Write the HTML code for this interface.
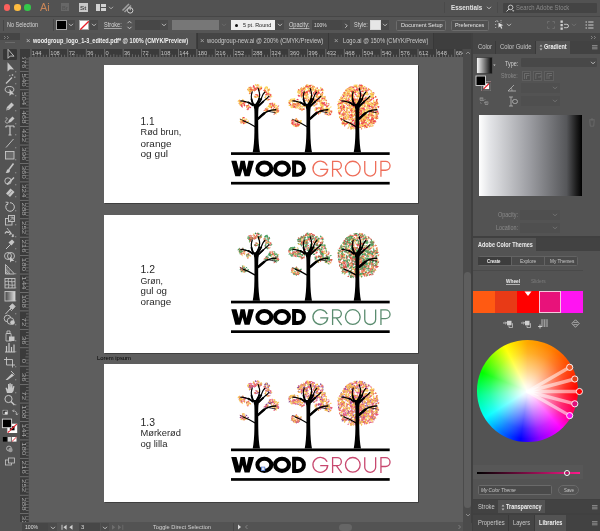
<!DOCTYPE html><html><head><meta charset="utf-8"><style>
*{box-sizing:border-box;margin:0;padding:0}
html,body{width:600px;height:531px;overflow:hidden;background:#535353;font-family:"Liberation Sans",sans-serif;}
body{will-change:transform}
svg text{font-family:"Liberation Sans",sans-serif}
.abs{position:absolute}
.ab{position:absolute;left:104px;width:314px;background:#fff;box-shadow:0.8px 0.8px 0 rgba(0,0,0,.4)}
.ab svg{position:absolute;left:0;top:0}
</style></head><body>
<svg width="0" height="0" style="position:absolute"><defs><symbol id="trunk" overflow="visible"><path d="M-3.6,0 C-2.6,-5 -2.0,-12 -1.9,-20 C-1.8,-30 -1.7,-38 -2.0,-43 C-2.4,-45.5 -3.2,-47 -2.6,-48.5 L2.6,-48.5 C3.2,-47 2.6,-45.5 2.1,-43 C1.8,-38 1.9,-30 2.0,-20 C2.1,-12 2.7,-5 3.7,0 Z" fill="#000"/><g stroke="#000" fill="none" stroke-linecap="round"><path d="M-1.6,-25.8 C-5,-27.8 -8.5,-29.8 -13,-31.5" stroke-width="1.3"/><path d="M-13,-31.5 C-14,-32.5 -15,-33 -16,-33" stroke-width="0.6"/><path d="M1.6,-33.5 C5,-36.5 8,-39.5 11.5,-41 C14,-42 16.5,-42.5 19.5,-42.5" stroke-width="1.5"/><path d="M1.6,-33.5 C4,-35.5 6,-37.5 8,-39" stroke-width="2.4"/><path d="M12,-41 C14.5,-40.5 16.5,-40 19,-39.5" stroke-width="0.8"/><path d="M-3.5,-47 C-6,-49 -8,-50 -10,-50.3 C-12,-50.8 -14,-51.2 -15.5,-51.3" stroke-width="1.2"/><path d="M-3.5,-47 C-5,-48.2 -6.5,-49.2 -8,-49.8" stroke-width="1.8"/><path d="M-2.9,-47.5 C-4.2,-50 -5,-53 -5,-55.5 C-5,-57.5 -4.6,-59 -4.1,-60.5" stroke-width="1.2"/><path d="M-2.9,-47.5 C-3.8,-49.5 -4.5,-51.5 -4.8,-53" stroke-width="1.8"/><path d="M0,-47.7 C2,-50.5 3.4,-54 3.4,-57.3 C3.4,-59.5 2.6,-61.8 1.9,-63.9" stroke-width="1.2"/><path d="M0,-47.7 C1.2,-49.5 2.3,-51.5 2.9,-53.5" stroke-width="1.8"/><path d="M1.3,-47.5 C3.5,-50.5 5.5,-54.5 6.7,-57.9 C7.3,-58.8 7.8,-59.5 8.5,-60.2" stroke-width="1.2"/><path d="M1.3,-47.5 C2.8,-49.5 4,-51.5 5,-53.5" stroke-width="1.8"/><path d="M2.5,-46.5 C5,-49 8,-52 11,-54.3 C11.6,-54.8 12.2,-55.5 12.7,-56.1" stroke-width="1.2"/><path d="M2.5,-46.5 C4,-48 5.5,-49.5 7,-50.8" stroke-width="1.8"/></g></symbol><symbol id="cr1" overflow="visible"><path fill="var(--c0)" fill-opacity="0.92" d="M-3.7,-62.9L-4.7,-61.8L-4.3,-60.4L-3.2,-61.5zM-6.4,-62.4L-7.8,-62.2L-8.5,-61.1L-7.1,-61.2zM-6.5,-64.0L-7.6,-62.9L-7.1,-61.4L-6.0,-62.5zM-4.2,-63.4L-3.7,-61.9L-2.2,-61.2L-2.7,-62.7zM-6.5,-60.7L-7.3,-59.2L-6.9,-57.6L-6.2,-59.1zM-4.3,-64.5L-5.5,-63.2L-5.1,-61.5L-3.9,-62.8zM-5.8,-63.0L-6.3,-61.3L-5.3,-59.8L-4.7,-61.5zM-0.3,-64.7L-1.3,-63.2L-0.7,-61.4L0.2,-63.0zM6.0,-65.0L4.3,-64.9L3.5,-63.4L5.2,-63.5zM1.7,-65.5L1.2,-64.4L1.8,-63.4L2.4,-64.5zM2.0,-63.4L1.4,-62.0L2.2,-60.7L2.8,-62.1zM-0.2,-64.4L-1.5,-63.3L-1.2,-61.7L0.1,-62.7zM-0.5,-68.4L-1.6,-67.5L-1.3,-66.2L-0.2,-67.0zM5.7,-64.1L4.3,-64.2L4.0,-62.9L5.4,-62.8zM4.5,-65.5L3.3,-64.3L3.3,-62.7L4.5,-63.8zM8.9,-65.1L7.9,-64.2L8.2,-62.8L9.2,-63.7zM12.5,-62.4L11.4,-61.0L11.4,-59.2L12.5,-60.6zM9.7,-62.3L8.4,-62.5L7.9,-61.3L9.2,-61.1zM8.4,-61.7L9.2,-60.6L10.5,-61.0L9.7,-62.1zM13.7,-63.9L12.0,-63.1L11.7,-61.3L13.4,-62.0zM11.2,-62.4L11.0,-60.9L12.2,-59.9L12.5,-61.5zM9.8,-65.9L10.5,-64.2L12.1,-63.6L11.5,-65.2zM7.4,-60.5L8.4,-59.3L10.0,-59.5L8.9,-60.6zM10.8,-66.1L9.9,-64.5L10.8,-62.8L11.7,-64.5zM9.0,-65.9L8.3,-64.2L9.1,-62.6L9.9,-64.3zM13.0,-59.9L11.8,-58.7L11.7,-57.1L12.9,-58.2zM15.1,-56.3L14.0,-55.7L14.1,-54.5L15.1,-55.1zM11.4,-53.1L10.1,-53.7L8.8,-52.9L10.2,-52.3zM10.4,-57.7L11.5,-56.4L13.2,-56.3L12.1,-57.7zM9.7,-58.1L10.6,-57.1L12.0,-57.0L11.1,-58.1zM8.8,-58.0L10.0,-57.3L11.3,-57.7L10.1,-58.4zM-16.3,-51.5L-17.5,-50.3L-17.2,-48.6L-16.0,-49.8zM-16.6,-49.1L-15.9,-47.8L-14.5,-47.5L-15.2,-48.8zM-11.5,-51.3L-11.3,-49.9L-9.9,-49.6L-10.1,-51.0zM-11.7,-50.9L-12.9,-50.1L-12.5,-48.7L-11.2,-49.5zM-9.9,-51.5L-11.4,-50.8L-11.7,-49.1L-10.2,-49.9zM-8.1,-46.7L-9.7,-46.7L-10.5,-45.4L-9.0,-45.4zM0.0,-56.7L-1.4,-56.3L-1.6,-54.7L-0.1,-55.2zM-0.7,-57.8L0.2,-57.0L1.4,-57.3L0.5,-58.1zM2.7,-56.8L0.9,-56.3L0.1,-54.8L1.8,-55.2zM3.8,-56.2L2.0,-56.5L0.5,-55.5L2.3,-55.1zM-2.0,-55.9L-1.4,-54.7L0.0,-54.7L-0.6,-56.0zM12.1,-46.1L12.9,-44.6L14.5,-44.3L13.8,-45.8zM13.9,-46.7L13.5,-45.5L14.3,-44.4L14.8,-45.7zM17.6,-48.1L17.6,-46.6L19.0,-46.3L19.0,-47.7zM20.1,-43.7L18.8,-43.7L18.5,-42.5L19.8,-42.5zM14.9,-46.4L16.2,-45.5L17.6,-46.0L16.3,-46.9zM12.8,-48.7L12.4,-47.0L13.6,-45.6L13.9,-47.4zM13.9,-46.0L13.9,-44.4L15.0,-43.4L15.0,-44.9zM21.9,-45.0L20.6,-45.0L20.0,-43.9L21.2,-44.0zM13.5,-46.2L12.0,-46.4L11.0,-45.3L12.4,-45.1zM14.3,-46.4L14.8,-45.2L16.0,-45.1L15.6,-46.3zM22.8,-41.1L21.4,-40.7L21.2,-39.4L22.6,-39.7zM21.6,-41.9L19.9,-42.4L18.4,-41.5L20.1,-41.1zM18.3,-41.2L17.9,-39.8L19.0,-38.7L19.4,-40.2zM19.8,-43.6L20.1,-42.2L21.6,-42.0L21.2,-43.4zM10.9,-45.3L9.5,-44.2L9.7,-42.4L11.1,-43.5zM12.0,-43.1L10.2,-42.6L9.6,-41.0L11.3,-41.5zM8.4,-42.5L9.5,-41.5L10.8,-41.8L9.8,-42.7zM7.6,-41.4L9.2,-40.4L11.0,-41.0L9.4,-42.0zM-9.2,-31.3L-8.5,-30.3L-7.3,-30.5L-8.0,-31.5zM-16.9,-31.1L-15.9,-30.2L-14.8,-30.9L-15.7,-31.8zM-14.1,-31.6L-14.3,-29.8L-12.9,-28.7L-12.7,-30.5zM-7.4,-31.0L-8.9,-31.0L-10.1,-29.9L-8.5,-29.9zM-14.4,-33.0L-15.1,-31.8L-14.3,-30.7L-13.6,-31.8zM-10.8,-33.9L-10.1,-32.6L-8.7,-32.2L-9.4,-33.5zM-10.4,-32.7L-11.7,-32.5L-11.9,-31.2L-10.6,-31.3zM-13.6,-31.6L-12.7,-30.2L-11.0,-30.1L-11.9,-31.5zM-7.2,-31.7L-8.6,-31.3L-9.2,-29.9L-7.7,-30.3z"/><path fill="var(--c1)" fill-opacity="0.92" d="M-4.1,-64.8L-5.2,-65.4L-6.3,-64.7L-5.2,-64.2zM-2.6,-63.2L-3.9,-63.5L-4.9,-62.5L-3.5,-62.2zM-4.0,-62.9L-5.2,-62.2L-5.2,-60.9L-4.0,-61.5zM-4.7,-64.0L-6.3,-63.7L-6.7,-62.1L-5.1,-62.5zM-5.4,-61.9L-6.3,-60.8L-5.9,-59.5L-5.0,-60.5zM-8.1,-65.2L-7.3,-64.1L-6.0,-64.3L-6.8,-65.4zM-7.7,-62.1L-7.4,-60.6L-5.8,-60.0L-6.2,-61.6zM4.2,-65.7L3.7,-64.3L4.8,-63.2L5.3,-64.6zM0.6,-67.0L1.8,-65.7L3.6,-65.8L2.4,-67.1zM1.2,-66.2L-0.1,-65.6L-0.3,-64.2L1.1,-64.8zM1.9,-68.3L0.3,-67.8L-0.4,-66.2L1.3,-66.8zM-1.0,-64.0L-2.0,-63.0L-1.9,-61.6L-0.9,-62.6zM4.0,-63.7L2.9,-64.4L2.0,-63.4L3.1,-62.7zM-2.6,-66.3L-2.1,-64.6L-0.7,-63.6L-1.1,-65.3zM8.6,-61.2L7.6,-60.1L8.0,-58.6L8.9,-59.8zM7.5,-60.6L8.5,-59.5L10.0,-59.6L9.0,-60.7zM10.0,-55.4L8.6,-55.5L7.9,-54.4L9.2,-54.2zM12.7,-59.2L11.4,-59.6L10.8,-58.4L12.1,-58.0zM-16.4,-50.6L-15.3,-49.4L-13.7,-49.4L-14.8,-50.6zM-17.9,-48.9L-16.9,-48.2L-15.9,-48.8L-16.9,-49.6zM-16.9,-52.9L-17.4,-51.4L-16.8,-49.9L-16.3,-51.4zM-13.8,-50.5L-15.5,-50.9L-17.1,-49.9L-15.3,-49.6zM-14.2,-52.9L-14.1,-51.3L-12.6,-50.6L-12.7,-52.2zM-10.9,-48.0L-12.5,-48.3L-13.4,-47.0L-11.8,-46.7zM-13.0,-48.4L-12.8,-46.8L-11.4,-46.0L-11.6,-47.6zM-7.7,-47.9L-8.4,-46.2L-7.8,-44.5L-7.1,-46.2zM-9.2,-47.2L-8.3,-45.7L-6.6,-45.5L-7.5,-47.0zM-2.1,-55.4L-0.7,-54.3L1.1,-55.0L-0.4,-56.1zM19.9,-44.0L18.6,-43.5L18.4,-42.2L19.7,-42.6zM15.5,-47.0L16.4,-45.8L17.8,-45.9L16.9,-47.1zM22.5,-42.8L21.2,-41.7L21.3,-40.1L22.5,-41.1zM20.2,-43.3L20.2,-42.1L21.4,-41.6L21.3,-42.8zM-14.6,-32.7L-14.9,-30.9L-13.5,-29.7L-13.2,-31.5zM-13.5,-34.5L-14.3,-33.5L-13.7,-32.3L-12.9,-33.4zM-16.5,-34.1L-16.3,-32.4L-15.1,-31.2L-15.3,-32.9z"/><path fill="var(--c2)" fill-opacity="0.92" d="M-5.0,-63.7L-5.9,-62.7L-5.4,-61.5L-4.5,-62.5zM-7.7,-59.3L-6.6,-58.5L-5.4,-59.0L-6.4,-59.8zM-9.5,-62.8L-8.5,-61.9L-7.3,-62.4L-8.3,-63.3zM0.7,-65.4L0.9,-64.1L2.2,-63.7L2.0,-65.1zM3.5,-62.7L2.0,-62.5L1.8,-61.0L3.3,-61.2zM5.8,-65.0L4.3,-64.3L4.4,-62.7L5.8,-63.4zM-3.2,-67.2L-3.0,-66.0L-1.8,-65.5L-2.1,-66.7zM-1.5,-63.7L-0.1,-62.6L1.5,-63.0L0.2,-64.1zM-3.4,-67.4L-3.3,-65.6L-1.8,-64.7L-1.9,-66.5zM-2.8,-64.7L-2.5,-63.5L-1.3,-63.2L-1.5,-64.4zM8.9,-60.7L9.4,-59.4L10.8,-59.4L10.3,-60.7zM8.0,-63.4L8.1,-61.7L9.3,-60.6L9.2,-62.2zM10.2,-58.9L9.6,-57.6L10.7,-56.6L11.3,-57.9zM11.0,-58.7L9.7,-58.8L9.3,-57.5L10.6,-57.4zM9.4,-58.4L10.9,-57.8L12.5,-58.3L11.0,-59.0zM13.7,-58.2L12.5,-58.9L11.4,-58.2L12.5,-57.5zM11.4,-52.9L12.5,-52.1L13.7,-52.6L12.6,-53.5zM-14.2,-49.2L-13.3,-48.2L-12.1,-48.6L-12.9,-49.7zM-13.1,-48.8L-14.3,-49.4L-15.4,-48.6L-14.2,-47.9zM-14.6,-46.9L-14.9,-45.4L-13.9,-44.3L-13.5,-45.8zM-12.0,-48.4L-12.6,-46.9L-11.5,-45.5L-10.9,-47.1zM-18.5,-51.7L-17.2,-50.5L-15.5,-50.5L-16.7,-51.7zM-15.2,-51.7L-16.5,-50.6L-16.0,-49.1L-14.8,-50.1zM-11.0,-50.5L-12.3,-50.2L-12.4,-48.9L-11.1,-49.2zM-17.9,-48.8L-16.7,-47.7L-15.0,-47.7L-16.2,-48.9zM-15.2,-47.8L-15.7,-46.6L-15.0,-45.6L-14.5,-46.8zM-7.3,-45.5L-6.6,-44.1L-5.0,-44.2L-5.7,-45.6zM-7.5,-45.2L-8.8,-44.4L-8.7,-42.9L-7.4,-43.6zM-7.3,-46.0L-7.2,-44.7L-6.0,-44.2L-6.1,-45.5zM-8.1,-46.7L-9.3,-47.3L-10.3,-46.4L-9.1,-45.7zM-7.1,-44.0L-8.8,-43.9L-10.0,-42.6L-8.2,-42.7zM1.7,-58.4L0.7,-57.1L1.3,-55.5L2.3,-56.9zM17.8,-48.4L17.5,-46.7L18.8,-45.7L19.1,-47.3zM17.1,-42.7L15.5,-42.6L14.3,-41.6L15.9,-41.6zM16.1,-49.6L15.1,-48.2L15.6,-46.5L16.6,-47.9zM18.6,-47.3L17.1,-47.1L16.4,-45.8L17.9,-46.0zM23.1,-46.4L21.8,-46.8L20.8,-45.8L22.1,-45.5zM15.4,-46.1L14.6,-44.9L15.1,-43.4L16.0,-44.7zM19.4,-42.5L17.7,-42.2L17.2,-40.5L18.9,-40.9zM19.5,-41.1L20.1,-39.6L21.7,-39.5L21.1,-41.0zM16.7,-43.3L16.9,-41.5L18.5,-40.6L18.3,-42.4zM9.0,-42.7L10.3,-41.7L11.8,-42.0L10.5,-43.0zM10.8,-42.5L10.1,-41.4L11.1,-40.4L11.8,-41.6zM-14.2,-34.6L-13.5,-33.7L-12.3,-33.9L-13.1,-34.8zM-10.6,-29.9L-9.7,-28.9L-8.6,-29.4L-9.4,-30.4zM-13.1,-30.0L-13.5,-28.7L-12.6,-27.7L-12.2,-29.0zM-10.9,-31.1L-12.2,-31.3L-12.9,-30.1L-11.5,-30.0zM-14.3,-30.1L-15.5,-30.2L-16.2,-29.1L-14.9,-29.0zM-13.8,-35.2L-12.7,-33.9L-11.0,-33.9L-12.1,-35.2zM-9.5,-31.5L-11.3,-31.7L-12.8,-30.7L-10.9,-30.4zM-11.2,-31.5L-13.0,-31.9L-14.3,-30.7L-12.6,-30.3z"/><path fill="var(--c3)" fill-opacity="0.92" d="M-5.7,-66.1L-6.8,-65.1L-6.7,-63.7L-5.6,-64.6zM-4.9,-63.6L-6.2,-64.0L-6.9,-62.8L-5.6,-62.4zM-2.2,-63.1L-3.7,-62.4L-4.2,-60.8L-2.7,-61.5zM-3.8,-59.4L-5.3,-59.8L-6.6,-59.0L-5.1,-58.6zM0.6,-62.7L-0.5,-63.3L-1.5,-62.5L-0.4,-61.8zM-3.7,-65.8L-3.7,-64.6L-2.6,-64.1L-2.6,-65.3zM3.8,-64.3L3.0,-62.9L3.8,-61.5L4.6,-62.9zM-1.0,-63.6L-2.3,-62.4L-2.1,-60.6L-0.7,-61.8zM0.1,-65.1L0.8,-63.4L2.6,-62.8L1.8,-64.5zM0.5,-64.2L-1.3,-64.4L-2.6,-63.2L-0.8,-63.0zM13.6,-62.5L12.3,-63.1L11.2,-62.1L12.5,-61.5zM9.0,-62.1L7.7,-62.6L6.7,-61.5L8.0,-61.0zM11.2,-60.3L9.8,-60.6L8.8,-59.6L10.2,-59.3zM12.2,-54.0L11.4,-52.8L11.8,-51.4L12.6,-52.6zM11.2,-53.9L10.0,-53.9L9.5,-52.7L10.8,-52.7zM15.4,-57.9L13.9,-58.6L12.6,-57.5L14.1,-56.9zM14.0,-53.8L13.1,-53.1L13.2,-51.9L14.1,-52.6zM15.5,-57.4L13.8,-57.1L12.9,-55.7L14.6,-55.9zM11.0,-58.8L9.4,-58.2L8.7,-56.7L10.2,-57.3zM14.3,-56.3L12.9,-55.8L12.4,-54.4L13.9,-54.9zM-16.1,-49.2L-15.8,-47.4L-14.3,-46.5L-14.6,-48.3zM-13.3,-49.6L-12.1,-48.8L-10.6,-49.2L-11.9,-49.9zM-13.5,-47.4L-15.2,-47.6L-16.4,-46.3L-14.7,-46.2zM-17.4,-52.1L-16.9,-50.4L-15.3,-49.7L-15.8,-51.4zM-14.5,-48.5L-14.9,-47.1L-13.8,-46.0L-13.5,-47.5zM-12.7,-51.0L-12.2,-49.3L-10.8,-48.4L-11.2,-50.1zM-7.5,-48.5L-8.2,-47.3L-7.6,-46.0L-6.9,-47.2zM-7.3,-42.9L-8.5,-43.2L-9.4,-42.3L-8.2,-42.0zM-8.8,-46.7L-10.0,-45.6L-10.0,-43.9L-8.8,-45.0zM-1.6,-58.0L-0.2,-56.8L1.6,-57.1L0.2,-58.3zM-2.6,-56.2L-1.7,-55.1L-0.4,-55.4L-1.2,-56.4zM19.6,-44.4L21.1,-43.4L22.8,-43.8L21.3,-44.8zM15.0,-43.3L15.5,-41.8L17.0,-41.0L16.5,-42.6zM12.4,-48.7L14.0,-48.0L15.7,-48.7L14.0,-49.4zM17.2,-48.2L15.8,-47.4L15.9,-45.9L17.3,-46.6zM16.9,-46.3L17.5,-44.6L19.2,-44.1L18.6,-45.8zM13.6,-48.6L13.4,-46.9L14.7,-45.9L14.9,-47.6zM18.4,-43.7L19.0,-42.5L20.3,-42.4L19.7,-43.5zM17.5,-44.8L16.7,-43.2L17.1,-41.6L17.9,-43.1zM15.5,-47.3L16.8,-46.6L18.1,-47.3L16.8,-47.9zM15.6,-50.2L15.5,-48.6L16.6,-47.3L16.6,-48.9zM21.2,-44.9L19.9,-44.3L19.9,-43.0L21.1,-43.5zM22.2,-43.2L20.4,-42.8L19.8,-41.1L21.6,-41.5zM19.7,-39.2L17.9,-38.9L16.9,-37.4L18.7,-37.7zM20.1,-40.7L19.0,-40.0L19.2,-38.7L20.4,-39.4zM23.4,-41.4L21.8,-41.9L20.4,-40.9L22.0,-40.3zM9.2,-42.0L10.5,-41.1L11.9,-41.7L10.6,-42.5zM9.3,-42.6L7.8,-42.4L6.9,-41.1L8.4,-41.4zM8.6,-44.3L8.7,-43.0L9.9,-42.6L9.7,-43.8zM11.6,-44.5L10.5,-43.2L10.6,-41.4L11.7,-42.8zM9.8,-41.6L10.9,-40.3L12.4,-40.8L11.4,-42.0zM-11.1,-30.4L-12.4,-29.5L-12.4,-27.9L-11.1,-28.9zM-11.6,-32.3L-12.5,-31.2L-12.1,-29.8L-11.1,-30.9zM-11.7,-31.0L-11.5,-29.7L-10.3,-29.3L-10.5,-30.6zM-10.5,-32.4L-12.0,-32.2L-12.9,-30.9L-11.3,-31.1zM-12.5,-30.9L-12.7,-29.2L-11.7,-27.9L-11.5,-29.5zM-15.5,-31.1L-14.8,-29.7L-13.2,-29.2L-14.0,-30.6z"/><path fill="var(--c4)" fill-opacity="0.92" d="M-9.0,-64.1L-8.0,-63.2L-6.7,-63.5L-7.7,-64.4zM-8.3,-64.1L-9.0,-62.5L-8.1,-61.1L-7.4,-62.7zM-7.4,-60.9L-7.3,-59.5L-6.1,-58.7L-6.2,-60.1zM5.8,-66.5L4.4,-66.2L3.7,-65.0L5.1,-65.3zM3.6,-67.2L2.0,-68.0L0.5,-67.1L2.1,-66.3zM3.7,-64.4L2.1,-64.8L0.9,-63.5L2.6,-63.2zM5.5,-64.8L4.0,-65.4L2.6,-64.5L4.1,-64.0zM11.3,-64.3L10.2,-63.1L10.7,-61.5L11.7,-62.8zM10.9,-65.9L9.5,-65.4L9.2,-63.9L10.6,-64.4zM11.0,-60.3L11.7,-59.1L13.1,-59.2L12.4,-60.4zM13.9,-62.8L12.6,-62.5L12.5,-61.2L13.7,-61.5zM10.3,-53.3L10.4,-51.8L11.8,-51.3L11.8,-52.8zM15.4,-57.1L14.7,-56.1L15.4,-55.1L16.1,-56.1zM9.2,-57.3L8.6,-55.7L9.8,-54.5L10.3,-56.1zM8.3,-55.1L9.0,-53.8L10.4,-54.1L9.7,-55.4zM-17.6,-49.7L-16.8,-48.3L-15.2,-48.4L-16.0,-49.9zM-14.8,-50.0L-15.8,-49.0L-15.3,-47.7L-14.3,-48.7zM-17.0,-52.3L-18.4,-51.8L-18.8,-50.3L-17.4,-50.8zM-13.4,-53.4L-13.8,-52.3L-13.1,-51.3L-12.7,-52.4zM-15.7,-50.3L-14.8,-48.8L-13.1,-48.7L-14.0,-50.2zM-16.9,-53.1L-17.6,-52.3L-17.3,-51.2L-16.5,-52.0zM-16.4,-49.2L-16.9,-47.5L-16.3,-45.9L-15.8,-47.6zM-17.5,-50.8L-16.3,-49.8L-14.9,-50.3L-16.0,-51.3zM-9.7,-45.5L-9.9,-44.2L-8.8,-43.6L-8.6,-44.8zM-9.6,-46.3L-8.2,-45.2L-6.5,-45.4L-7.8,-46.5zM-1.6,-56.5L-2.1,-55.4L-1.3,-54.4L-0.7,-55.6zM18.2,-47.8L18.0,-46.2L19.0,-45.0L19.2,-46.6zM18.1,-43.4L16.9,-42.3L17.0,-40.6L18.2,-41.7zM16.6,-49.3L17.8,-48.1L19.5,-48.2L18.3,-49.4zM21.1,-46.6L20.3,-45.0L21.3,-43.5L22.1,-45.1zM15.0,-43.2L15.1,-41.6L16.5,-40.6L16.4,-42.3zM20.2,-44.9L18.9,-44.5L18.6,-43.2L19.8,-43.6zM17.4,-47.3L18.0,-46.2L19.3,-45.9L18.7,-47.1zM21.0,-47.5L19.3,-47.2L18.7,-45.6L20.4,-45.8zM11.7,-46.8L13.2,-45.8L14.8,-46.5L13.4,-47.5zM16.5,-44.1L15.9,-42.6L16.8,-41.2L17.4,-42.7zM15.7,-43.0L16.5,-41.6L18.1,-41.3L17.3,-42.7zM18.9,-40.9L20.1,-39.5L21.9,-39.4L20.7,-40.7zM18.2,-43.2L17.3,-41.9L18.3,-40.7L19.1,-42.0zM19.0,-40.5L19.1,-38.7L20.3,-37.5L20.3,-39.2zM17.9,-43.5L17.4,-41.7L18.4,-40.2L18.9,-42.0zM21.2,-43.4L19.8,-43.0L19.1,-41.7L20.5,-42.1zM11.0,-44.5L11.1,-43.0L12.5,-42.4L12.4,-43.9zM11.5,-41.7L10.0,-41.6L9.2,-40.3L10.7,-40.4zM-15.4,-30.1L-15.3,-28.7L-13.9,-28.1L-14.0,-29.5zM-13.3,-33.6L-12.6,-32.3L-11.1,-32.4L-11.8,-33.7zM-14.4,-35.5L-14.3,-34.3L-13.2,-33.6L-13.3,-34.9zM-11.8,-32.0L-13.1,-31.7L-13.6,-30.4L-12.3,-30.7zM-12.7,-31.5L-12.4,-30.4L-11.2,-30.1L-11.6,-31.2zM-9.8,-30.5L-11.4,-29.9L-11.8,-28.2L-10.1,-28.8z"/></symbol><symbol id="cr2" overflow="visible"><path fill="var(--c0)" fill-opacity="0.92" d="M-2.9,-59.6L-4.4,-59.4L-4.7,-58.0L-3.3,-58.2zM-7.2,-64.5L-6.4,-63.3L-5.1,-63.2L-5.8,-64.4zM-4.0,-64.8L-4.0,-63.1L-2.6,-62.2L-2.6,-63.9zM-2.9,-61.1L-4.6,-61.4L-6.0,-60.5L-4.4,-60.2zM-10.5,-62.1L-10.1,-60.8L-8.7,-60.7L-9.2,-62.0zM-9.8,-63.3L-9.8,-62.0L-8.7,-61.5L-8.6,-62.7zM-2.4,-61.0L-3.3,-59.6L-2.6,-58.1L-1.7,-59.5zM-6.2,-59.3L-7.1,-58.0L-6.3,-56.8L-5.4,-58.0zM-10.9,-57.3L-9.9,-56.5L-8.8,-57.1L-9.8,-57.9zM-7.1,-56.9L-7.5,-55.3L-6.7,-53.8L-6.3,-55.4zM-7.2,-59.7L-8.7,-59.7L-9.5,-58.4L-8.0,-58.5zM-11.6,-61.5L-10.5,-60.3L-9.0,-60.6L-10.0,-61.7zM-3.2,-61.6L-2.5,-60.6L-1.3,-60.6L-2.0,-61.6zM-3.0,-60.5L-3.4,-58.8L-2.2,-57.5L-1.8,-59.3zM-6.8,-63.3L-8.1,-62.9L-8.2,-61.6L-6.9,-62.0zM-2.3,-66.7L-3.2,-65.7L-2.8,-64.4L-1.9,-65.4zM6.1,-63.8L5.2,-62.3L5.6,-60.6L6.4,-62.1zM-0.0,-66.6L1.2,-65.4L2.8,-65.9L1.6,-67.0zM1.4,-64.6L2.2,-63.1L4.0,-63.0L3.1,-64.6zM3.4,-65.6L1.8,-65.2L1.6,-63.7L3.1,-64.1zM-5.0,-63.4L-3.8,-62.4L-2.4,-63.1L-3.6,-64.1zM-3.7,-64.5L-4.4,-63.4L-4.0,-62.2L-3.3,-63.3zM-0.9,-64.8L-0.8,-63.4L0.4,-62.9L0.3,-64.2zM0.3,-62.8L-1.0,-62.1L-1.2,-60.6L0.1,-61.3zM2.3,-64.2L0.6,-64.0L-0.4,-62.7L1.3,-62.9zM-4.0,-63.8L-4.4,-62.2L-3.7,-60.6L-3.3,-62.2zM-2.3,-60.8L-1.8,-59.5L-0.5,-59.1L-1.0,-60.4zM14.9,-60.2L13.9,-58.8L14.3,-57.3L15.2,-58.6zM10.5,-60.8L9.3,-60.2L9.0,-59.0L10.2,-59.5zM7.5,-57.1L8.7,-56.2L10.1,-56.5L9.0,-57.4zM6.5,-62.0L5.9,-60.4L6.8,-58.9L7.4,-60.5zM11.7,-62.5L10.4,-63.2L9.1,-62.3L10.5,-61.7zM9.1,-55.1L10.3,-54.3L11.7,-54.9L10.4,-55.8zM12.2,-56.2L10.8,-56.2L10.1,-54.9L11.6,-54.9zM9.7,-62.1L8.9,-61.0L9.8,-60.0L10.7,-61.1zM6.7,-61.0L7.6,-59.8L9.1,-59.5L8.2,-60.8zM8.7,-61.9L10.4,-60.9L12.1,-61.7L10.4,-62.7zM16.1,-61.6L14.4,-62.3L12.8,-61.4L14.4,-60.7zM7.0,-56.8L7.2,-55.2L8.7,-54.6L8.5,-56.2zM12.3,-65.4L11.7,-64.0L12.7,-62.9L13.4,-64.2zM13.3,-50.3L11.6,-49.6L11.2,-47.8L12.9,-48.5zM10.1,-50.8L8.7,-51.2L7.6,-50.1L9.0,-49.7zM10.0,-52.7L8.6,-53.1L7.6,-52.0L9.0,-51.6zM12.6,-52.7L12.5,-50.9L14.1,-50.0L14.1,-51.8zM11.9,-55.5L10.1,-55.8L8.6,-55.0L10.3,-54.6zM10.2,-51.7L8.7,-52.1L7.6,-51.0L9.1,-50.5zM15.5,-55.0L16.4,-54.1L17.7,-54.4L16.7,-55.3zM14.8,-56.2L15.7,-54.9L17.2,-54.8L16.3,-56.1zM-12.7,-48.4L-14.5,-48.3L-15.5,-46.9L-13.8,-47.0zM-14.0,-54.0L-14.8,-52.7L-14.1,-51.4L-13.2,-52.7zM-15.0,-53.5L-15.1,-51.7L-13.8,-50.4L-13.6,-52.2zM-17.3,-52.0L-18.9,-52.3L-20.0,-51.2L-18.4,-50.9zM-19.2,-50.6L-18.4,-49.5L-17.0,-49.7L-17.8,-50.8zM-15.0,-53.4L-14.1,-52.5L-12.9,-52.9L-13.8,-53.7zM-17.3,-47.5L-18.9,-47.5L-20.0,-46.3L-18.3,-46.2zM-16.9,-46.1L-16.5,-45.0L-15.3,-44.7L-15.7,-45.9zM-11.5,-51.1L-10.7,-49.6L-9.2,-49.0L-9.9,-50.5zM-8.5,-49.2L-10.3,-49.1L-11.5,-47.8L-9.7,-47.8zM-1.8,-46.4L-3.5,-46.5L-4.6,-45.3L-3.0,-45.1zM-7.1,-47.4L-8.7,-47.7L-9.9,-46.6L-8.3,-46.4zM-11.7,-45.2L-10.8,-43.8L-9.1,-43.5L-10.0,-44.9zM1.3,-52.2L-0.2,-52.8L-1.7,-52.0L-0.1,-51.4zM1.0,-54.0L1.3,-52.8L2.6,-52.5L2.2,-53.8zM3.1,-53.4L1.6,-53.5L0.9,-52.2L2.4,-52.2zM-0.9,-50.3L0.5,-49.5L2.0,-50.1L0.6,-50.9zM-4.9,-55.1L-4.2,-53.5L-2.5,-53.3L-3.2,-54.8zM-3.0,-55.8L-3.5,-54.1L-2.7,-52.6L-2.3,-54.2zM1.6,-56.6L3.0,-55.4L4.7,-55.8L3.4,-57.0zM-2.7,-59.1L-1.4,-58.0L0.3,-58.0L-1.0,-59.1zM-1.4,-54.2L-2.8,-54.8L-4.1,-54.1L-2.7,-53.4zM4.2,-56.5L2.7,-57.1L1.3,-56.3L2.8,-55.7zM-3.1,-57.4L-2.3,-55.9L-0.5,-55.8L-1.4,-57.3zM-2.3,-59.0L-1.9,-57.6L-0.6,-57.0L-1.0,-58.4zM14.3,-47.0L13.6,-45.9L14.5,-44.8L15.2,-46.0zM19.8,-44.0L18.3,-44.2L17.1,-43.3L18.6,-43.1zM17.7,-42.0L16.5,-42.5L15.5,-41.5L16.8,-41.1zM19.9,-45.2L18.5,-44.2L18.4,-42.5L19.9,-43.5zM16.1,-42.1L14.8,-42.8L13.5,-42.0L14.9,-41.3zM14.0,-48.0L13.3,-46.6L14.4,-45.6L15.1,-46.9zM15.7,-48.2L14.4,-47.6L14.3,-46.2L15.6,-46.8zM16.3,-41.7L16.9,-40.3L18.4,-40.4L17.7,-41.7zM12.3,-49.0L13.1,-47.8L14.6,-47.7L13.7,-48.9zM14.2,-43.7L15.1,-42.6L16.4,-43.1L15.5,-44.2zM11.6,-42.5L12.3,-41.3L13.6,-41.5L13.0,-42.6zM18.2,-41.8L19.1,-40.2L20.8,-39.7L19.9,-41.2zM20.6,-44.4L20.0,-42.9L20.6,-41.4L21.2,-42.9zM24.1,-41.2L22.6,-41.6L21.6,-40.5L23.1,-40.1zM19.4,-37.8L19.8,-36.4L21.3,-36.2L20.8,-37.5zM20.7,-43.2L20.1,-41.8L21.0,-40.5L21.7,-42.0zM14.1,-44.4L12.5,-45.0L11.1,-44.0L12.7,-43.4zM11.8,-41.8L11.9,-40.4L13.2,-39.8L13.1,-41.2zM9.4,-40.2L9.3,-38.6L10.6,-37.5L10.7,-39.2zM8.3,-42.1L8.3,-40.8L9.3,-40.0L9.4,-41.3zM13.4,-42.5L11.8,-42.8L10.6,-41.9L12.1,-41.6zM10.8,-45.7L9.7,-44.3L10.0,-42.6L11.1,-44.0zM11.3,-45.0L10.3,-43.9L10.4,-42.4L11.4,-43.5zM9.6,-40.6L10.8,-39.6L12.3,-39.9L11.1,-40.9zM11.8,-43.1L11.6,-41.8L12.7,-41.0L12.9,-42.3zM-11.3,-27.7L-12.5,-26.5L-12.1,-24.8L-10.9,-26.0zM-6.7,-31.8L-8.5,-31.5L-9.3,-29.8L-7.5,-30.1zM-15.1,-27.7L-15.0,-26.5L-13.9,-26.0L-14.0,-27.2zM-14.9,-29.1L-16.5,-29.2L-17.8,-28.2L-16.2,-28.1zM-14.1,-33.3L-14.8,-32.3L-14.3,-31.2L-13.5,-32.2zM-9.9,-27.7L-11.2,-27.0L-11.5,-25.6L-10.2,-26.3zM-10.1,-32.3L-11.5,-32.2L-11.9,-31.0L-10.6,-31.0zM-7.8,-27.7L-9.4,-28.2L-10.7,-27.1L-9.0,-26.5zM-10.6,-31.8L-11.1,-30.2L-10.0,-29.0L-9.5,-30.6zM3.5,-52.7L4.1,-51.1L5.8,-50.8L5.2,-52.4zM4.1,-46.6L5.3,-45.7L6.8,-46.2L5.6,-47.2zM3.8,-48.7L2.6,-47.9L2.4,-46.4L3.6,-47.2zM6.4,-54.9L5.1,-53.7L5.0,-52.0L6.3,-53.2zM7.3,-51.3L5.9,-51.0L5.7,-49.6L7.1,-49.9z"/><path fill="var(--c1)" fill-opacity="0.92" d="M-7.4,-59.4L-7.2,-57.6L-5.7,-56.9L-5.9,-58.6zM-7.9,-58.4L-7.1,-57.2L-5.6,-57.1L-6.5,-58.3zM-4.8,-63.7L-6.6,-63.7L-7.5,-62.2L-5.7,-62.2zM-11.0,-60.0L-9.8,-58.8L-8.1,-58.9L-9.3,-60.1zM-7.3,-61.8L-8.7,-61.3L-8.8,-59.8L-7.4,-60.4zM-3.5,-57.5L-2.3,-56.5L-0.8,-56.7L-2.0,-57.7zM-3.7,-59.6L-4.1,-58.4L-3.1,-57.5L-2.7,-58.8zM-2.2,-59.7L-3.6,-60.6L-5.0,-59.7L-3.6,-58.8zM-6.3,-64.7L-7.5,-63.6L-7.0,-62.1L-5.8,-63.2zM-2.3,-67.3L-3.1,-65.7L-2.7,-63.9L-1.9,-65.5zM-5.1,-64.8L-4.5,-63.6L-3.2,-63.9L-3.8,-65.2zM4.3,-67.4L2.6,-67.6L1.2,-66.5L3.0,-66.2zM6.2,-62.7L4.5,-63.2L3.0,-62.3L4.7,-61.7zM5.0,-66.8L5.5,-65.1L6.9,-64.2L6.5,-65.9zM-0.6,-67.3L-2.0,-66.7L-2.1,-65.3L-0.8,-65.8zM3.5,-66.5L3.9,-65.3L5.2,-65.5L4.8,-66.8zM5.3,-65.4L4.6,-64.1L4.9,-62.7L5.7,-63.9zM1.3,-62.5L-0.2,-61.8L-0.4,-60.2L1.1,-60.9zM-0.5,-62.6L0.5,-61.4L1.9,-61.4L1.0,-62.5zM-3.4,-65.3L-4.8,-65.0L-5.4,-63.7L-4.0,-64.0zM15.4,-62.8L13.9,-63.4L12.6,-62.3L14.2,-61.8zM13.6,-59.2L12.3,-58.8L12.1,-57.5L13.3,-57.9zM7.1,-64.0L6.6,-62.4L7.6,-61.0L8.2,-62.6zM12.3,-58.9L11.5,-57.8L12.3,-56.7L13.1,-57.8zM9.8,-57.9L8.1,-57.3L7.4,-55.6L9.1,-56.2zM13.7,-59.1L13.4,-57.4L14.4,-56.1L14.7,-57.8zM6.4,-61.8L7.3,-60.5L8.8,-60.8L7.9,-62.1zM4.4,-59.2L5.0,-57.7L6.7,-57.6L6.1,-59.1zM10.1,-62.5L9.0,-61.5L9.5,-60.1L10.6,-61.1zM16.6,-53.6L15.2,-52.7L15.1,-51.0L16.5,-51.9zM13.2,-49.0L14.4,-48.2L15.6,-48.9L14.5,-49.7zM11.8,-52.2L10.5,-52.1L9.7,-51.0L11.0,-51.1zM14.9,-53.8L13.7,-54.1L13.0,-53.1L14.2,-52.8zM11.6,-56.7L10.3,-55.6L10.6,-53.9L11.9,-55.0zM6.6,-52.3L8.2,-51.4L9.8,-52.1L8.2,-53.0zM12.7,-56.5L11.1,-56.4L10.4,-54.8L12.1,-54.9zM12.4,-48.5L13.8,-47.6L15.5,-47.8L14.1,-48.7zM-11.4,-49.4L-10.2,-48.7L-8.8,-49.1L-10.1,-49.9zM-18.1,-48.3L-17.9,-46.9L-16.6,-46.4L-16.8,-47.8zM-13.8,-48.9L-13.0,-47.3L-11.2,-46.7L-12.0,-48.3zM-15.9,-48.9L-16.1,-47.6L-15.1,-46.8L-14.9,-48.1zM-12.6,-51.9L-14.2,-52.0L-15.1,-50.8L-13.5,-50.6zM-15.7,-48.9L-14.1,-48.1L-12.4,-48.7L-14.0,-49.4zM-13.9,-46.1L-13.9,-44.5L-12.8,-43.4L-12.8,-45.0zM-16.0,-47.6L-15.2,-46.2L-13.7,-45.9L-14.5,-47.2zM-18.2,-49.5L-19.4,-49.2L-19.8,-47.9L-18.5,-48.3zM-12.5,-46.3L-13.0,-44.7L-12.0,-43.3L-11.6,-44.9zM-18.2,-51.0L-19.8,-50.6L-20.2,-49.0L-18.6,-49.4zM-10.3,-48.1L-10.0,-46.6L-8.5,-45.9L-8.8,-47.5zM-10.2,-49.6L-11.8,-50.1L-13.0,-48.9L-11.4,-48.4zM-5.0,-43.8L-6.5,-43.5L-7.2,-42.1L-5.7,-42.5zM-8.8,-45.5L-9.1,-44.3L-8.1,-43.6L-7.7,-44.8zM-6.0,-49.1L-4.7,-48.1L-3.1,-48.3L-4.4,-49.4zM-6.8,-49.1L-8.2,-48.8L-8.7,-47.5L-7.3,-47.8zM-3.8,-44.7L-4.9,-44.0L-4.9,-42.7L-3.8,-43.4zM-6.9,-44.9L-8.0,-43.9L-7.8,-42.3L-6.6,-43.4zM-4.9,-43.2L-6.5,-42.6L-7.2,-41.1L-5.6,-41.7zM-4.4,-47.2L-5.9,-46.8L-6.3,-45.2L-4.7,-45.7zM0.8,-52.6L1.2,-51.1L2.6,-50.3L2.1,-51.8zM-1.1,-54.4L-0.5,-52.7L1.1,-51.9L0.4,-53.5zM3.9,-53.7L2.4,-54.2L1.2,-53.0L2.8,-52.6zM-1.2,-52.3L-2.9,-52.2L-3.9,-50.8L-2.2,-50.9zM0.8,-55.2L-0.3,-56.0L-1.3,-55.2L-0.2,-54.3zM20.5,-44.2L18.9,-44.1L17.9,-42.9L19.5,-43.0zM21.3,-47.5L19.6,-47.5L18.9,-46.0L20.6,-46.0zM11.7,-43.5L11.7,-42.1L13.0,-41.9L13.0,-43.2zM15.1,-42.8L13.9,-42.9L13.3,-41.9L14.5,-41.9zM12.6,-48.1L12.0,-46.4L13.1,-45.0L13.7,-46.7zM16.0,-43.6L16.6,-41.9L18.3,-41.4L17.7,-43.1zM18.5,-46.7L17.3,-45.5L17.6,-43.8L18.8,-45.0zM20.7,-40.2L19.9,-39.2L20.5,-38.1L21.3,-39.1zM21.6,-39.0L21.7,-37.8L22.9,-37.4L22.8,-38.7zM18.0,-40.5L17.2,-39.0L17.5,-37.4L18.4,-38.9zM24.3,-41.5L22.6,-41.5L21.8,-40.0L23.5,-40.0zM9.4,-45.0L10.6,-43.8L12.3,-44.0L11.1,-45.2zM8.4,-43.9L6.9,-43.1L6.6,-41.5L8.1,-42.3zM9.1,-40.5L9.1,-38.8L10.3,-37.7L10.4,-39.4zM12.7,-40.8L11.6,-39.9L11.9,-38.6L13.0,-39.4zM-11.6,-32.3L-11.0,-30.9L-9.4,-30.8L-10.1,-32.3zM-12.0,-34.5L-12.8,-33.3L-11.9,-32.2L-11.1,-33.4zM-15.3,-31.0L-16.8,-30.8L-17.4,-29.4L-15.8,-29.5zM-10.8,-31.6L-12.1,-32.4L-13.1,-31.4L-11.9,-30.7zM-15.3,-29.3L-15.8,-27.7L-15.1,-26.1L-14.6,-27.8zM-9.7,-28.0L-10.4,-26.6L-9.7,-25.2L-9.1,-26.6zM-8.6,-31.4L-8.1,-29.7L-6.6,-28.8L-7.1,-30.5zM-16.9,-32.6L-15.5,-31.5L-13.8,-31.8L-15.1,-32.9zM5.0,-51.1L3.6,-50.5L3.6,-49.1L4.9,-49.7zM3.5,-53.7L2.1,-53.7L1.5,-52.5L2.9,-52.5zM1.7,-52.5L2.8,-51.3L4.4,-51.5L3.3,-52.7zM1.2,-50.4L1.4,-48.8L2.7,-47.9L2.5,-49.4zM2.6,-49.5L4.1,-48.6L5.6,-49.3L4.1,-50.2zM8.7,-49.8L7.6,-48.4L8.3,-46.8L9.4,-48.2zM7.4,-54.0L5.9,-53.4L5.2,-51.9L6.8,-52.5z"/><path fill="var(--c2)" fill-opacity="0.92" d="M-4.2,-60.7L-4.1,-59.1L-2.8,-58.1L-2.9,-59.7zM-10.8,-57.1L-9.7,-55.6L-7.8,-55.7L-8.9,-57.2zM-8.8,-57.6L-7.5,-56.5L-5.9,-56.8L-7.2,-57.8zM-1.0,-60.1L-2.4,-60.5L-3.4,-59.5L-2.0,-59.0zM-7.0,-60.1L-6.3,-58.8L-4.9,-59.2L-5.6,-60.4zM-7.0,-63.2L-6.9,-61.8L-5.5,-61.3L-5.7,-62.7zM-5.8,-62.4L-7.2,-61.7L-7.2,-60.2L-5.8,-60.9zM-5.1,-58.5L-4.1,-57.0L-2.4,-56.6L-3.4,-58.0zM1.1,-66.4L-0.8,-66.5L-2.0,-65.0L-0.1,-65.0zM0.0,-67.0L-0.4,-65.3L0.3,-63.7L0.8,-65.4zM-2.6,-64.7L-4.3,-64.5L-5.5,-63.3L-3.8,-63.5zM0.8,-66.9L1.7,-65.8L2.9,-66.5L2.0,-67.5zM-0.7,-67.4L-2.0,-66.5L-1.8,-64.8L-0.5,-65.8zM-1.7,-61.4L-1.8,-59.8L-0.4,-59.2L-0.3,-60.7zM3.8,-65.3L3.6,-63.9L4.9,-63.4L5.0,-64.8zM10.8,-55.0L9.7,-55.8L8.6,-55.0L9.7,-54.3zM8.4,-64.9L8.6,-63.6L9.8,-63.5L9.6,-64.7zM10.7,-61.9L9.3,-60.7L9.6,-58.9L11.0,-60.0zM7.7,-62.4L6.7,-61.0L7.1,-59.4L8.1,-60.8zM8.1,-60.7L6.6,-60.1L6.5,-58.4L8.0,-59.1zM7.4,-59.5L8.4,-58.4L9.8,-59.0L8.7,-60.1zM7.1,-61.7L6.1,-60.5L6.9,-59.1L7.9,-60.3zM11.6,-60.1L10.0,-60.0L9.4,-58.5L11.0,-58.6zM14.6,-60.6L13.4,-60.1L13.6,-58.8L14.8,-59.4zM10.1,-58.2L8.6,-58.7L7.4,-57.6L8.9,-57.2zM14.0,-64.6L13.1,-63.2L13.4,-61.6L14.3,-63.0zM5.6,-59.0L5.2,-57.7L6.3,-56.9L6.7,-58.2zM14.2,-54.4L13.2,-53.6L13.4,-52.3L14.4,-53.1zM15.2,-55.3L13.6,-54.5L13.1,-52.8L14.7,-53.6zM16.6,-52.4L17.4,-51.2L18.9,-51.4L18.1,-52.6zM16.0,-49.9L14.8,-49.3L14.5,-47.9L15.8,-48.5zM11.4,-53.4L10.0,-52.9L10.0,-51.4L11.4,-51.9zM13.1,-51.0L11.7,-51.3L10.5,-50.6L11.9,-50.2zM17.3,-56.4L16.0,-55.6L15.7,-54.2L17.0,-55.0zM15.0,-50.6L14.0,-49.7L14.1,-48.4L15.1,-49.3zM-17.8,-53.2L-18.1,-51.7L-17.2,-50.6L-16.9,-52.1zM-18.7,-48.4L-18.3,-47.1L-17.0,-46.6L-17.4,-47.9zM-19.2,-50.2L-18.9,-48.7L-17.7,-47.8L-18.0,-49.3zM-11.6,-48.9L-10.2,-47.8L-8.4,-47.9L-9.8,-49.0zM-12.1,-52.8L-10.8,-51.9L-9.4,-52.5L-10.7,-53.4zM-9.3,-46.6L-11.0,-46.7L-12.3,-45.6L-10.6,-45.5zM-14.2,-47.6L-12.7,-46.5L-10.9,-46.9L-12.4,-48.0zM-15.3,-52.2L-14.0,-51.3L-12.5,-51.7L-13.8,-52.6zM-15.4,-46.2L-14.0,-45.1L-12.3,-45.7L-13.7,-46.8zM-9.7,-43.3L-8.3,-42.6L-6.8,-43.1L-8.2,-43.8zM-4.4,-48.7L-5.1,-47.1L-4.6,-45.5L-3.9,-47.0zM0.1,-53.3L-0.6,-52.1L-0.1,-50.9L0.6,-52.1zM-4.6,-54.8L-4.1,-53.6L-2.8,-53.3L-3.4,-54.5zM4.6,-57.6L3.3,-57.1L2.9,-55.8L4.2,-56.3zM15.5,-47.8L16.6,-46.4L18.4,-46.6L17.3,-48.0zM15.8,-50.6L15.6,-49.0L16.8,-47.9L17.0,-49.5zM13.9,-43.8L13.8,-42.4L15.1,-41.9L15.1,-43.3zM16.6,-43.6L16.8,-42.2L18.0,-41.5L17.8,-42.9zM17.7,-42.8L18.6,-41.8L20.0,-41.9L19.1,-42.9zM17.7,-42.9L18.2,-41.1L19.9,-40.5L19.4,-42.3zM15.1,-46.2L13.9,-46.5L13.2,-45.5L14.4,-45.2zM17.8,-46.4L18.4,-45.1L19.9,-45.4L19.3,-46.7zM17.1,-47.9L15.5,-48.0L14.6,-46.7L16.1,-46.7zM19.6,-41.5L18.0,-41.5L16.8,-40.4L18.4,-40.4zM18.5,-39.8L16.8,-39.6L16.0,-38.1L17.8,-38.2zM18.3,-39.9L17.0,-39.4L16.5,-38.0L17.8,-38.6zM17.5,-38.4L18.6,-37.1L20.3,-37.3L19.2,-38.6zM23.1,-38.4L21.6,-38.6L20.6,-37.3L22.2,-37.1zM9.6,-41.3L7.8,-41.0L6.9,-39.4L8.7,-39.7zM10.5,-39.8L9.7,-38.7L10.5,-37.6L11.3,-38.7zM13.6,-43.8L12.2,-43.1L12.1,-41.4L13.6,-42.2zM9.7,-44.9L8.5,-44.2L8.3,-42.8L9.5,-43.5zM-10.7,-30.1L-11.1,-28.5L-10.2,-27.2L-9.8,-28.8zM-8.3,-28.0L-9.9,-28.4L-10.9,-27.1L-9.3,-26.7zM-12.0,-28.1L-13.4,-26.9L-13.4,-25.0L-11.9,-26.2zM-17.1,-28.9L-16.0,-27.6L-14.2,-28.0L-15.4,-29.3zM-13.0,-29.4L-13.4,-27.6L-12.1,-26.3L-11.8,-28.1zM-12.3,-33.9L-13.2,-32.8L-12.7,-31.4L-11.7,-32.5zM-15.7,-28.4L-14.2,-27.4L-12.4,-27.7L-13.9,-28.7zM-12.4,-32.3L-11.0,-31.3L-9.4,-31.7L-10.8,-32.7zM-10.0,-28.0L-11.2,-28.0L-11.8,-27.0L-10.7,-27.0zM-14.2,-30.6L-15.9,-30.4L-16.9,-29.1L-15.2,-29.3zM-17.1,-32.1L-15.9,-31.0L-14.4,-31.7L-15.6,-32.8zM-14.9,-31.2L-14.9,-30.0L-13.7,-29.5L-13.6,-30.8zM1.6,-52.3L2.6,-51.0L4.2,-51.4L3.2,-52.7zM7.0,-52.6L7.8,-51.4L9.2,-51.7L8.4,-52.9zM6.0,-53.3L5.6,-52.0L6.6,-51.1L7.0,-52.4zM7.0,-51.5L6.3,-49.9L7.2,-48.5L7.9,-50.0zM4.6,-53.9L3.2,-54.2L2.7,-53.0L4.0,-52.7zM3.3,-53.1L2.4,-52.0L3.2,-50.8L4.1,-51.9z"/><path fill="var(--c3)" fill-opacity="0.92" d="M-10.5,-63.6L-10.1,-61.9L-8.6,-61.0L-8.9,-62.7zM-3.2,-57.4L-5.0,-57.6L-6.2,-56.3L-4.4,-56.1zM-7.9,-61.4L-8.1,-60.2L-7.1,-59.5L-6.9,-60.7zM-5.3,-63.6L-5.1,-62.0L-3.7,-61.1L-3.9,-62.7zM-6.5,-58.2L-7.5,-56.7L-6.7,-55.1L-5.8,-56.6zM-5.0,-59.8L-6.6,-59.8L-7.4,-58.5L-5.9,-58.5zM-6.9,-65.3L-7.9,-63.9L-7.8,-62.1L-6.7,-63.6zM-1.6,-68.1L-2.6,-67.0L-2.0,-65.7L-1.0,-66.7zM1.5,-61.8L0.8,-60.6L1.7,-59.6L2.4,-60.8zM-2.1,-61.2L-1.8,-59.9L-0.5,-59.8L-0.8,-61.0zM1.1,-67.0L0.4,-65.8L1.1,-64.6L1.9,-65.8zM0.5,-67.5L1.0,-65.9L2.6,-65.3L2.0,-66.9zM0.9,-66.3L1.7,-64.8L3.4,-64.3L2.5,-65.8zM5.3,-66.5L3.7,-65.6L3.3,-63.8L4.9,-64.7zM4.0,-63.4L2.2,-63.0L1.4,-61.5L3.1,-61.8zM1.3,-62.9L0.2,-61.5L0.7,-59.8L1.8,-61.2zM-3.3,-66.4L-2.2,-64.9L-0.4,-64.6L-1.5,-66.1zM8.9,-56.2L7.6,-56.1L7.5,-54.7L8.8,-54.9zM9.0,-62.3L7.5,-61.8L7.2,-60.2L8.7,-60.7zM8.5,-59.0L10.0,-58.1L11.7,-58.5L10.2,-59.4zM13.4,-63.4L12.1,-62.4L12.3,-60.7L13.6,-61.7zM6.3,-59.9L5.0,-60.2L4.3,-59.1L5.6,-58.8zM13.4,-51.7L11.7,-51.9L10.3,-50.9L12.0,-50.7zM12.1,-49.5L13.5,-48.7L15.0,-49.4L13.6,-50.2zM11.7,-52.8L10.5,-51.4L10.7,-49.5L11.9,-50.9zM11.7,-57.8L12.7,-56.4L14.4,-56.1L13.4,-57.5zM14.2,-54.1L15.7,-53.1L17.4,-53.8L15.9,-54.7zM8.5,-54.0L8.1,-52.5L9.2,-51.4L9.7,-52.9zM7.9,-52.2L8.9,-50.8L10.6,-50.6L9.6,-51.9zM12.6,-55.7L11.1,-55.6L10.0,-54.5L11.6,-54.6zM11.7,-56.0L12.1,-54.5L13.4,-53.6L13.0,-55.1zM-16.6,-47.7L-15.7,-46.0L-13.9,-45.7L-14.7,-47.3zM-11.9,-47.0L-11.0,-45.9L-9.6,-46.1L-10.5,-47.3zM-18.1,-53.3L-18.5,-51.9L-17.3,-51.1L-16.9,-52.4zM-14.8,-51.6L-16.5,-51.9L-18.1,-51.0L-16.3,-50.7zM-16.1,-44.9L-14.5,-44.3L-12.8,-44.9L-14.5,-45.5zM-16.0,-48.8L-15.1,-47.6L-13.6,-47.9L-14.5,-49.1zM-17.0,-46.7L-16.0,-45.7L-14.6,-46.0L-15.6,-47.0zM-8.9,-46.6L-8.4,-45.5L-7.2,-45.3L-7.7,-46.4zM-10.9,-48.2L-11.2,-46.4L-10.1,-45.0L-9.8,-46.8zM-10.2,-49.1L-10.7,-47.3L-9.5,-45.8L-9.0,-47.7zM-9.2,-47.6L-10.5,-48.2L-11.5,-47.2L-10.2,-46.6zM-11.5,-48.8L-10.0,-47.8L-8.3,-47.9L-9.7,-48.9zM-7.5,-50.2L-8.6,-48.8L-7.9,-47.1L-6.8,-48.6zM-4.3,-43.1L-6.0,-43.4L-7.4,-42.4L-5.7,-42.1zM-7.6,-49.0L-8.5,-48.0L-8.1,-46.8L-7.2,-47.8zM-6.1,-43.2L-4.7,-42.2L-3.1,-42.8L-4.5,-43.8zM3.0,-59.6L1.8,-60.0L1.0,-58.9L2.3,-58.5zM4.5,-57.1L3.3,-57.3L2.7,-56.2L4.0,-56.0zM-1.3,-51.1L-0.4,-50.0L0.9,-50.2L0.1,-51.3zM-0.6,-59.2L-1.5,-58.3L-0.8,-57.2L0.2,-58.0zM-2.4,-54.9L-2.8,-53.4L-1.8,-52.1L-1.4,-53.6zM4.1,-56.2L3.0,-55.3L3.0,-53.8L4.1,-54.8zM13.0,-42.0L13.9,-40.4L15.7,-40.3L14.8,-41.9zM19.4,-42.8L18.4,-41.7L18.9,-40.4L19.9,-41.4zM15.1,-49.0L13.9,-49.5L12.8,-48.6L14.1,-48.1zM18.1,-50.4L17.6,-48.7L18.6,-47.1L19.1,-48.9zM19.4,-49.0L20.2,-48.0L21.6,-48.0L20.8,-49.1zM12.8,-44.6L11.6,-43.7L11.8,-42.2L12.9,-43.1zM13.1,-45.9L12.7,-44.2L14.0,-42.9L14.4,-44.7zM11.7,-44.8L13.3,-43.9L14.9,-44.8L13.3,-45.7zM23.6,-41.7L22.7,-40.3L23.2,-38.7L24.0,-40.1zM23.9,-41.3L22.1,-41.7L20.5,-40.9L22.3,-40.5zM21.6,-40.7L20.5,-39.6L20.8,-38.1L21.9,-39.2zM8.9,-44.7L7.6,-45.1L6.6,-44.1L7.9,-43.7zM8.2,-45.1L7.6,-43.3L8.6,-41.7L9.2,-43.5zM-13.6,-28.9L-13.8,-27.2L-12.8,-25.8L-12.6,-27.5zM-8.9,-28.0L-10.3,-28.6L-11.6,-28.0L-10.2,-27.5zM-12.4,-30.7L-11.3,-29.5L-9.7,-29.7L-10.8,-30.9zM-12.2,-29.3L-11.5,-28.3L-10.3,-28.4L-11.0,-29.4zM-9.1,-30.9L-9.9,-29.8L-9.1,-28.6L-8.3,-29.7zM-13.8,-27.9L-13.2,-26.9L-12.0,-26.9L-12.6,-27.9zM-14.6,-32.0L-16.4,-32.3L-17.7,-31.1L-15.9,-30.9zM-9.7,-26.8L-11.5,-27.1L-12.9,-25.9L-11.1,-25.6zM4.0,-49.9L2.9,-50.8L1.8,-49.9L3.0,-49.0zM7.5,-48.2L6.1,-47.7L5.9,-46.2L7.3,-46.8zM3.4,-53.9L3.2,-52.5L4.2,-51.6L4.4,-53.0z"/><path fill="var(--c4)" fill-opacity="0.92" d="M-7.4,-60.9L-8.2,-59.6L-7.9,-58.2L-7.1,-59.4zM-11.4,-60.3L-10.9,-59.1L-9.8,-59.0L-10.2,-60.1zM-7.9,-57.4L-8.3,-56.2L-7.4,-55.3L-7.0,-56.5zM-4.8,-57.3L-5.6,-56.1L-4.9,-54.9L-4.2,-56.1zM-7.7,-62.9L-9.0,-61.6L-8.9,-59.8L-7.5,-61.1zM-6.9,-64.7L-7.1,-63.1L-5.9,-62.3L-5.7,-63.8zM-1.7,-63.0L-3.3,-63.7L-4.8,-62.8L-3.2,-62.1zM-7.4,-63.3L-8.3,-62.4L-7.7,-61.3L-6.8,-62.2zM-8.6,-60.5L-9.9,-60.0L-10.3,-58.6L-9.0,-59.2zM-4.3,-57.6L-4.1,-56.3L-2.9,-55.8L-3.1,-57.1zM-1.3,-68.1L-1.0,-66.2L0.6,-65.4L0.4,-67.3zM4.2,-65.6L4.0,-64.1L5.3,-63.4L5.4,-64.9zM-4.8,-66.2L-5.1,-64.9L-4.1,-64.1L-3.8,-65.3zM0.1,-68.3L-1.4,-67.7L-1.8,-66.2L-0.3,-66.7zM5.6,-64.5L4.1,-64.7L3.0,-63.7L4.5,-63.4zM-1.8,-64.0L-0.5,-62.8L1.3,-63.0L-0.0,-64.2zM3.8,-61.3L2.5,-60.2L2.4,-58.5L3.7,-59.6zM5.1,-62.9L3.6,-61.9L3.4,-60.2L4.8,-61.2zM2.5,-65.2L1.1,-65.5L0.4,-64.3L1.7,-64.1zM12.8,-57.3L12.1,-55.9L13.0,-54.7L13.7,-56.1zM6.8,-64.5L7.6,-62.9L9.4,-62.8L8.6,-64.4zM8.2,-61.3L8.1,-59.7L9.2,-58.4L9.2,-60.0zM10.1,-62.0L8.8,-61.4L8.7,-59.9L10.1,-60.5zM9.2,-56.2L8.1,-55.6L7.9,-54.3L9.0,-54.9zM16.7,-56.4L15.6,-55.4L16.2,-54.1L17.3,-55.0zM9.8,-56.6L8.8,-55.7L9.1,-54.3L10.1,-55.3zM12.5,-52.5L10.8,-52.6L9.5,-51.6L11.2,-51.5zM14.7,-57.2L13.2,-57.0L12.7,-55.7L14.1,-55.9zM13.1,-51.4L11.6,-50.9L11.2,-49.3L12.7,-49.9zM8.7,-56.7L8.6,-55.1L9.8,-54.0L9.9,-55.6zM13.9,-55.8L12.2,-55.9L11.1,-54.5L12.8,-54.4zM12.3,-52.4L11.1,-52.6L10.3,-51.6L11.5,-51.5zM16.9,-53.9L16.4,-52.3L17.4,-51.0L17.9,-52.6zM12.8,-54.1L13.3,-52.5L14.6,-51.7L14.2,-53.2zM12.7,-55.5L14.2,-54.7L16.0,-55.1L14.4,-56.0zM-18.2,-45.2L-16.9,-43.9L-15.0,-44.2L-16.4,-45.4zM-15.8,-53.3L-16.9,-52.0L-16.4,-50.5L-15.3,-51.7zM-16.5,-50.6L-18.2,-51.1L-19.8,-50.4L-18.1,-49.9zM-17.2,-51.9L-18.4,-52.7L-19.6,-51.9L-18.4,-51.0zM-18.5,-47.1L-17.8,-45.4L-16.2,-44.6L-16.8,-46.3zM-16.3,-50.9L-16.2,-49.5L-15.2,-48.7L-15.2,-50.1zM-9.1,-51.2L-10.7,-50.5L-11.3,-48.8L-9.7,-49.5zM-18.5,-51.8L-18.1,-50.4L-16.6,-50.2L-17.0,-51.6zM-10.7,-46.8L-11.4,-45.7L-10.5,-44.6L-9.7,-45.8zM-12.5,-53.5L-14.1,-54.1L-15.6,-53.3L-14.0,-52.6zM-15.5,-54.1L-16.8,-52.9L-17.0,-51.1L-15.7,-52.3zM-19.7,-51.5L-18.2,-50.7L-16.5,-51.2L-18.1,-52.1zM-9.6,-52.3L-10.9,-51.4L-11.1,-49.9L-9.9,-50.8zM-12.7,-47.4L-13.2,-46.2L-12.1,-45.3L-11.7,-46.6zM-17.1,-53.7L-16.2,-52.1L-14.4,-51.8L-15.3,-53.4zM-14.5,-47.0L-15.8,-46.9L-16.5,-45.7L-15.2,-45.8zM-16.1,-53.4L-17.7,-53.6L-18.8,-52.4L-17.2,-52.2zM-3.7,-49.7L-4.7,-48.2L-4.1,-46.5L-3.1,-48.0zM-7.9,-49.0L-8.7,-47.9L-7.9,-46.8L-7.0,-47.9zM-8.4,-50.4L-7.8,-49.3L-6.5,-49.2L-7.1,-50.3zM-9.5,-47.6L-9.0,-46.4L-7.6,-46.4L-8.2,-47.7zM-9.7,-47.4L-8.6,-46.0L-6.9,-46.3L-8.0,-47.6zM-7.9,-47.2L-7.5,-45.4L-5.8,-44.7L-6.2,-46.5zM-10.0,-48.2L-10.9,-47.3L-10.1,-46.2L-9.2,-47.1zM-5.2,-46.6L-6.5,-45.5L-6.5,-43.9L-5.2,-44.9zM-8.3,-44.8L-9.4,-44.7L-9.9,-43.6L-8.7,-43.8zM-7.6,-44.1L-6.8,-42.7L-5.3,-42.1L-6.1,-43.5zM1.6,-56.5L1.8,-55.0L3.2,-54.2L3.0,-55.7zM0.6,-57.9L-0.9,-57.5L-1.8,-56.1L-0.2,-56.6zM-2.2,-55.2L-2.0,-53.8L-0.8,-53.1L-1.0,-54.5zM-0.7,-56.1L-2.6,-56.2L-3.6,-54.6L-1.7,-54.6zM1.0,-51.0L-0.4,-51.4L-1.3,-50.2L0.2,-49.8zM-2.0,-50.6L-0.5,-49.7L1.2,-50.2L-0.3,-51.1zM2.3,-56.1L1.3,-54.6L1.8,-52.9L2.8,-54.4zM23.8,-45.5L22.2,-45.7L20.9,-44.7L22.5,-44.5zM19.2,-45.4L18.0,-45.0L17.7,-43.8L18.8,-44.3zM21.7,-42.2L20.1,-42.5L19.2,-41.1L20.8,-40.9zM11.6,-48.2L12.1,-46.6L13.8,-45.9L13.2,-47.6zM15.4,-42.9L14.2,-43.3L13.2,-42.3L14.5,-42.0zM13.3,-47.2L14.6,-46.1L16.2,-46.2L14.9,-47.2zM20.7,-44.7L20.5,-43.2L21.5,-42.1L21.7,-43.6zM11.7,-47.1L12.9,-45.8L14.7,-45.6L13.5,-47.0zM14.8,-46.4L13.8,-45.1L14.3,-43.5L15.4,-44.8zM16.5,-44.2L16.6,-42.6L17.8,-41.6L17.7,-43.2zM21.4,-42.1L19.7,-42.5L18.5,-41.2L20.2,-40.8zM18.0,-51.5L17.2,-49.9L17.8,-48.3L18.6,-49.8zM13.8,-48.2L12.4,-48.5L11.6,-47.2L13.1,-46.9zM20.5,-41.7L19.1,-41.7L18.2,-40.5L19.6,-40.5zM17.6,-44.1L18.6,-42.7L20.3,-42.6L19.3,-44.0zM21.5,-41.6L20.5,-40.7L21.0,-39.4L22.0,-40.4zM19.0,-40.2L17.4,-39.4L16.7,-37.7L18.4,-38.5zM20.5,-44.2L19.9,-42.9L20.7,-41.6L21.2,-43.0zM18.8,-39.5L17.5,-39.0L17.4,-37.6L18.8,-38.1zM6.2,-44.1L6.2,-42.5L7.6,-41.8L7.6,-43.4zM8.0,-42.8L6.5,-42.4L6.2,-40.9L7.8,-41.3zM10.0,-41.0L8.7,-39.8L8.9,-38.0L10.2,-39.3zM-12.2,-29.5L-13.5,-29.7L-14.6,-28.9L-13.2,-28.6zM-14.1,-27.4L-14.0,-26.1L-12.9,-25.4L-13.0,-26.7zM-10.6,-33.3L-12.4,-33.0L-13.3,-31.4L-11.5,-31.6zM-7.7,-29.9L-8.1,-28.6L-6.9,-28.1L-6.5,-29.4zM-13.1,-32.6L-12.8,-30.8L-11.2,-29.8L-11.5,-31.7zM-10.2,-31.1L-11.1,-30.1L-10.2,-29.0L-9.3,-30.0zM-6.1,-31.9L-7.8,-32.0L-9.1,-30.7L-7.3,-30.6zM-8.1,-30.8L-9.8,-30.6L-10.9,-29.3L-9.2,-29.5zM-13.4,-27.6L-14.7,-27.0L-14.9,-25.5L-13.6,-26.2zM5.2,-54.8L4.9,-53.1L6.2,-51.9L6.5,-53.6zM5.0,-46.4L6.0,-45.7L7.1,-46.1L6.2,-46.8zM7.9,-50.7L6.2,-50.3L5.4,-48.8L7.1,-49.2zM1.8,-53.0L2.8,-52.1L4.1,-52.3L3.1,-53.2zM1.1,-51.8L1.8,-50.6L3.3,-50.5L2.6,-51.8zM0.7,-48.1L1.7,-47.0L3.2,-46.9L2.2,-48.1z"/></symbol><symbol id="cr3" overflow="visible"><path fill="var(--c0)" fill-opacity="0.92" d="M8.1,-63.6L8.4,-61.7L9.9,-60.7L9.7,-62.6zM5.0,-26.7L3.2,-27.1L1.8,-26.1L3.5,-25.7zM-12.2,-30.3L-12.9,-28.8L-12.0,-27.5L-11.4,-28.9zM18.6,-50.2L17.4,-50.3L16.7,-49.3L17.9,-49.2zM8.3,-26.9L7.1,-27.5L5.9,-26.9L7.1,-26.3zM-11.2,-60.5L-12.8,-60.1L-13.6,-58.6L-12.0,-59.1zM-6.0,-31.2L-6.6,-29.7L-5.8,-28.3L-5.1,-29.8zM4.9,-28.7L3.8,-27.7L4.2,-26.3L5.3,-27.3zM15.9,-48.1L14.6,-48.2L14.2,-47.0L15.5,-46.8zM-16.0,-35.1L-17.2,-33.6L-16.7,-31.8L-15.6,-33.3zM-0.1,-41.7L0.7,-40.3L2.3,-40.2L1.5,-41.6zM-8.7,-46.8L-7.6,-45.2L-5.7,-45.2L-6.8,-46.7zM6.7,-37.4L5.8,-35.8L6.6,-34.1L7.5,-35.7zM-15.3,-46.7L-15.2,-45.3L-14.1,-44.3L-14.2,-45.8zM-0.4,-40.6L-1.7,-40.1L-2.3,-38.8L-1.0,-39.3zM4.8,-55.5L3.0,-55.8L1.7,-54.6L3.5,-54.4zM6.5,-33.5L6.7,-32.2L8.1,-32.0L7.9,-33.4zM-3.2,-58.6L-4.3,-57.9L-4.0,-56.6L-2.9,-57.3zM10.3,-59.4L8.6,-59.9L7.1,-58.9L8.8,-58.4zM16.8,-34.5L15.3,-34.3L14.3,-33.1L15.9,-33.3zM5.7,-45.1L4.4,-44.6L4.3,-43.2L5.6,-43.7zM-3.2,-34.4L-4.6,-33.2L-4.3,-31.3L-3.0,-32.6zM-2.5,-62.7L-2.8,-60.9L-1.6,-59.6L-1.3,-61.4zM-4.7,-61.0L-3.2,-60.0L-1.5,-60.8L-3.1,-61.8zM-6.6,-64.2L-5.5,-63.1L-4.2,-63.8L-5.3,-64.8zM22.2,-38.9L20.7,-39.5L19.3,-38.7L20.8,-38.2zM5.7,-49.9L4.2,-49.2L4.0,-47.6L5.5,-48.3zM-19.0,-42.4L-19.3,-40.7L-18.0,-39.5L-17.7,-41.2zM-5.6,-60.3L-6.5,-59.3L-5.6,-58.2L-4.8,-59.3zM-7.7,-62.1L-8.5,-60.6L-7.8,-59.0L-7.0,-60.6zM8.5,-50.5L9.7,-49.7L10.9,-50.5L9.7,-51.3zM-0.5,-51.7L-1.3,-50.3L-0.3,-49.1L0.5,-50.5zM-5.6,-38.0L-6.8,-37.9L-7.3,-36.7L-6.0,-36.8zM5.8,-52.0L4.2,-52.2L3.2,-50.8L4.8,-50.6zM-14.6,-35.8L-14.0,-34.2L-12.6,-33.4L-13.2,-35.0zM4.6,-47.8L4.6,-46.4L5.8,-45.8L5.9,-47.1zM0.7,-56.9L2.2,-55.9L3.9,-56.1L2.5,-57.1zM-2.7,-53.6L-2.3,-52.4L-1.0,-52.4L-1.5,-53.6zM-4.4,-45.0L-4.1,-43.7L-2.7,-43.7L-3.1,-45.0zM16.2,-32.9L14.9,-32.0L15.0,-30.4L16.3,-31.3zM1.2,-44.2L0.3,-42.8L0.6,-41.2L1.5,-42.5zM8.4,-41.0L6.9,-41.3L5.6,-40.5L7.1,-40.2zM-11.3,-50.0L-12.7,-49.8L-13.4,-48.5L-11.9,-48.6zM-9.6,-28.2L-8.1,-27.3L-6.4,-27.7L-7.9,-28.6zM15.0,-56.9L13.9,-56.3L13.9,-55.1L14.9,-55.7zM3.0,-42.8L2.1,-41.3L2.6,-39.6L3.4,-41.1zM13.9,-44.1L14.8,-43.2L16.0,-43.3L15.1,-44.2zM-1.2,-48.0L0.3,-46.9L2.0,-47.5L0.6,-48.6zM18.1,-30.1L16.6,-30.6L15.4,-29.5L16.9,-29.0zM10.7,-43.6L9.6,-42.7L10.2,-41.4L11.3,-42.3zM6.0,-33.1L4.1,-33.0L3.0,-31.5L4.9,-31.6zM-5.9,-39.5L-6.2,-38.1L-5.2,-37.1L-4.9,-38.5zM5.0,-36.6L5.0,-35.3L6.0,-34.5L6.0,-35.8zM-10.0,-34.7L-9.0,-33.8L-7.9,-34.7L-9.0,-35.5zM-6.4,-31.7L-5.3,-30.6L-3.7,-30.7L-4.9,-31.8zM4.0,-61.7L4.7,-60.6L6.1,-60.6L5.3,-61.7zM-13.9,-49.9L-15.4,-49.3L-15.6,-47.6L-14.1,-48.3zM-6.7,-30.8L-7.6,-29.7L-7.3,-28.2L-6.4,-29.4zM-10.0,-40.5L-11.1,-40.0L-11.2,-38.8L-10.1,-39.3zM-2.7,-47.4L-3.8,-45.9L-3.5,-44.1L-2.4,-45.6zM14.6,-40.5L14.9,-39.4L16.0,-39.0L15.7,-40.2zM12.2,-63.9L10.8,-63.2L10.3,-61.7L11.7,-62.4zM-0.0,-45.2L-1.8,-45.1L-2.9,-43.7L-1.1,-43.7zM6.2,-34.0L5.0,-33.2L5.2,-31.8L6.4,-32.6zM-9.1,-52.3L-10.7,-52.9L-12.1,-51.8L-10.5,-51.2zM3.5,-56.2L2.1,-55.6L1.7,-54.2L3.1,-54.8zM-13.0,-28.1L-14.6,-28.4L-15.9,-27.4L-14.3,-27.1zM7.3,-43.0L8.4,-41.8L9.9,-42.2L8.9,-43.4zM19.3,-35.9L18.4,-34.7L19.0,-33.4L19.9,-34.5zM11.9,-42.5L10.2,-42.4L9.1,-41.1L10.8,-41.2zM-15.5,-49.8L-17.3,-50.2L-18.7,-49.0L-16.9,-48.7zM4.8,-49.2L4.0,-48.3L4.3,-47.1L5.1,-48.0zM-10.0,-49.5L-11.4,-49.3L-11.8,-48.0L-10.4,-48.1zM-2.3,-51.1L-3.7,-50.7L-3.8,-49.3L-2.5,-49.7zM-2.3,-32.9L-2.4,-31.2L-1.0,-30.3L-0.8,-32.0zM1.8,-47.6L0.7,-46.1L1.1,-44.3L2.3,-45.8zM19.5,-38.2L18.8,-37.2L19.4,-36.1L20.2,-37.1zM-14.0,-52.3L-15.2,-53.0L-16.3,-52.1L-15.1,-51.4zM-6.2,-62.6L-7.8,-63.1L-9.1,-61.9L-7.5,-61.5zM-7.4,-47.4L-6.6,-45.9L-4.9,-45.4L-5.8,-46.9zM-14.8,-52.8L-14.3,-51.5L-12.9,-51.6L-13.5,-52.9zM-1.9,-32.2L-0.8,-31.0L0.7,-31.4L-0.3,-32.6zM3.4,-32.3L2.0,-31.7L2.0,-30.2L3.4,-30.8zM5.4,-35.0L4.6,-33.4L5.6,-31.9L6.4,-33.5zM14.2,-46.4L14.5,-45.1L15.8,-45.0L15.5,-46.2zM18.1,-44.8L17.9,-43.2L18.9,-42.0L19.0,-43.5zM9.8,-59.8L8.7,-59.6L8.3,-58.5L9.4,-58.7zM-8.9,-39.8L-10.1,-40.2L-10.9,-39.3L-9.7,-38.9zM7.0,-34.1L6.7,-32.5L8.0,-31.5L8.3,-33.1zM-1.4,-37.3L-0.2,-35.9L1.7,-36.2L0.5,-37.6zM-11.2,-29.9L-10.6,-28.7L-9.3,-28.7L-9.9,-29.9zM8.5,-27.0L7.1,-27.8L5.8,-26.9L7.1,-26.0zM-5.6,-28.2L-6.5,-27.1L-6.4,-25.6L-5.5,-26.7zM9.0,-39.1L9.0,-37.7L10.1,-36.7L10.1,-38.2zM0.3,-67.8L-1.3,-67.6L-1.8,-66.1L-0.2,-66.3zM5.1,-32.1L5.1,-30.7L6.5,-30.3L6.4,-31.7zM8.1,-47.2L7.9,-45.3L9.3,-44.0L9.4,-45.9zM-6.4,-48.9L-6.2,-47.3L-4.8,-46.7L-5.0,-48.2zM8.3,-40.3L9.1,-39.2L10.3,-39.7L9.5,-40.8zM4.4,-58.0L5.3,-56.7L6.9,-56.7L6.0,-58.0zM-4.0,-64.7L-5.5,-64.8L-6.3,-63.6L-4.8,-63.5zM14.6,-40.7L14.9,-39.0L16.4,-38.2L16.2,-40.0zM12.5,-48.5L12.7,-47.3L13.8,-47.0L13.7,-48.2zM7.4,-32.7L6.4,-31.5L7.1,-30.1L8.0,-31.3zM-12.6,-34.8L-14.3,-34.3L-15.1,-32.8L-13.4,-33.2zM10.2,-35.1L8.8,-35.6L7.9,-34.4L9.3,-34.0zM-15.8,-56.7L-16.7,-55.5L-16.4,-54.0L-15.5,-55.2zM-11.1,-62.7L-12.3,-62.1L-12.0,-60.7L-10.8,-61.3zM-7.4,-62.2L-7.2,-60.8L-6.0,-60.1L-6.1,-61.5zM-6.3,-65.1L-6.4,-63.4L-5.1,-62.2L-5.0,-63.9zM13.3,-32.8L13.8,-31.4L15.2,-31.0L14.7,-32.3zM-16.2,-29.2L-14.8,-28.3L-13.2,-28.6L-14.6,-29.5zM6.5,-66.3L7.0,-65.1L8.3,-65.0L7.8,-66.2zM-12.1,-31.3L-13.5,-32.0L-14.7,-31.0L-13.3,-30.3zM-8.2,-62.5L-8.9,-61.3L-8.6,-59.9L-7.8,-61.1zM1.5,-39.3L2.0,-38.1L3.4,-37.7L2.8,-39.0zM-2.1,-42.9L-0.6,-42.1L1.1,-42.5L-0.5,-43.3zM-4.1,-61.4L-3.7,-59.8L-2.4,-59.0L-2.8,-60.5zM7.1,-40.3L5.5,-40.4L4.6,-39.1L6.2,-39.0zM15.8,-30.4L14.2,-30.7L13.0,-29.5L14.7,-29.1zM11.0,-60.0L9.7,-60.7L8.7,-59.6L10.0,-58.9zM15.0,-41.1L15.4,-39.8L16.6,-39.3L16.3,-40.6zM0.4,-61.6L-1.2,-60.9L-1.4,-59.3L0.1,-60.0zM-0.0,-51.7L-0.5,-50.2L0.3,-48.9L0.8,-50.4zM-10.2,-41.3L-10.9,-40.3L-10.4,-39.1L-9.6,-40.2zM0.4,-29.4L-0.5,-28.1L0.0,-26.5L1.0,-27.9zM-4.2,-38.1L-4.7,-36.3L-3.6,-34.8L-3.1,-36.6zM19.9,-45.9L18.4,-44.9L18.1,-43.1L19.5,-44.2zM0.1,-29.0L0.0,-27.3L1.5,-26.4L1.6,-28.1zM-17.4,-44.6L-18.0,-43.6L-17.6,-42.4L-16.9,-43.5zM14.9,-39.7L14.1,-38.1L14.8,-36.5L15.7,-38.1zM-3.6,-45.8L-4.2,-44.4L-3.1,-43.3L-2.5,-44.7zM0.1,-61.0L0.7,-60.0L1.8,-60.0L1.2,-61.0zM-5.3,-47.5L-5.7,-46.2L-4.8,-45.3L-4.3,-46.6zM-14.1,-47.1L-14.4,-45.3L-13.3,-44.0L-13.0,-45.7zM17.2,-45.9L15.9,-45.8L15.5,-44.6L16.7,-44.7zM-7.6,-33.7L-6.8,-32.5L-5.4,-32.5L-6.2,-33.7zM-5.2,-52.1L-5.7,-50.5L-4.4,-49.5L-4.0,-51.1zM13.2,-55.1L11.6,-54.4L10.9,-52.8L12.5,-53.4zM7.6,-64.8L7.5,-63.3L8.8,-62.6L8.9,-64.1zM14.4,-39.3L14.0,-37.9L15.2,-37.1L15.6,-38.5zM10.6,-32.7L9.3,-32.9L8.5,-31.9L9.8,-31.7zM11.4,-48.3L11.5,-46.8L12.9,-46.4L12.8,-47.9zM-8.5,-38.0L-9.8,-36.7L-9.5,-34.9L-8.3,-36.2zM4.0,-65.7L5.3,-64.7L6.9,-64.9L5.6,-65.9zM11.3,-37.4L9.7,-38.1L8.1,-37.3L9.7,-36.6zM11.9,-43.0L11.2,-41.4L11.8,-39.9L12.4,-41.4zM7.0,-27.4L5.4,-27.8L3.9,-27.0L5.5,-26.6zM20.4,-36.3L19.1,-36.5L18.2,-35.6L19.5,-35.4zM20.8,-47.5L19.6,-48.0L18.7,-47.1L19.9,-46.6zM-13.0,-60.2L-12.1,-58.7L-10.4,-58.6L-11.2,-60.1zM1.5,-33.9L2.1,-32.5L3.5,-32.1L3.0,-33.5zM-8.1,-35.7L-9.9,-36.0L-11.3,-34.9L-9.5,-34.6zM-0.4,-63.7L0.5,-62.3L2.1,-62.4L1.3,-63.8zM-9.7,-43.2L-11.0,-43.2L-11.7,-42.1L-10.4,-42.0zM5.1,-66.2L3.8,-66.1L3.2,-65.0L4.5,-65.1zM-7.6,-58.7L-8.9,-58.8L-9.4,-57.7L-8.2,-57.6zM-1.1,-39.6L-0.0,-38.5L1.4,-39.1L0.3,-40.3zM4.0,-48.0L4.1,-46.2L5.7,-45.2L5.6,-47.1zM-17.2,-54.0L-16.1,-52.9L-14.5,-52.9L-15.6,-54.0zM-9.9,-59.9L-10.2,-58.4L-9.1,-57.3L-8.7,-58.8zM0.1,-53.2L-1.4,-53.8L-2.9,-53.0L-1.4,-52.5zM-13.6,-30.3L-14.6,-29.3L-14.5,-27.9L-13.5,-28.9zM1.6,-27.1L0.6,-27.9L-0.4,-27.0L0.7,-26.2zM-7.9,-45.0L-6.6,-44.2L-5.3,-45.0L-6.6,-45.8zM-7.8,-52.0L-6.8,-51.1L-5.5,-51.6L-6.5,-52.5zM-13.9,-49.4L-15.5,-49.7L-16.9,-48.9L-15.3,-48.6zM-1.2,-31.6L-0.2,-30.4L1.2,-31.1L0.2,-32.2zM13.5,-59.1L12.5,-58.5L12.5,-57.3L13.5,-57.9zM7.3,-31.2L5.9,-31.2L5.4,-29.9L6.8,-30.0zM14.1,-35.8L14.6,-34.6L15.9,-34.3L15.4,-35.5z"/><path fill="var(--c1)" fill-opacity="0.92" d="M9.7,-28.8L8.1,-28.6L7.6,-27.1L9.2,-27.3zM-11.6,-58.6L-12.3,-57.4L-11.6,-56.3L-10.9,-57.4zM-6.2,-36.0L-5.9,-34.4L-4.5,-33.5L-4.8,-35.1zM-10.0,-51.5L-9.2,-50.2L-7.6,-50.4L-8.5,-51.7zM-7.8,-57.8L-7.9,-56.5L-6.8,-55.9L-6.6,-57.2zM-4.0,-25.8L-4.2,-24.6L-3.4,-23.6L-3.2,-24.8zM-12.6,-32.9L-11.0,-32.1L-9.3,-32.5L-10.9,-33.3zM17.3,-40.5L18.2,-39.3L19.5,-39.8L18.7,-41.0zM4.2,-49.5L3.7,-48.4L4.4,-47.5L5.0,-48.5zM-13.1,-60.0L-13.5,-58.4L-12.8,-56.8L-12.4,-58.5zM-4.1,-28.0L-2.9,-26.8L-1.3,-27.1L-2.5,-28.3zM6.7,-48.3L6.2,-46.9L7.2,-45.8L7.7,-47.2zM-1.0,-47.4L0.5,-46.4L2.2,-47.1L0.7,-48.1zM-8.0,-56.3L-8.2,-54.9L-6.9,-54.2L-6.8,-55.6zM19.9,-42.1L19.1,-40.6L19.5,-39.0L20.3,-40.5zM-6.3,-65.6L-7.8,-65.0L-8.5,-63.4L-7.0,-64.1zM2.2,-56.3L0.6,-56.1L-0.4,-54.7L1.3,-54.9zM-4.4,-57.1L-4.8,-55.7L-3.8,-54.6L-3.4,-56.0zM-1.9,-56.2L-0.4,-55.2L1.4,-55.4L-0.1,-56.4zM19.6,-52.0L18.5,-51.2L18.4,-49.8L19.6,-50.6zM16.1,-35.7L17.3,-34.6L18.9,-34.6L17.8,-35.7zM-13.9,-45.8L-15.4,-46.2L-16.6,-45.3L-15.1,-44.9zM6.5,-28.9L8.0,-28.1L9.7,-28.6L8.2,-29.5zM9.3,-46.6L10.0,-45.4L11.4,-45.8L10.6,-47.0zM-16.2,-37.3L-16.9,-36.1L-16.0,-35.2L-15.3,-36.3zM-11.6,-53.6L-12.0,-52.3L-11.1,-51.3L-10.6,-52.6zM-11.2,-30.2L-11.4,-28.7L-10.1,-28.0L-9.9,-29.5zM6.6,-37.5L7.2,-36.1L8.7,-35.5L8.1,-37.0zM-6.5,-37.2L-5.6,-36.1L-4.2,-36.2L-5.1,-37.2zM-8.2,-25.0L-9.5,-24.8L-9.9,-23.6L-8.6,-23.8zM11.1,-52.5L9.7,-53.1L8.6,-52.1L9.9,-51.5zM0.1,-54.7L-0.7,-53.1L-0.2,-51.4L0.6,-53.0zM-7.9,-38.0L-9.3,-38.7L-10.7,-37.9L-9.3,-37.2zM16.9,-49.0L15.6,-48.5L15.4,-47.1L16.8,-47.6zM-8.5,-46.9L-8.4,-45.0L-6.9,-43.9L-7.0,-45.7zM5.2,-45.6L5.2,-44.0L6.7,-43.3L6.7,-44.9zM14.1,-38.1L14.7,-36.8L16.2,-36.9L15.6,-38.2zM12.6,-28.7L10.9,-28.8L9.7,-27.7L11.4,-27.6zM5.3,-41.4L6.1,-39.9L7.7,-40.0L7.0,-41.5zM-4.2,-45.1L-4.3,-43.4L-3.0,-42.2L-2.9,-44.0zM-5.8,-62.3L-4.7,-60.8L-2.8,-60.8L-3.9,-62.4zM4.7,-57.9L4.7,-56.2L6.0,-55.2L6.0,-56.9zM6.3,-35.9L6.6,-34.3L8.1,-33.6L7.9,-35.3zM-14.4,-45.2L-15.4,-44.3L-14.8,-43.0L-13.7,-44.0zM19.2,-51.3L17.9,-50.7L18.1,-49.3L19.4,-49.9zM7.6,-27.7L7.9,-26.3L9.0,-25.5L8.8,-26.9zM10.0,-53.8L10.8,-52.8L12.0,-53.0L11.3,-54.0zM15.8,-34.4L14.8,-33.2L15.0,-31.7L16.0,-32.9zM-16.6,-37.8L-15.9,-36.6L-14.6,-37.0L-15.3,-38.1zM-8.9,-31.7L-9.8,-30.9L-9.5,-29.7L-8.7,-30.6zM8.3,-39.2L6.7,-39.4L5.4,-38.3L7.1,-38.1zM-1.3,-53.0L-2.2,-51.4L-1.9,-49.7L-0.9,-51.2zM-7.2,-25.6L-6.6,-24.1L-5.1,-24.2L-5.7,-25.6zM-11.8,-54.3L-13.1,-54.6L-14.0,-53.6L-12.7,-53.3zM-3.5,-43.3L-3.5,-41.7L-2.3,-40.6L-2.3,-42.2zM-11.7,-38.3L-13.1,-37.9L-13.6,-36.5L-12.2,-36.9zM1.4,-40.6L2.1,-38.9L4.0,-38.6L3.2,-40.3zM-7.7,-42.2L-6.7,-41.1L-5.4,-41.7L-6.4,-42.8zM12.3,-48.8L11.2,-47.6L11.8,-46.2L12.9,-47.3zM-2.8,-67.8L-2.8,-66.3L-1.3,-65.6L-1.4,-67.2zM5.4,-40.6L5.6,-39.3L7.0,-39.3L6.8,-40.6zM2.1,-27.4L1.1,-26.3L1.2,-24.7L2.3,-25.9zM10.1,-34.6L11.3,-33.8L12.6,-34.5L11.4,-35.3zM4.7,-67.5L4.6,-66.2L5.8,-65.7L5.9,-67.0zM12.5,-40.0L12.7,-38.7L14.0,-38.3L13.7,-39.6zM-3.8,-31.7L-3.0,-30.3L-1.5,-29.9L-2.2,-31.3zM5.3,-64.3L3.8,-64.8L2.5,-64.0L4.0,-63.5zM-20.0,-47.4L-19.2,-46.3L-17.7,-46.4L-18.6,-47.5zM8.3,-52.5L7.6,-51.4L8.1,-50.1L8.8,-51.2zM3.0,-39.2L3.8,-37.6L5.5,-37.0L4.8,-38.7zM-4.2,-41.7L-3.9,-40.4L-2.6,-40.3L-2.9,-41.5zM5.8,-34.8L4.2,-34.1L3.9,-32.3L5.5,-33.1zM12.8,-43.3L11.9,-42.1L12.6,-40.8L13.6,-42.0zM15.5,-59.6L14.0,-58.9L13.3,-57.3L14.9,-58.0zM-7.0,-42.7L-6.0,-41.7L-4.6,-41.8L-5.6,-42.8zM-3.3,-39.6L-4.6,-40.3L-5.8,-39.4L-4.5,-38.7zM-5.7,-44.0L-5.4,-42.3L-4.1,-41.3L-4.3,-43.0zM-15.7,-38.3L-17.2,-38.8L-18.7,-38.1L-17.2,-37.6zM14.3,-30.9L13.2,-31.3L12.2,-30.7L13.3,-30.2zM21.6,-34.6L19.8,-34.7L18.7,-33.2L20.5,-33.2zM-5.6,-57.0L-4.5,-56.0L-3.1,-56.6L-4.2,-57.5zM-14.8,-34.3L-14.3,-32.9L-12.7,-32.5L-13.3,-34.0zM3.8,-46.2L2.1,-46.0L1.0,-44.7L2.7,-44.9zM-6.8,-55.8L-7.8,-55.2L-7.9,-54.0L-6.9,-54.6zM-4.6,-62.4L-5.7,-61.0L-5.3,-59.3L-4.2,-60.7zM12.5,-41.9L11.5,-41.1L12.1,-39.9L13.0,-40.8zM5.9,-27.9L5.8,-26.1L7.2,-25.1L7.4,-26.9zM-0.4,-25.9L-1.7,-25.1L-1.3,-23.6L-0.0,-24.4zM-11.8,-30.1L-13.5,-30.0L-14.5,-28.7L-12.8,-28.7zM8.9,-34.9L7.5,-34.0L7.7,-32.3L9.1,-33.2zM12.5,-26.7L13.2,-25.4L14.7,-25.5L14.0,-26.8zM-14.8,-39.9L-14.9,-38.3L-13.8,-37.1L-13.7,-38.8zM3.4,-29.0L1.6,-29.4L0.0,-28.6L1.8,-28.1zM-4.3,-50.8L-4.8,-49.6L-3.9,-48.7L-3.4,-49.8zM-12.7,-36.0L-12.1,-34.4L-10.7,-33.3L-11.2,-35.0zM-2.5,-65.9L-1.7,-64.4L0.0,-64.2L-0.8,-65.7zM-14.4,-44.4L-16.0,-44.8L-17.1,-43.5L-15.5,-43.2zM6.9,-38.8L6.6,-37.3L7.8,-36.4L8.2,-37.9zM12.3,-55.2L10.6,-54.9L9.3,-53.6L11.1,-53.8zM1.5,-37.0L1.5,-35.6L2.7,-34.9L2.8,-36.3zM10.5,-48.2L10.0,-46.8L10.6,-45.5L11.2,-46.9zM19.9,-55.5L18.2,-55.8L16.8,-54.7L18.5,-54.4zM6.7,-30.0L5.0,-29.7L4.5,-28.1L6.2,-28.4zM-14.5,-43.8L-13.6,-42.3L-12.0,-41.8L-12.9,-43.3zM9.1,-50.5L10.5,-49.7L12.1,-50.3L10.6,-51.1zM7.3,-36.9L8.2,-35.4L9.9,-35.1L9.0,-36.6zM16.2,-37.1L14.5,-36.8L13.4,-35.4L15.2,-35.7zM18.4,-48.9L19.9,-47.7L21.7,-48.3L20.2,-49.5zM3.4,-55.9L2.0,-55.7L1.3,-54.5L2.7,-54.7zM-6.4,-26.6L-6.6,-24.9L-5.7,-23.4L-5.5,-25.1zM10.6,-45.3L9.3,-44.6L8.8,-43.1L10.1,-43.9zM-8.1,-43.3L-7.0,-42.4L-5.9,-43.3L-7.0,-44.2zM4.4,-49.0L5.0,-47.7L6.5,-47.7L5.9,-49.0zM-6.6,-30.9L-7.2,-29.5L-6.8,-28.0L-6.1,-29.4zM-10.0,-60.3L-10.8,-58.9L-9.9,-57.5L-9.1,-58.9zM-11.8,-47.0L-13.4,-46.5L-14.0,-44.8L-12.3,-45.4zM1.6,-43.7L-0.3,-43.5L-1.3,-42.0L0.5,-42.2zM-3.3,-31.5L-2.8,-30.0L-1.3,-29.5L-1.8,-31.0zM19.3,-49.4L18.5,-48.2L19.1,-46.7L20.0,-48.0zM-9.8,-48.5L-8.6,-47.2L-6.8,-47.4L-8.0,-48.7zM-13.0,-61.1L-13.5,-59.8L-12.6,-58.8L-12.2,-60.1zM-10.7,-60.1L-9.7,-59.1L-8.6,-59.8L-9.5,-60.8zM15.9,-43.6L14.7,-42.9L14.4,-41.6L15.6,-42.3zM-5.3,-62.1L-4.1,-61.1L-2.8,-62.0L-4.0,-62.9zM-17.8,-40.1L-18.7,-38.6L-18.2,-36.9L-17.3,-38.4zM8.4,-63.1L7.3,-62.5L7.7,-61.2L8.8,-61.9zM0.9,-24.7L-0.8,-24.3L-1.6,-22.8L0.1,-23.1zM6.4,-26.9L7.3,-25.9L8.6,-26.1L7.8,-27.1zM-5.5,-63.2L-6.6,-62.2L-6.6,-60.8L-5.5,-61.8zM-0.1,-56.6L1.0,-55.5L2.5,-56.0L1.4,-57.1zM-12.1,-34.1L-11.3,-32.9L-9.9,-33.2L-10.7,-34.4zM10.2,-64.5L10.8,-63.2L12.0,-62.9L11.5,-64.1zM15.7,-27.7L14.9,-26.6L15.5,-25.2L16.3,-26.4zM11.4,-53.8L9.8,-53.3L9.4,-51.7L11.0,-52.2zM0.3,-27.4L0.4,-26.0L1.7,-25.4L1.6,-26.8zM13.2,-62.4L13.1,-61.0L14.3,-60.4L14.4,-61.8zM12.7,-38.3L11.2,-38.4L10.7,-37.0L12.1,-37.0zM-16.3,-53.1L-17.8,-53.3L-18.7,-52.0L-17.2,-51.8zM19.7,-35.4L18.8,-33.9L19.0,-32.2L19.9,-33.7zM1.8,-54.7L2.3,-53.6L3.5,-53.4L3.0,-54.5zM4.4,-56.2L4.6,-55.0L5.7,-54.4L5.5,-55.6zM17.5,-58.9L15.8,-58.7L14.7,-57.3L16.5,-57.5zM-1.5,-40.5L-2.4,-39.4L-2.0,-38.1L-1.1,-39.2zM-6.2,-38.3L-5.7,-36.6L-3.9,-36.3L-4.5,-38.0zM9.9,-60.8L9.1,-59.9L9.5,-58.7L10.3,-59.7zM15.5,-45.2L14.9,-43.9L15.9,-42.9L16.5,-44.2zM18.1,-37.3L17.9,-35.7L18.8,-34.5L19.0,-36.0zM7.2,-26.6L6.8,-25.0L7.4,-23.5L7.9,-25.1zM-8.7,-44.4L-10.5,-44.3L-11.6,-42.9L-9.8,-43.0zM21.1,-39.4L20.0,-38.5L20.6,-37.2L21.7,-38.1zM-2.4,-37.4L-2.2,-35.9L-0.7,-35.3L-1.0,-36.8zM-7.9,-36.8L-7.9,-35.5L-6.8,-35.0L-6.8,-36.2zM-10.8,-30.2L-10.3,-28.8L-8.7,-28.7L-9.3,-30.2zM6.0,-31.2L5.2,-29.7L5.7,-28.1L6.5,-29.6zM1.2,-47.2L1.0,-45.8L2.2,-45.1L2.4,-46.5zM7.0,-27.4L5.6,-26.7L5.8,-25.2L7.1,-25.9zM13.8,-50.2L13.8,-48.7L15.1,-48.0L15.0,-49.4zM-10.9,-53.0L-12.2,-53.0L-12.8,-51.7L-11.4,-51.7zM-1.3,-61.3L-2.7,-60.8L-2.6,-59.3L-1.2,-59.8zM-1.7,-43.6L-3.4,-43.5L-4.5,-42.3L-2.9,-42.4zM19.0,-49.2L17.3,-48.6L17.0,-46.9L18.6,-47.5zM14.0,-53.5L12.7,-52.7L12.7,-51.1L14.0,-51.9zM13.8,-57.6L14.9,-56.5L16.3,-56.9L15.3,-58.0zM14.3,-56.7L14.9,-55.3L16.4,-54.8L15.8,-56.2zM8.2,-33.1L7.3,-31.9L7.7,-30.4L8.5,-31.6zM5.2,-52.6L5.6,-51.2L7.0,-51.0L6.7,-52.4zM-0.0,-57.0L0.3,-55.6L1.8,-55.3L1.4,-56.7zM13.1,-51.6L11.8,-52.0L11.0,-50.9L12.2,-50.6zM18.7,-52.8L19.1,-51.3L20.5,-50.6L20.1,-52.1zM-6.2,-48.4L-6.5,-46.7L-5.3,-45.4L-5.1,-47.1zM-2.0,-66.8L-1.3,-65.3L0.4,-64.8L-0.4,-66.3zM2.4,-65.8L2.7,-64.6L3.9,-64.5L3.6,-65.7zM-5.4,-57.1L-7.2,-57.0L-8.2,-55.6L-6.4,-55.6zM17.2,-34.3L18.3,-32.9L20.1,-33.1L19.0,-34.5zM-4.7,-56.5L-4.6,-54.7L-3.0,-53.9L-3.1,-55.7zM-12.3,-37.2L-13.0,-35.6L-12.0,-34.3L-11.3,-35.9zM-18.1,-50.5L-17.4,-49.3L-16.0,-49.2L-16.6,-50.5zM-0.6,-42.1L-2.3,-41.6L-3.2,-40.1L-1.5,-40.5zM13.1,-27.4L11.8,-26.2L11.6,-24.5L12.9,-25.7zM12.6,-30.1L11.5,-29.3L11.5,-27.9L12.6,-28.7zM-5.6,-53.5L-4.7,-52.2L-3.2,-52.6L-4.1,-53.8zM-9.4,-30.6L-10.4,-29.5L-10.3,-27.9L-9.3,-29.1zM-10.8,-34.6L-12.3,-34.8L-13.3,-33.6L-11.8,-33.4zM5.0,-64.0L3.7,-63.6L3.9,-62.3L5.1,-62.7zM-19.8,-45.5L-19.0,-44.4L-17.7,-44.9L-18.5,-46.0zM3.8,-63.3L2.1,-63.6L1.0,-62.3L2.7,-62.1zM-2.5,-48.4L-3.8,-47.7L-3.6,-46.2L-2.3,-46.9zM-1.6,-40.4L-3.0,-39.3L-2.6,-37.6L-1.3,-38.7zM15.1,-35.8L13.9,-34.8L13.8,-33.2L15.0,-34.2zM7.5,-53.2L6.2,-52.1L6.4,-50.4L7.8,-51.5zM-4.3,-53.3L-3.1,-52.6L-1.9,-53.0L-3.0,-53.7zM-17.7,-44.6L-19.3,-44.5L-19.9,-43.1L-18.3,-43.2zM19.8,-40.9L18.4,-40.2L18.4,-38.6L19.7,-39.4zM6.5,-31.3L5.1,-30.3L5.4,-28.6L6.8,-29.6zM8.5,-40.7L7.7,-39.7L8.1,-38.5L8.9,-39.5zM1.1,-57.9L1.9,-57.0L3.1,-57.3L2.3,-58.2zM-4.0,-64.1L-3.4,-62.6L-2.0,-61.9L-2.5,-63.4zM9.1,-54.0L9.8,-52.6L11.3,-52.7L10.7,-54.1zM-4.4,-60.0L-5.0,-58.8L-4.3,-57.7L-3.7,-58.9zM2.9,-38.4L1.4,-38.2L0.7,-37.0L2.1,-37.1zM9.0,-37.4L7.8,-36.6L7.6,-35.2L8.8,-36.0zM5.7,-33.0L6.0,-31.6L7.4,-31.7L7.1,-33.1zM-18.7,-49.1L-19.9,-47.6L-19.3,-45.9L-18.1,-47.3zM-0.5,-52.8L-2.1,-52.3L-2.7,-50.8L-1.1,-51.2zM13.0,-47.4L11.6,-47.2L10.9,-45.9L12.4,-46.1zM-13.2,-39.1L-14.2,-38.3L-13.7,-37.0L-12.6,-37.9zM-17.6,-36.2L-18.4,-35.0L-17.7,-33.8L-17.0,-35.0zM-2.1,-33.2L-2.5,-31.6L-1.7,-30.3L-1.2,-31.8zM-1.8,-36.7L-3.5,-36.9L-5.0,-36.0L-3.3,-35.8zM20.1,-53.3L18.7,-53.0L18.5,-51.6L19.9,-51.9zM13.7,-30.7L12.7,-30.0L12.8,-28.8L13.9,-29.5zM3.1,-66.4L4.3,-65.4L5.5,-66.2L4.4,-67.2zM-11.6,-57.7L-13.0,-57.9L-14.1,-57.0L-12.7,-56.7zM-10.1,-44.9L-11.1,-43.4L-10.6,-41.8L-9.6,-43.2zM-5.4,-61.0L-5.0,-59.2L-3.4,-58.3L-3.8,-60.0zM1.2,-54.1L2.3,-52.9L3.8,-53.3L2.7,-54.5zM-7.5,-66.1L-7.5,-64.6L-6.0,-64.1L-6.1,-65.6zM-12.0,-35.2L-13.2,-33.9L-12.8,-32.3L-11.6,-33.5zM-4.4,-34.3L-6.0,-33.7L-6.5,-32.0L-4.9,-32.6zM-9.7,-51.2L-8.2,-50.4L-6.7,-51.0L-8.2,-51.8zM-3.6,-47.2L-3.5,-45.8L-2.1,-45.5L-2.2,-46.9z"/><path fill="var(--c2)" fill-opacity="0.92" d="M-15.4,-45.9L-16.7,-46.3L-17.7,-45.5L-16.4,-45.1zM-13.7,-28.6L-12.5,-27.3L-10.8,-27.4L-11.9,-28.7zM10.9,-58.8L10.2,-57.9L10.6,-56.8L11.3,-57.7zM-8.0,-58.2L-8.8,-57.2L-8.4,-55.9L-7.6,-56.9zM-3.8,-43.9L-5.0,-44.8L-6.1,-43.9L-4.9,-43.0zM18.8,-48.5L17.4,-48.7L16.8,-47.4L18.2,-47.2zM-14.3,-32.7L-13.4,-31.3L-11.8,-31.4L-12.7,-32.7zM5.3,-64.4L5.8,-63.0L7.2,-62.4L6.7,-63.8zM1.9,-43.5L1.1,-42.1L1.9,-40.6L2.8,-42.0zM-14.3,-57.2L-14.4,-55.8L-13.5,-54.6L-13.3,-56.1zM-9.8,-57.9L-10.7,-57.0L-10.5,-55.7L-9.5,-56.6zM-2.3,-60.6L-3.5,-59.8L-3.8,-58.4L-2.6,-59.2zM6.1,-37.5L4.9,-37.2L4.8,-36.0L6.0,-36.3zM-13.3,-45.7L-14.3,-45.0L-13.8,-43.8L-12.8,-44.6zM10.0,-36.9L8.8,-35.8L8.9,-34.2L10.1,-35.3zM13.2,-37.6L11.7,-36.6L11.3,-34.9L12.7,-35.9zM15.3,-54.0L13.9,-53.8L13.6,-52.5L15.0,-52.6zM-6.0,-43.0L-6.8,-41.7L-6.3,-40.3L-5.6,-41.6zM-15.8,-47.2L-14.3,-46.1L-12.6,-46.7L-14.0,-47.8zM-10.4,-50.0L-11.3,-49.0L-10.4,-47.9L-9.6,-49.0zM4.8,-67.2L3.4,-67.7L2.3,-66.7L3.7,-66.1zM4.7,-39.0L3.0,-38.7L1.9,-37.4L3.6,-37.7zM12.2,-44.3L10.9,-44.9L9.8,-44.0L11.1,-43.4zM7.6,-30.2L8.5,-28.6L10.3,-28.5L9.4,-30.0zM-12.0,-42.5L-13.3,-42.1L-13.9,-40.9L-12.6,-41.3zM20.9,-50.2L19.2,-50.2L18.5,-48.7L20.1,-48.7zM6.2,-54.0L6.8,-52.7L8.3,-52.8L7.7,-54.2zM6.0,-62.0L4.2,-61.6L3.6,-60.0L5.4,-60.3zM10.2,-63.1L9.8,-61.7L11.0,-61.0L11.4,-62.4zM-18.8,-39.1L-17.8,-38.1L-16.6,-38.8L-17.6,-39.7zM-0.9,-50.6L0.0,-49.5L1.5,-49.6L0.6,-50.7zM11.4,-51.5L10.4,-50.7L10.7,-49.4L11.7,-50.2zM-10.9,-55.2L-12.0,-53.6L-11.3,-51.8L-10.2,-53.4zM-1.8,-26.6L-3.3,-26.8L-4.1,-25.5L-2.6,-25.2zM19.7,-52.2L18.7,-51.5L18.8,-50.3L19.9,-51.0zM0.8,-52.2L2.0,-51.2L3.5,-51.6L2.3,-52.6zM-1.4,-41.7L-2.6,-41.5L-3.2,-40.4L-2.0,-40.6zM-17.5,-48.9L-19.2,-49.0L-20.1,-47.6L-18.4,-47.5zM-12.5,-41.3L-11.8,-40.2L-10.5,-40.2L-11.2,-41.3zM-5.4,-55.9L-6.4,-54.9L-6.0,-53.6L-5.0,-54.6zM15.5,-35.4L14.2,-34.5L14.2,-32.8L15.5,-33.8zM-2.4,-57.8L-1.6,-56.7L-0.3,-56.8L-1.1,-57.9zM-2.7,-28.5L-1.2,-27.7L0.4,-28.5L-1.1,-29.3zM-12.1,-45.4L-13.2,-44.8L-13.2,-43.5L-12.1,-44.2zM0.8,-63.1L-0.7,-63.8L-2.0,-62.8L-0.5,-62.1zM-16.7,-49.2L-18.0,-48.9L-18.6,-47.7L-17.3,-48.0zM0.3,-47.8L-1.0,-47.1L-1.2,-45.7L0.1,-46.4zM-14.7,-42.1L-16.4,-41.9L-17.3,-40.6L-15.7,-40.7zM-11.9,-27.4L-13.2,-27.1L-13.4,-25.8L-12.1,-26.1zM14.1,-41.1L15.4,-39.8L17.2,-40.2L15.9,-41.5zM-17.8,-52.9L-17.0,-51.3L-15.3,-50.7L-16.1,-52.3zM-0.3,-32.9L0.6,-31.8L2.0,-31.8L1.1,-33.0zM-0.7,-36.2L0.1,-35.0L1.6,-35.3L0.7,-36.6zM-7.9,-64.2L-8.1,-62.3L-6.7,-61.1L-6.5,-62.9zM11.0,-47.3L11.6,-46.2L12.8,-46.4L12.2,-47.5zM-16.4,-33.0L-16.3,-31.7L-15.2,-31.2L-15.2,-32.5zM9.1,-32.6L7.4,-32.7L6.3,-31.4L8.0,-31.4zM13.4,-55.8L13.5,-54.6L14.7,-54.2L14.5,-55.4zM-2.3,-53.5L-1.1,-52.1L0.7,-51.9L-0.4,-53.3zM-16.7,-44.1L-16.0,-42.7L-14.5,-42.0L-15.2,-43.5zM14.6,-37.9L15.1,-36.5L16.5,-35.9L16.0,-37.3zM14.4,-47.1L13.4,-45.7L13.9,-44.0L14.8,-45.5zM-1.8,-41.2L-0.6,-40.4L0.5,-41.2L-0.6,-42.0zM-1.1,-64.4L-0.3,-63.6L0.9,-64.1L-0.0,-64.8zM6.8,-65.3L5.7,-63.8L6.1,-62.0L7.2,-63.5zM-7.9,-41.0L-8.3,-39.9L-7.5,-39.0L-7.0,-40.1zM6.0,-29.8L4.2,-29.7L3.3,-28.2L5.1,-28.3zM12.2,-50.6L10.7,-51.1L9.6,-50.1L11.1,-49.6zM3.2,-44.3L3.7,-43.2L5.0,-43.2L4.4,-44.2zM12.7,-40.7L11.4,-39.7L11.5,-38.1L12.8,-39.1zM-8.1,-52.3L-9.9,-52.6L-11.3,-51.4L-9.5,-51.1zM-2.5,-30.8L-3.5,-29.2L-3.0,-27.4L-1.9,-29.0zM13.7,-42.1L12.3,-42.5L11.1,-41.7L12.5,-41.2zM8.6,-65.2L8.2,-63.9L9.2,-63.0L9.6,-64.3zM8.4,-26.1L9.1,-24.6L10.7,-24.5L10.1,-26.0zM-13.1,-56.7L-14.3,-56.4L-14.5,-55.1L-13.3,-55.5zM12.3,-47.1L11.5,-45.7L12.4,-44.4L13.3,-45.8zM3.1,-44.9L3.4,-43.4L4.9,-43.1L4.6,-44.6zM13.9,-46.6L14.6,-45.2L16.1,-44.7L15.4,-46.1zM-3.7,-62.3L-2.9,-60.9L-1.3,-61.0L-2.0,-62.4zM-17.6,-46.1L-17.8,-44.6L-16.8,-43.6L-16.6,-45.0zM3.1,-40.9L1.5,-40.1L0.9,-38.5L2.5,-39.2zM6.5,-54.3L4.9,-54.4L3.8,-53.3L5.4,-53.1zM19.8,-40.9L20.1,-39.4L21.5,-38.6L21.2,-40.2zM-7.4,-65.7L-7.7,-64.4L-6.6,-63.6L-6.4,-64.9zM1.5,-30.4L0.9,-29.3L1.9,-28.3L2.6,-29.5zM0.7,-47.0L0.4,-45.6L1.2,-44.4L1.6,-45.8zM8.6,-27.4L7.2,-27.5L6.6,-26.3L8.0,-26.2zM7.9,-48.1L6.8,-47.0L7.3,-45.6L8.4,-46.6zM-2.8,-54.8L-4.3,-54.0L-4.8,-52.3L-3.2,-53.1zM13.7,-33.8L13.3,-32.5L14.4,-31.7L14.8,-33.0zM-2.9,-46.3L-2.9,-45.0L-1.8,-44.3L-1.9,-45.6zM3.2,-34.7L3.4,-33.0L4.8,-32.1L4.5,-33.7zM16.5,-30.7L17.8,-29.7L19.4,-30.2L18.1,-31.2zM9.9,-26.5L8.2,-26.6L7.3,-25.2L8.9,-25.1zM-1.9,-28.3L-2.8,-26.8L-2.1,-25.2L-1.2,-26.7zM-10.2,-64.1L-9.9,-62.7L-8.5,-62.5L-8.8,-63.9zM-7.0,-61.5L-6.2,-59.9L-4.4,-59.9L-5.2,-61.4zM5.8,-58.1L6.7,-57.0L8.0,-57.3L7.2,-58.4zM4.7,-67.7L3.5,-67.0L3.4,-65.6L4.6,-66.3zM-2.6,-33.1L-4.2,-32.4L-4.4,-30.7L-2.8,-31.4zM5.4,-57.4L4.2,-56.6L4.3,-55.2L5.5,-56.0zM-5.6,-48.4L-5.4,-47.0L-4.3,-46.1L-4.5,-47.5zM5.5,-40.9L4.1,-41.2L2.9,-40.3L4.3,-40.0zM0.5,-40.1L1.7,-38.9L3.4,-39.1L2.2,-40.2zM-4.0,-62.8L-4.9,-61.8L-4.3,-60.7L-3.4,-61.6zM-9.5,-54.5L-8.8,-53.0L-7.3,-52.4L-8.0,-53.8zM13.6,-31.3L12.8,-30.0L13.9,-28.9L14.6,-30.3zM-4.3,-32.9L-5.5,-31.8L-5.1,-30.3L-3.9,-31.4zM20.6,-53.5L19.3,-53.2L19.0,-51.9L20.3,-52.3zM20.5,-42.3L19.7,-40.9L20.4,-39.5L21.1,-40.9zM-12.9,-46.6L-14.2,-45.8L-14.3,-44.3L-12.9,-45.0zM12.0,-46.7L10.6,-47.0L9.7,-45.8L11.1,-45.5zM-6.2,-37.9L-6.6,-36.5L-5.5,-35.5L-5.2,-36.9zM17.7,-38.5L18.6,-37.5L20.0,-37.8L19.1,-38.9zM-8.5,-34.0L-8.9,-32.8L-8.0,-31.8L-7.6,-33.1zM4.7,-24.6L3.7,-23.8L3.7,-22.6L4.7,-23.3zM-5.2,-50.8L-6.6,-50.8L-7.5,-49.8L-6.1,-49.8zM15.2,-53.8L13.8,-53.1L13.5,-51.6L14.9,-52.3zM7.3,-55.3L8.5,-54.1L10.2,-54.5L9.0,-55.8zM7.3,-44.4L6.4,-43.0L6.8,-41.4L7.7,-42.8zM6.5,-44.4L5.7,-43.0L6.7,-41.9L7.5,-43.2zM17.7,-56.5L17.8,-55.2L18.9,-54.8L18.8,-56.0zM-5.0,-61.8L-5.6,-60.6L-4.9,-59.4L-4.3,-60.6zM-0.7,-26.2L-1.5,-25.2L-0.6,-24.2L0.2,-25.2zM17.3,-59.9L15.6,-59.9L14.3,-58.8L16.0,-58.8zM4.2,-25.6L2.5,-25.6L1.4,-24.2L3.1,-24.2zM0.3,-35.0L0.4,-33.8L1.6,-33.4L1.4,-34.6zM16.0,-29.2L14.5,-29.7L13.2,-28.7L14.8,-28.1zM-8.7,-52.4L-9.9,-51.7L-9.7,-50.4L-8.5,-51.1zM-6.4,-58.7L-6.9,-57.3L-5.8,-56.2L-5.3,-57.6zM-0.7,-30.1L-1.7,-29.1L-1.1,-27.8L-0.2,-28.9zM12.4,-54.5L11.3,-53.1L11.3,-51.4L12.5,-52.7zM0.2,-24.8L0.5,-23.6L1.6,-23.1L1.3,-24.3zM3.2,-59.1L1.6,-59.6L0.2,-58.5L1.9,-58.0zM9.9,-27.8L10.9,-26.8L12.4,-26.8L11.3,-27.8zM-13.2,-50.4L-14.5,-51.0L-15.6,-50.2L-14.4,-49.6zM-16.2,-47.5L-15.8,-46.0L-14.4,-45.4L-14.7,-46.9zM-9.2,-30.4L-10.6,-29.5L-10.8,-27.8L-9.4,-28.7zM-3.7,-29.7L-5.0,-29.5L-5.1,-28.2L-3.8,-28.4zM-8.8,-48.0L-8.6,-46.7L-7.3,-46.2L-7.5,-47.5zM9.8,-34.2L8.4,-34.7L7.1,-33.9L8.5,-33.4zM8.5,-48.9L7.0,-49.7L5.5,-48.7L7.0,-47.9zM-3.1,-45.6L-1.8,-44.2L0.0,-44.4L-1.2,-45.8zM-5.1,-30.0L-6.8,-29.8L-7.5,-28.3L-5.9,-28.5zM-2.0,-50.4L-2.3,-49.0L-1.1,-48.2L-0.8,-49.6zM-10.7,-47.5L-10.0,-46.5L-8.7,-46.6L-9.5,-47.6zM-11.9,-51.5L-13.4,-51.7L-14.1,-50.3L-12.6,-50.1zM9.7,-33.3L11.0,-32.7L12.2,-33.3L11.0,-33.9zM7.4,-31.1L6.0,-30.0L5.7,-28.2L7.1,-29.3zM-18.0,-48.9L-16.8,-48.0L-15.5,-48.6L-16.6,-49.5zM-3.4,-34.3L-2.0,-33.3L-0.3,-33.8L-1.8,-34.8zM14.2,-38.2L12.5,-37.9L11.6,-36.4L13.4,-36.7zM-17.6,-34.2L-16.4,-32.9L-14.5,-33.0L-15.8,-34.3zM6.6,-44.0L4.8,-44.2L3.6,-43.0L5.3,-42.8zM-3.5,-27.5L-4.9,-26.9L-4.9,-25.4L-3.6,-26.0zM-7.2,-59.1L-8.6,-59.5L-9.4,-58.3L-8.1,-57.9zM4.0,-42.9L2.7,-42.3L2.5,-40.9L3.8,-41.5zM4.1,-59.6L2.9,-58.7L3.4,-57.3L4.6,-58.2zM-13.8,-50.5L-15.4,-50.7L-16.2,-49.3L-14.6,-49.2zM-14.6,-55.4L-15.9,-54.4L-15.5,-52.8L-14.3,-53.8zM13.1,-41.6L13.7,-40.5L15.0,-40.5L14.4,-41.7zM-2.5,-59.0L-2.3,-57.4L-0.9,-56.6L-1.1,-58.2zM-5.6,-38.2L-6.9,-37.6L-6.5,-36.3L-5.3,-36.9zM20.3,-50.5L18.9,-50.3L18.2,-49.1L19.6,-49.3zM14.5,-33.6L15.3,-32.0L17.1,-31.6L16.2,-33.2zM-9.9,-53.7L-8.7,-52.6L-7.1,-52.8L-8.3,-53.9zM-12.9,-59.0L-14.6,-58.3L-15.1,-56.6L-13.4,-57.3zM-5.8,-26.3L-5.7,-25.0L-4.4,-24.9L-4.5,-26.2zM17.4,-31.2L16.0,-31.2L15.0,-30.2L16.5,-30.1zM-4.8,-56.4L-5.5,-55.2L-5.0,-53.9L-4.4,-55.1zM-15.9,-45.5L-17.1,-46.0L-18.0,-45.0L-16.8,-44.5zM-1.2,-60.4L-2.7,-60.5L-3.5,-59.3L-2.0,-59.1zM18.6,-43.4L17.0,-43.4L16.0,-42.3L17.5,-42.2zM5.3,-42.1L3.7,-42.6L2.5,-41.5L4.1,-41.0zM3.9,-26.0L5.1,-25.3L6.3,-25.9L5.1,-26.6zM1.7,-31.6L0.6,-30.3L1.4,-28.9L2.4,-30.1zM18.3,-38.1L19.2,-36.8L20.7,-37.1L19.8,-38.3zM2.2,-43.1L0.8,-43.6L-0.3,-42.6L1.1,-42.1zM-3.8,-46.8L-4.2,-45.2L-3.4,-43.7L-2.9,-45.3zM4.0,-27.1L4.4,-25.8L5.8,-26.0L5.3,-27.3zM3.4,-65.8L4.0,-64.6L5.3,-64.7L4.8,-65.9zM21.1,-36.0L19.8,-36.6L18.5,-35.9L19.8,-35.3zM10.4,-51.2L9.2,-50.2L9.1,-48.7L10.2,-49.7zM12.0,-38.6L10.7,-37.6L11.0,-36.0L12.3,-37.0zM-4.7,-66.0L-4.7,-64.5L-3.3,-63.7L-3.4,-65.2zM16.1,-47.1L17.0,-45.8L18.5,-45.8L17.7,-47.1zM-12.4,-29.0L-14.1,-29.5L-15.7,-28.8L-14.0,-28.2zM-6.0,-35.7L-7.3,-35.2L-7.4,-33.7L-6.1,-34.3zM-4.5,-33.7L-5.8,-33.9L-6.8,-33.0L-5.5,-32.8zM20.9,-46.3L20.4,-45.0L21.5,-44.1L22.0,-45.4zM-9.0,-29.8L-7.4,-29.2L-5.9,-29.7L-7.4,-30.3zM-3.7,-50.1L-5.3,-50.9L-6.9,-50.0L-5.3,-49.2zM-1.7,-53.6L-2.9,-53.3L-3.4,-52.1L-2.2,-52.4zM3.7,-64.8L2.3,-64.4L1.5,-63.1L3.0,-63.4zM-8.7,-41.3L-8.9,-39.7L-7.8,-38.4L-7.6,-40.1zM19.1,-40.9L19.9,-39.8L21.3,-39.9L20.5,-41.0zM1.7,-50.1L3.1,-49.0L4.9,-49.0L3.5,-50.1zM-16.1,-38.7L-15.0,-37.6L-13.4,-37.6L-14.5,-38.7zM15.1,-55.6L15.2,-53.7L16.8,-52.7L16.6,-54.6z"/><path fill="var(--c3)" fill-opacity="0.92" d="M-9.9,-44.7L-8.9,-43.5L-7.3,-43.3L-8.3,-44.5zM-19.6,-39.7L-18.3,-38.8L-16.8,-39.5L-18.2,-40.3zM18.1,-48.4L17.7,-47.0L18.8,-46.0L19.2,-47.4zM-4.6,-35.1L-6.2,-35.1L-7.2,-34.0L-5.6,-33.9zM-5.2,-44.5L-6.2,-43.2L-5.8,-41.5L-4.9,-42.9zM0.2,-26.0L-1.6,-25.5L-2.2,-23.7L-0.5,-24.3zM-13.9,-58.4L-14.2,-56.8L-13.2,-55.7L-12.9,-57.2zM11.2,-35.9L10.2,-35.0L10.7,-33.8L11.7,-34.7zM5.5,-58.2L4.0,-57.5L3.7,-55.9L5.2,-56.6zM-5.5,-41.8L-6.6,-40.6L-6.4,-39.0L-5.2,-40.2zM-3.5,-52.5L-4.7,-52.2L-5.0,-51.1L-3.8,-51.3zM5.8,-44.1L4.4,-44.7L3.2,-43.7L4.6,-43.1zM-5.1,-29.2L-6.3,-28.7L-6.2,-27.4L-5.0,-27.9zM11.4,-48.5L10.2,-49.3L9.0,-48.4L10.2,-47.6zM-7.6,-65.1L-9.0,-64.8L-9.5,-63.5L-8.0,-63.7zM-4.4,-43.8L-5.9,-42.7L-6.1,-40.9L-4.5,-41.9zM-2.9,-38.7L-3.7,-37.6L-2.9,-36.5L-2.2,-37.6zM-13.9,-57.2L-13.2,-55.7L-11.6,-55.0L-12.3,-56.5zM8.0,-62.1L8.4,-60.5L10.0,-60.1L9.6,-61.7zM17.0,-35.3L15.7,-34.2L15.8,-32.5L17.1,-33.6zM18.5,-50.0L17.1,-50.6L16.1,-49.5L17.5,-48.9zM-7.0,-41.9L-5.7,-40.8L-4.0,-41.2L-5.3,-42.4zM12.6,-48.9L11.1,-49.3L9.9,-48.2L11.5,-47.8zM6.3,-37.0L7.6,-35.9L9.3,-36.1L8.0,-37.1zM-2.0,-40.3L-2.0,-38.6L-0.8,-37.4L-0.9,-39.1zM13.8,-43.7L12.7,-44.3L11.5,-43.7L12.7,-43.1zM-5.9,-57.5L-6.1,-55.9L-5.1,-54.7L-4.8,-56.3zM-9.7,-51.8L-10.1,-50.5L-9.2,-49.6L-8.7,-50.8zM4.9,-65.1L5.4,-63.4L7.2,-63.0L6.6,-64.7zM9.0,-54.2L7.6,-54.2L7.0,-52.9L8.5,-52.9zM7.6,-41.8L8.8,-40.5L10.5,-40.3L9.3,-41.6zM5.1,-38.6L3.7,-38.4L3.0,-37.3L4.3,-37.4zM18.7,-35.7L18.1,-34.6L18.9,-33.6L19.5,-34.7zM3.7,-38.4L2.2,-38.0L1.4,-36.7L2.9,-37.1zM2.6,-60.2L0.9,-59.8L-0.1,-58.4L1.6,-58.8zM0.5,-49.1L-1.1,-49.4L-2.2,-48.3L-0.6,-48.0zM17.6,-54.8L15.9,-55.4L14.2,-54.8L15.9,-54.2zM-8.7,-56.8L-7.7,-55.5L-6.0,-55.6L-7.0,-57.0zM15.5,-29.7L16.2,-28.4L17.6,-28.1L17.0,-29.4zM-16.3,-41.9L-17.6,-40.6L-17.4,-38.8L-16.1,-40.1zM12.8,-31.3L13.9,-30.5L15.1,-31.1L14.0,-31.9zM15.6,-32.8L13.9,-32.5L13.0,-31.1L14.7,-31.4zM2.7,-37.3L1.7,-36.4L2.2,-35.2L3.2,-36.1zM4.3,-37.2L3.3,-36.2L3.4,-34.8L4.4,-35.8zM22.4,-46.1L20.7,-46.3L19.4,-45.2L21.1,-45.0zM-11.4,-49.7L-12.0,-48.4L-11.0,-47.5L-10.4,-48.7zM-10.9,-45.8L-11.3,-44.4L-10.0,-43.8L-9.7,-45.1zM9.6,-27.9L9.9,-26.4L11.4,-25.9L11.1,-27.4zM4.1,-29.6L4.4,-28.0L5.7,-27.0L5.4,-28.6zM1.7,-68.3L1.6,-66.6L2.8,-65.3L2.9,-67.0zM-5.9,-56.8L-7.0,-57.6L-8.2,-56.8L-7.0,-56.1zM-7.0,-47.5L-5.7,-46.4L-4.1,-46.9L-5.3,-48.0zM6.6,-38.9L5.2,-38.6L4.7,-37.3L6.0,-37.6zM-5.2,-46.8L-4.7,-45.3L-3.2,-45.2L-3.7,-46.6zM5.4,-35.8L3.8,-34.9L3.3,-33.2L4.9,-34.1zM-2.5,-42.7L-2.3,-41.2L-1.0,-40.4L-1.2,-41.9zM3.5,-32.5L3.9,-30.8L5.6,-30.2L5.2,-31.9zM6.7,-34.3L5.5,-33.3L5.9,-31.8L7.1,-32.8zM-12.1,-62.8L-11.6,-61.1L-9.9,-60.5L-10.4,-62.2zM19.8,-44.5L18.5,-43.5L18.2,-41.8L19.5,-42.9zM5.2,-29.5L4.6,-28.2L5.6,-27.2L6.1,-28.5zM2.1,-33.3L3.1,-32.4L4.3,-33.1L3.3,-34.1zM0.7,-41.0L0.7,-39.5L1.9,-38.6L1.9,-40.1zM1.6,-42.0L0.1,-42.7L-1.4,-41.9L0.1,-41.2zM-11.2,-42.7L-11.0,-41.3L-9.6,-41.0L-9.8,-42.4zM-6.6,-66.0L-5.5,-64.7L-3.8,-64.4L-4.9,-65.7zM7.1,-58.9L6.5,-57.5L7.0,-56.0L7.6,-57.4zM18.6,-35.7L18.7,-34.0L20.1,-33.2L20.1,-34.9zM4.0,-64.6L5.5,-63.8L7.1,-64.3L5.6,-65.1zM10.6,-55.9L10.5,-54.3L11.7,-53.1L11.8,-54.8zM-2.3,-25.9L-3.0,-24.2L-1.9,-22.6L-1.3,-24.4zM-15.3,-50.8L-15.8,-49.2L-14.7,-48.0L-14.1,-49.6zM-17.3,-46.5L-16.4,-45.1L-14.7,-44.7L-15.7,-46.2zM2.5,-48.9L0.7,-49.3L-0.8,-48.2L1.0,-47.8zM5.4,-53.1L3.9,-53.6L2.6,-52.7L4.0,-52.2zM15.9,-32.1L17.2,-31.1L18.9,-31.3L17.5,-32.3zM-16.7,-54.9L-16.7,-53.5L-15.3,-52.9L-15.3,-54.4zM-14.8,-29.5L-13.8,-28.9L-12.8,-29.5L-13.8,-30.1zM12.9,-38.9L13.1,-37.5L14.4,-37.5L14.2,-38.8zM-14.4,-60.0L-13.2,-58.8L-11.5,-58.8L-12.7,-60.1zM10.6,-53.5L8.9,-52.8L8.1,-51.2L9.8,-51.8zM12.3,-59.4L12.7,-58.2L14.0,-57.9L13.6,-59.1zM18.3,-32.2L17.3,-31.5L17.6,-30.3L18.6,-31.0zM-7.9,-50.9L-9.4,-51.5L-10.8,-50.9L-9.3,-50.3zM9.9,-25.6L8.5,-25.5L8.3,-24.0L9.7,-24.2zM10.0,-35.7L8.8,-34.7L8.9,-33.1L10.2,-34.1zM-3.0,-50.7L-3.3,-49.4L-2.1,-48.9L-1.8,-50.2zM16.1,-49.8L14.5,-49.1L14.0,-47.5L15.7,-48.1zM-0.6,-48.9L-1.8,-47.7L-1.6,-46.1L-0.4,-47.2zM2.3,-39.4L0.9,-39.6L0.0,-38.6L1.4,-38.3zM-4.4,-24.5L-6.1,-24.3L-7.0,-22.8L-5.3,-23.0zM-12.0,-40.6L-12.9,-39.5L-12.4,-38.1L-11.5,-39.2zM7.4,-51.6L6.1,-51.7L5.7,-50.4L7.0,-50.4zM7.9,-59.9L7.4,-58.6L8.3,-57.5L8.9,-58.9zM13.4,-41.6L13.4,-40.3L14.7,-39.7L14.7,-41.1zM1.2,-65.1L1.9,-63.8L3.4,-64.0L2.7,-65.3zM7.9,-32.5L6.5,-32.4L6.0,-31.1L7.4,-31.2zM14.8,-46.6L13.6,-46.3L13.2,-45.1L14.4,-45.4zM16.4,-36.9L14.8,-37.5L13.5,-36.5L15.1,-35.9zM9.1,-50.0L8.0,-50.4L6.9,-49.8L8.0,-49.3zM-13.7,-35.5L-14.5,-33.9L-13.7,-32.3L-12.9,-33.9zM15.8,-43.8L15.1,-42.8L15.6,-41.7L16.4,-42.7zM-13.4,-29.9L-14.7,-30.2L-15.4,-29.2L-14.2,-28.9zM-16.7,-43.8L-16.5,-41.9L-14.9,-41.0L-15.1,-42.9zM-14.1,-34.5L-14.3,-33.2L-13.3,-32.3L-13.0,-33.6zM-7.3,-38.2L-6.0,-37.1L-4.2,-37.1L-5.6,-38.2zM8.9,-63.2L7.9,-61.8L8.4,-60.1L9.4,-61.6zM-11.3,-62.1L-10.5,-61.0L-9.1,-60.9L-9.9,-62.0zM7.7,-47.3L6.5,-46.0L6.7,-44.3L7.9,-45.5zM-7.7,-25.9L-7.4,-24.4L-5.9,-23.6L-6.3,-25.2zM-9.3,-57.5L-8.4,-56.7L-7.3,-57.2L-8.2,-58.0zM1.4,-28.3L2.0,-27.2L3.3,-27.5L2.7,-28.6zM14.2,-37.8L13.1,-36.9L13.5,-35.5L14.5,-36.4zM-12.7,-28.9L-12.1,-27.6L-10.7,-27.6L-11.3,-28.8zM12.5,-33.5L11.9,-31.7L13.1,-30.2L13.7,-32.0zM0.7,-27.6L1.1,-26.3L2.4,-26.4L2.1,-27.7zM-10.7,-37.7L-11.0,-36.3L-10.2,-35.0L-9.9,-36.5zM18.6,-41.1L17.3,-40.6L17.6,-39.3L18.8,-39.7zM3.2,-67.4L1.5,-66.8L0.7,-65.3L2.3,-65.9zM-6.5,-64.9L-7.8,-64.7L-8.2,-63.5L-7.0,-63.7zM-1.7,-48.4L-3.5,-48.4L-4.7,-47.2L-3.0,-47.2zM8.5,-34.5L6.7,-34.3L5.6,-32.9L7.4,-33.1zM-12.9,-40.2L-13.1,-38.3L-11.8,-37.0L-11.6,-38.8zM-10.3,-30.2L-11.2,-29.0L-10.5,-27.7L-9.6,-28.9zM-15.0,-44.3L-14.7,-42.7L-13.2,-41.9L-13.5,-43.6zM2.2,-64.3L2.4,-62.8L3.7,-62.4L3.6,-63.8zM2.6,-41.8L3.2,-40.4L4.6,-40.0L4.1,-41.4zM13.2,-40.0L12.6,-38.5L13.8,-37.5L14.3,-38.9zM15.5,-30.1L15.2,-28.7L16.4,-28.0L16.6,-29.4zM2.5,-44.0L2.6,-42.1L4.3,-41.2L4.1,-43.0zM9.9,-33.1L11.2,-31.8L13.1,-32.0L11.7,-33.3zM-4.2,-36.7L-5.4,-36.1L-5.6,-34.6L-4.3,-35.3zM-3.1,-30.1L-2.2,-29.0L-0.9,-29.5L-1.7,-30.6zM14.8,-37.6L15.1,-35.8L16.7,-34.9L16.3,-36.7zM7.8,-31.4L6.2,-30.5L6.0,-28.7L7.6,-29.6zM15.3,-43.9L14.0,-42.9L13.8,-41.3L15.0,-42.3zM12.0,-48.9L10.4,-48.8L9.4,-47.6L11.0,-47.6zM7.5,-52.5L5.9,-52.1L5.1,-50.7L6.6,-51.1zM4.4,-54.5L4.7,-52.9L6.1,-52.2L5.9,-53.8zM0.6,-42.4L2.0,-41.2L3.7,-41.7L2.4,-43.0zM4.1,-44.5L2.6,-43.4L2.5,-41.6L4.0,-42.7zM18.5,-45.4L17.4,-45.1L17.1,-43.9L18.3,-44.2zM-4.7,-27.1L-3.2,-26.4L-1.7,-27.0L-3.2,-27.7zM-5.4,-41.1L-5.1,-39.6L-3.6,-39.2L-3.9,-40.7zM11.8,-48.1L10.4,-47.8L10.3,-46.4L11.7,-46.7zM-15.5,-37.6L-14.6,-36.3L-13.0,-36.3L-13.8,-37.7zM14.2,-53.2L12.9,-52.4L12.3,-51.0L13.7,-51.7zM-7.0,-37.9L-8.3,-37.2L-8.0,-35.8L-6.7,-36.5zM1.7,-63.4L0.3,-62.4L0.0,-60.7L1.5,-61.7zM2.5,-58.4L2.9,-56.6L4.6,-55.9L4.2,-57.7zM-7.2,-61.6L-8.6,-61.6L-9.5,-60.6L-8.1,-60.5zM-14.1,-30.4L-15.5,-30.0L-15.9,-28.7L-14.6,-29.1zM-14.0,-50.2L-15.6,-50.0L-16.5,-48.7L-15.0,-48.9zM3.8,-41.1L3.7,-39.4L4.7,-38.0L4.8,-39.7zM1.0,-32.3L-0.1,-32.9L-1.2,-32.2L-0.1,-31.6zM10.1,-32.4L11.1,-31.3L12.6,-31.4L11.5,-32.5zM15.2,-41.5L13.3,-41.1L12.5,-39.4L14.3,-39.8zM-1.6,-62.1L-0.1,-61.1L1.6,-61.4L0.1,-62.4zM19.3,-41.6L18.4,-40.6L18.9,-39.4L19.7,-40.4zM-14.1,-36.1L-14.2,-34.6L-13.0,-33.7L-12.9,-35.3zM-6.9,-35.1L-8.2,-35.7L-9.5,-35.0L-8.2,-34.4zM5.7,-42.7L5.9,-41.0L7.5,-40.3L7.3,-42.0zM-12.8,-49.9L-12.1,-48.2L-10.3,-47.8L-11.0,-49.5zM16.9,-45.8L15.0,-45.6L14.2,-44.0L16.0,-44.2zM3.7,-49.1L2.5,-47.9L2.9,-46.2L4.1,-47.4zM12.5,-52.4L12.1,-50.9L12.8,-49.6L13.2,-51.0zM-3.7,-52.6L-3.3,-51.3L-2.0,-51.1L-2.3,-52.4zM11.3,-62.8L12.2,-61.9L13.4,-62.3L12.5,-63.2zM-2.4,-56.3L-4.1,-56.5L-5.1,-55.3L-3.5,-55.0zM1.4,-27.8L0.1,-27.1L-0.0,-25.7L1.3,-26.3zM7.7,-36.1L7.2,-34.7L7.9,-33.4L8.4,-34.8zM11.7,-30.0L11.7,-28.3L13.1,-27.3L13.1,-29.0zM2.8,-52.3L1.2,-53.0L-0.3,-52.1L1.3,-51.4zM7.2,-62.4L5.7,-61.8L5.5,-60.2L7.0,-60.8zM-14.4,-31.6L-15.3,-30.5L-15.1,-29.1L-14.1,-30.2zM-14.0,-40.6L-14.5,-39.3L-13.5,-38.3L-12.9,-39.6zM3.9,-42.6L5.3,-41.8L6.9,-42.0L5.5,-42.9zM-1.8,-66.2L-3.3,-66.3L-4.0,-64.9L-2.5,-64.8zM-16.1,-50.3L-14.6,-49.5L-13.0,-50.2L-14.5,-51.0zM-10.1,-40.8L-11.3,-40.5L-11.6,-39.3L-10.4,-39.6zM5.0,-57.4L4.5,-56.2L5.5,-55.3L6.0,-56.5zM14.6,-46.7L13.3,-46.5L12.7,-45.4L14.0,-45.5zM15.2,-58.8L14.5,-57.6L15.5,-56.5L16.2,-57.8zM3.6,-31.3L4.0,-29.7L5.4,-28.7L5.0,-30.4zM-10.4,-63.3L-11.6,-62.1L-11.5,-60.5L-10.4,-61.7zM-11.3,-57.8L-10.9,-56.1L-9.3,-55.5L-9.8,-57.1zM-1.5,-31.5L-0.9,-30.4L0.3,-30.2L-0.3,-31.3zM-5.8,-27.9L-5.9,-26.6L-4.9,-25.8L-4.8,-27.1z"/><path fill="var(--c4)" fill-opacity="0.92" d="M-9.2,-55.9L-9.3,-54.6L-8.3,-53.9L-8.2,-55.1zM5.9,-57.9L7.2,-57.0L8.7,-57.6L7.4,-58.5zM3.0,-33.3L4.5,-32.2L6.3,-32.6L4.8,-33.7zM3.3,-24.7L4.0,-23.5L5.3,-23.8L4.7,-25.1zM-6.0,-55.6L-6.7,-53.8L-5.7,-52.3L-5.0,-54.0zM1.7,-48.2L3.2,-47.1L4.9,-47.5L3.5,-48.6zM-8.2,-45.6L-8.4,-43.9L-7.5,-42.5L-7.3,-44.1zM-11.3,-38.1L-10.7,-36.9L-9.4,-37.2L-10.1,-38.3zM10.0,-59.2L9.1,-57.7L9.8,-56.0L10.7,-57.6zM3.7,-36.9L3.9,-35.2L5.5,-34.6L5.2,-36.3zM10.1,-34.2L8.4,-34.8L6.8,-34.2L8.4,-33.6zM7.2,-48.2L7.1,-46.5L8.5,-45.4L8.6,-47.2zM0.3,-53.3L-1.0,-53.1L-1.2,-51.8L0.1,-52.1zM1.9,-50.4L0.1,-50.9L-1.2,-49.7L0.5,-49.2zM-8.5,-32.5L-7.6,-31.5L-6.4,-31.9L-7.3,-32.9zM-10.9,-46.1L-11.6,-44.7L-10.9,-43.4L-10.2,-44.8zM0.4,-34.4L-0.4,-33.0L0.4,-31.7L1.1,-33.1zM4.7,-42.0L5.9,-40.5L7.8,-40.6L6.6,-42.1zM4.8,-33.7L4.2,-32.2L5.3,-31.0L5.9,-32.5zM-6.3,-53.1L-6.3,-51.3L-5.2,-50.0L-5.2,-51.7zM-11.5,-34.0L-9.9,-33.1L-8.2,-33.7L-9.7,-34.6zM4.3,-55.5L2.9,-55.5L2.3,-54.2L3.7,-54.1zM3.3,-36.7L3.5,-35.2L5.0,-34.9L4.8,-36.4zM-0.6,-29.5L-2.0,-29.5L-2.5,-28.3L-1.2,-28.3zM4.9,-46.5L6.3,-45.8L7.9,-46.3L6.4,-47.1zM-9.8,-57.2L-11.6,-56.9L-12.6,-55.4L-10.8,-55.7zM10.0,-58.6L8.7,-58.0L8.4,-56.6L9.7,-57.2zM6.1,-60.7L5.2,-59.5L5.5,-58.0L6.4,-59.2zM9.9,-28.9L8.2,-29.0L7.1,-27.7L8.8,-27.6zM17.3,-38.5L18.5,-37.4L20.0,-37.4L18.9,-38.5zM9.5,-31.2L10.6,-29.9L12.3,-29.6L11.1,-30.9zM-5.0,-34.7L-6.2,-34.2L-6.4,-33.0L-5.2,-33.5zM-6.6,-58.7L-8.3,-59.1L-9.5,-57.8L-7.8,-57.4zM-11.2,-40.0L-10.6,-38.4L-8.9,-38.0L-9.5,-39.6zM1.8,-30.2L0.5,-29.2L0.2,-27.4L1.6,-28.5zM-3.1,-55.7L-4.9,-56.1L-6.4,-55.0L-4.6,-54.6zM-16.0,-37.4L-16.3,-35.6L-14.9,-34.5L-14.6,-36.2zM-6.2,-58.4L-7.6,-58.0L-7.9,-56.6L-6.5,-57.0zM-11.1,-41.0L-12.8,-40.6L-13.5,-39.0L-11.8,-39.4zM16.4,-47.0L14.9,-46.9L14.1,-45.6L15.6,-45.7zM5.2,-55.3L6.4,-54.4L7.7,-55.0L6.5,-55.9zM3.9,-43.6L4.0,-42.2L5.4,-41.8L5.3,-43.3zM-7.3,-64.8L-6.9,-63.1L-5.2,-62.7L-5.7,-64.3zM2.5,-64.6L1.6,-63.5L2.2,-62.2L3.1,-63.3zM-11.5,-55.2L-12.2,-53.6L-11.4,-52.1L-10.7,-53.7zM-7.8,-64.0L-9.4,-64.0L-10.6,-62.8L-8.9,-62.8zM12.5,-49.7L11.5,-48.6L12.1,-47.2L13.1,-48.3zM6.2,-65.1L4.8,-65.0L3.9,-63.9L5.4,-63.9zM9.8,-38.7L8.5,-38.1L8.5,-36.7L9.9,-37.2zM-1.3,-39.7L-2.0,-38.6L-1.0,-37.7L-0.3,-38.9zM11.2,-53.6L11.0,-52.1L12.1,-51.1L12.3,-52.5zM-16.8,-48.1L-15.8,-46.7L-14.1,-46.3L-15.1,-47.7zM13.1,-40.4L12.6,-39.1L13.3,-38.0L13.8,-39.3zM2.2,-67.0L0.4,-66.6L-0.1,-64.9L1.6,-65.3zM-0.4,-35.2L-0.5,-34.1L0.6,-33.5L0.6,-34.7zM10.9,-33.8L10.5,-32.5L11.4,-31.5L11.8,-32.8zM-8.5,-41.8L-8.9,-40.3L-7.6,-39.4L-7.2,-40.9zM16.4,-56.0L14.7,-55.6L13.6,-54.3L15.3,-54.6zM-1.1,-30.5L-1.3,-29.1L-0.3,-28.2L-0.1,-29.6zM5.1,-37.4L4.6,-35.7L5.3,-34.1L5.8,-35.8zM14.5,-61.6L13.5,-60.6L14.0,-59.3L15.0,-60.3zM-12.1,-43.8L-13.3,-43.8L-13.8,-42.7L-12.7,-42.8zM14.0,-59.2L15.4,-58.1L17.2,-58.4L15.7,-59.5zM15.7,-42.9L14.6,-41.6L15.0,-40.0L16.2,-41.2zM-18.2,-36.6L-18.0,-35.5L-16.9,-35.0L-17.1,-36.2zM-17.2,-42.1L-17.0,-40.8L-15.8,-40.6L-16.0,-41.8zM7.8,-53.9L6.6,-53.8L6.2,-52.6L7.4,-52.7zM-4.3,-25.4L-5.3,-24.4L-5.0,-23.1L-4.1,-24.0zM10.7,-55.3L10.9,-53.6L12.3,-52.4L12.0,-54.2zM-3.9,-67.5L-3.6,-66.1L-2.2,-65.6L-2.5,-67.0zM-12.3,-58.5L-13.9,-58.6L-14.7,-57.3L-13.1,-57.1zM15.5,-47.6L14.3,-47.7L13.5,-46.7L14.8,-46.6zM-9.4,-41.5L-8.7,-40.3L-7.4,-40.2L-8.0,-41.3zM-16.6,-54.3L-16.5,-52.8L-15.4,-51.7L-15.5,-53.2zM-6.7,-56.0L-6.9,-54.6L-6.0,-53.5L-5.8,-54.9zM-1.7,-61.6L-2.9,-61.7L-3.6,-60.8L-2.5,-60.6zM4.4,-66.6L3.1,-65.9L2.6,-64.4L4.0,-65.1zM13.8,-29.9L13.1,-28.8L13.5,-27.5L14.2,-28.6zM15.3,-59.3L13.4,-59.4L12.2,-58.0L14.0,-57.9zM-2.3,-44.5L-4.0,-44.8L-5.4,-43.8L-3.7,-43.5zM0.4,-27.1L-0.6,-26.0L-0.2,-24.6L0.8,-25.7zM-7.3,-25.1L-7.4,-23.3L-5.9,-22.4L-5.9,-24.1zM2.8,-54.7L2.3,-53.4L3.0,-52.3L3.5,-53.6zM15.6,-52.8L15.6,-51.1L17.1,-50.2L17.1,-51.9zM6.9,-49.1L8.2,-48.4L9.5,-48.8L8.3,-49.6zM3.9,-34.5L5.0,-33.3L6.6,-33.4L5.5,-34.6zM12.4,-32.1L11.0,-32.9L9.6,-31.9L11.1,-31.1zM-6.3,-65.1L-8.1,-64.5L-8.6,-62.7L-6.9,-63.3zM6.5,-27.2L4.7,-27.5L3.2,-26.3L5.1,-26.1zM-13.0,-31.9L-12.7,-30.3L-11.2,-29.7L-11.5,-31.3zM6.5,-38.9L7.7,-37.5L9.5,-37.9L8.2,-39.2zM13.2,-30.5L11.7,-30.2L10.8,-28.9L12.3,-29.2zM-19.8,-51.2L-19.1,-49.6L-17.4,-49.2L-18.1,-50.8zM17.2,-50.8L15.8,-50.4L15.4,-49.1L16.7,-49.5zM-11.2,-49.5L-12.6,-49.8L-13.7,-48.8L-12.2,-48.4zM1.3,-44.5L-0.2,-44.7L-1.4,-43.7L0.1,-43.5zM-14.3,-32.5L-15.1,-30.9L-14.5,-29.1L-13.8,-30.8zM14.1,-58.2L13.1,-57.2L13.3,-55.9L14.3,-56.8zM9.5,-51.6L8.0,-51.3L7.5,-49.9L9.0,-50.1zM10.3,-39.5L9.0,-39.4L8.3,-38.2L9.6,-38.3zM-15.2,-36.9L-16.5,-36.8L-16.9,-35.6L-15.7,-35.7zM-7.5,-26.9L-8.7,-26.5L-8.9,-25.2L-7.6,-25.6zM10.2,-59.2L8.5,-59.4L7.6,-58.0L9.2,-57.8zM-1.0,-67.7L-2.2,-67.5L-2.5,-66.2L-1.2,-66.4zM-6.2,-58.4L-7.3,-57.9L-7.3,-56.7L-6.2,-57.2zM7.0,-40.8L5.7,-39.8L5.9,-38.1L7.2,-39.2zM-1.5,-50.5L-1.3,-49.0L0.2,-48.7L0.0,-50.2zM11.2,-55.3L12.2,-54.1L13.7,-54.5L12.7,-55.7zM-12.3,-54.7L-14.1,-54.8L-15.4,-53.6L-13.6,-53.6zM-6.6,-65.0L-7.6,-64.3L-7.5,-63.1L-6.5,-63.8zM-16.6,-47.7L-15.8,-46.3L-14.2,-46.6L-15.0,-47.9zM20.5,-50.9L19.1,-50.2L18.6,-48.8L20.0,-49.4zM1.7,-44.3L2.5,-42.8L4.0,-42.1L3.2,-43.6zM15.9,-29.5L14.4,-29.6L13.3,-28.6L14.8,-28.5zM2.4,-27.5L1.4,-26.2L1.7,-24.6L2.7,-25.9zM-7.8,-60.9L-9.1,-60.7L-9.4,-59.4L-8.1,-59.7zM-9.7,-58.4L-11.2,-58.6L-12.1,-57.4L-10.7,-57.3zM8.6,-63.7L7.0,-63.2L6.3,-61.7L7.9,-62.2zM-5.1,-63.1L-4.9,-61.5L-3.4,-60.9L-3.6,-62.5zM-15.3,-53.4L-16.6,-53.7L-17.1,-52.4L-15.8,-52.2zM-10.8,-61.9L-9.7,-61.1L-8.5,-61.7L-9.6,-62.5zM2.9,-56.9L1.6,-57.3L0.4,-56.6L1.7,-56.2zM14.3,-50.4L12.6,-49.6L12.2,-47.8L13.9,-48.7zM-4.1,-39.2L-2.7,-38.2L-1.0,-38.9L-2.5,-39.8zM-0.9,-34.8L-2.7,-34.2L-3.3,-32.4L-1.6,-33.1zM3.0,-42.2L1.4,-41.8L0.7,-40.3L2.3,-40.6zM1.4,-58.6L0.3,-57.9L0.3,-56.6L1.5,-57.3zM1.2,-60.0L0.4,-58.8L1.0,-57.5L1.8,-58.7zM-18.2,-51.1L-17.6,-50.0L-16.4,-50.0L-16.9,-51.1zM7.9,-50.7L8.2,-49.5L9.3,-49.1L9.1,-50.3zM-12.0,-28.3L-12.9,-27.5L-12.7,-26.4L-11.8,-27.1zM19.4,-35.7L18.1,-36.2L17.3,-35.2L18.5,-34.7zM12.6,-39.2L12.3,-37.8L13.2,-36.7L13.5,-38.1zM-1.4,-48.7L-0.2,-47.9L1.1,-48.6L-0.1,-49.4zM-9.8,-51.6L-10.9,-50.9L-11.2,-49.6L-10.0,-50.3zM13.8,-42.2L12.2,-41.3L11.9,-39.6L13.5,-40.4zM4.2,-39.1L5.4,-37.8L7.3,-37.7L6.0,-39.0zM-19.2,-48.6L-19.3,-46.9L-17.9,-45.9L-17.8,-47.6zM16.2,-37.5L17.3,-36.4L18.9,-36.4L17.8,-37.5zM-14.4,-43.8L-15.5,-43.2L-15.3,-42.0L-14.2,-42.6zM10.9,-51.4L10.2,-50.3L11.0,-49.2L11.6,-50.4zM14.3,-57.0L14.5,-55.5L15.8,-54.7L15.6,-56.2zM4.7,-62.2L6.2,-61.3L7.8,-61.8L6.3,-62.7zM2.4,-48.9L3.5,-48.1L4.8,-48.7L3.7,-49.5zM15.4,-49.7L16.5,-48.5L18.1,-48.4L17.0,-49.6zM10.4,-49.5L9.0,-49.4L8.6,-48.0L10.0,-48.1zM14.0,-58.6L15.2,-57.7L16.5,-58.4L15.3,-59.2zM16.3,-48.8L14.6,-48.3L14.1,-46.6L15.8,-47.1zM4.4,-54.6L3.3,-54.2L3.1,-53.0L4.2,-53.5zM-10.5,-53.6L-11.9,-53.6L-12.1,-52.3L-10.8,-52.3zM15.5,-57.9L14.0,-57.1L13.7,-55.5L15.2,-56.2zM-11.3,-63.7L-10.8,-62.2L-9.2,-61.8L-9.7,-63.4zM8.3,-55.2L9.4,-54.0L11.0,-54.1L9.9,-55.3zM-5.7,-63.7L-6.4,-62.6L-5.8,-61.5L-5.2,-62.6zM14.6,-29.0L13.9,-27.4L14.9,-25.8L15.5,-27.5zM20.1,-48.0L18.6,-48.0L17.8,-46.7L19.4,-46.6zM7.5,-40.0L6.1,-40.6L4.8,-39.9L6.2,-39.3zM-13.9,-47.1L-15.3,-46.7L-15.8,-45.3L-14.4,-45.6zM3.9,-27.9L2.7,-27.4L2.9,-26.1L4.1,-26.6zM-18.5,-42.7L-18.2,-41.2L-17.0,-40.2L-17.3,-41.8zM10.8,-36.3L9.2,-36.6L7.7,-35.7L9.4,-35.4zM10.1,-48.5L10.3,-47.2L11.5,-46.7L11.4,-48.1zM-13.8,-41.8L-14.3,-40.4L-13.3,-39.3L-12.8,-40.7zM9.4,-33.3L7.8,-33.7L6.4,-32.9L8.0,-32.5zM-0.9,-46.5L-2.1,-45.7L-2.3,-44.2L-1.0,-45.0zM-4.8,-41.5L-5.2,-40.0L-4.3,-38.8L-3.8,-40.3zM10.2,-42.2L8.6,-41.8L8.2,-40.1L9.8,-40.6zM-15.4,-49.8L-15.3,-48.6L-14.3,-47.8L-14.3,-49.1zM-11.2,-48.3L-9.7,-47.3L-8.1,-47.8L-9.5,-48.8zM3.4,-46.6L2.9,-45.1L3.9,-43.7L4.4,-45.3zM2.1,-54.5L3.2,-53.1L5.0,-53.2L3.8,-54.5zM16.0,-43.7L16.6,-42.3L18.0,-41.8L17.4,-43.2zM0.7,-61.1L-0.6,-60.6L-0.8,-59.3L0.5,-59.8zM-5.6,-25.7L-7.1,-24.6L-7.0,-22.8L-5.5,-23.8zM-5.0,-43.9L-5.2,-42.5L-4.0,-41.9L-3.7,-43.3zM1.9,-49.2L0.6,-48.9L0.0,-47.7L1.3,-48.0zM13.2,-56.5L13.1,-55.1L14.3,-54.6L14.4,-55.9zM13.3,-37.1L12.2,-37.6L11.2,-36.9L12.3,-36.4zM15.6,-39.5L14.6,-38.6L14.8,-37.3L15.8,-38.1zM-6.1,-34.7L-7.1,-33.5L-6.3,-32.3L-5.3,-33.4zM-4.7,-25.1L-4.5,-23.4L-3.3,-22.2L-3.5,-23.9zM-10.5,-36.2L-9.9,-34.9L-8.4,-34.8L-9.0,-36.2zM-7.9,-62.3L-9.0,-60.8L-8.5,-59.0L-7.4,-60.5zM17.0,-57.4L15.2,-56.9L14.4,-55.3L16.2,-55.7zM-6.8,-63.1L-8.0,-61.9L-7.7,-60.3L-6.4,-61.5zM-10.1,-56.0L-11.1,-55.0L-11.0,-53.6L-10.0,-54.6zM-6.1,-28.1L-7.8,-27.9L-8.9,-26.7L-7.2,-26.8zM9.1,-37.9L7.6,-37.9L6.9,-36.5L8.5,-36.5zM14.9,-36.8L15.6,-35.3L17.0,-34.7L16.4,-36.1zM-10.0,-50.3L-11.6,-49.9L-12.4,-48.4L-10.8,-48.8zM-6.4,-45.6L-8.1,-46.2L-9.8,-45.5L-8.1,-44.8zM-2.2,-43.8L-3.8,-43.7L-4.4,-42.1L-2.7,-42.2zM8.7,-26.2L9.8,-25.0L11.4,-25.2L10.3,-26.4zM9.2,-50.2L10.1,-48.5L12.0,-48.3L11.1,-49.9zM4.4,-33.4L4.1,-32.2L5.0,-31.4L5.2,-32.6zM2.2,-31.4L3.3,-30.7L4.5,-31.0L3.4,-31.8zM-19.5,-45.1L-18.4,-44.1L-17.0,-44.3L-18.1,-45.2zM8.5,-41.8L8.5,-40.5L9.9,-40.2L9.9,-41.6zM-14.7,-54.7L-16.2,-55.2L-17.7,-54.5L-16.2,-54.1zM10.6,-31.0L9.3,-31.3L8.4,-30.4L9.7,-30.1zM9.8,-46.1L9.9,-44.2L11.6,-43.2L11.5,-45.1zM-2.5,-36.9L-4.0,-36.9L-5.0,-35.7L-3.4,-35.7zM13.6,-42.4L11.9,-42.8L10.5,-41.8L12.2,-41.4zM-11.0,-61.7L-10.4,-60.0L-8.8,-59.4L-9.4,-61.0zM-13.5,-59.4L-14.7,-58.3L-14.6,-56.8L-13.4,-57.8zM-8.8,-55.5L-9.7,-54.2L-9.5,-52.5L-8.6,-53.9zM20.2,-44.5L18.8,-44.7L17.8,-43.7L19.2,-43.4zM0.8,-32.4L0.4,-31.2L1.2,-30.2L1.6,-31.4zM-11.2,-44.4L-11.9,-43.3L-10.9,-42.4L-10.2,-43.6zM19.2,-40.6L18.4,-39.0L19.0,-37.4L19.8,-38.9zM-6.9,-50.4L-8.6,-50.2L-9.7,-48.8L-8.0,-49.1zM-10.7,-42.9L-10.8,-41.4L-9.9,-40.3L-9.7,-41.8zM-11.5,-57.6L-12.8,-56.8L-12.6,-55.3L-11.4,-56.1zM9.9,-59.8L10.1,-58.5L11.2,-57.8L11.0,-59.1zM6.9,-35.4L6.5,-33.9L7.6,-32.9L8.0,-34.3zM-10.4,-40.6L-10.5,-39.3L-9.3,-38.6L-9.3,-39.9zM3.3,-53.9L3.5,-52.2L4.7,-51.0L4.5,-52.8zM9.9,-37.5L9.1,-36.3L9.9,-35.2L10.6,-36.3zM13.7,-36.1L12.2,-36.5L10.9,-35.5L12.4,-35.1zM-2.6,-29.6L-1.0,-28.7L0.6,-29.2L-0.9,-30.1z"/></symbol></defs></svg><div class="abs" style="left:0px;top:0px;width:600px;height:15.8px;background:#525252;"></div><div class="abs" style="left:0px;top:15.8px;width:600px;height:17.2px;background:#555555;"></div><div class="abs" style="left:0px;top:15.8px;width:600px;height:0.9px;background:#464646;"></div><div class="abs" style="left:0px;top:33px;width:20.4px;height:498px;background:#535353;"></div><div class="abs" style="left:0px;top:33px;width:20.4px;height:7px;background:#454545;"></div><div class="abs" style="left:20.4px;top:33px;width:452px;height:15.5px;background:#3e3e3e;"></div><div class="abs" style="left:29px;top:57px;width:434px;height:465px;background:#5e5e5e;"></div><div class="abs" style="left:463px;top:48.5px;width:8.6px;height:474px;background:#4b4b4b;"></div><div class="abs" style="left:471.4px;top:33px;width:1.8px;height:498px;background:#404040;"></div><div class="abs" style="left:473px;top:33px;width:127px;height:498px;background:#535353;"></div><div class="abs" style="left:20.4px;top:522.5px;width:443px;height:8.5px;background:#535353;"></div><div class="abs" style="left:463px;top:522.5px;width:9px;height:8.5px;background:#4b4b4b;"></div><div class="abs" style="left:3.8px;top:4.4px;width:6.6px;height:6.6px;border-radius:50%;background:#fc605c"></div><div class="abs" style="left:14.0px;top:4.4px;width:6.6px;height:6.6px;border-radius:50%;background:#fdbc40"></div><div class="abs" style="left:24.4px;top:4.4px;width:6.6px;height:6.6px;border-radius:50%;background:#34c84a"></div><svg class="abs" style="left:39.60px;top:-2.25px;overflow:visible" width="9.60" height="17.60"><text x="0" y="12.65" font-size="11" fill="#c98658" font-weight="normal" font-style="normal" textLength="9.60" lengthAdjust="spacingAndGlyphs">Ai</text></svg><div class="abs" style="left:61px;top:3px;width:8.3px;height:8.2px;background:#676767;"></div><svg class="abs" style="left:62.30px;top:3.55px;overflow:visible" width="5.80" height="8.00"><text x="0" y="5.75" font-size="5" fill="#555555" font-weight="bold" font-style="normal" textLength="5.80" lengthAdjust="spacingAndGlyphs">Br</text></svg><div class="abs" style="left:78.6px;top:3.3px;width:9.6px;height:9px;background:#c8c8c8;"></div><svg class="abs" style="left:80.20px;top:3.92px;overflow:visible" width="6.40" height="8.32"><text x="0" y="5.98" font-size="5.2" fill="#4a4a4a" font-weight="bold" font-style="normal" textLength="6.40" lengthAdjust="spacingAndGlyphs">St</text></svg><div class="abs" style="left:96px;top:4.3px;width:4.2px;height:6.8px;background:#d2d2d2;"></div><div class="abs" style="left:101.2px;top:4.3px;width:4.6px;height:2.7px;background:#d2d2d2;"></div><div class="abs" style="left:101.2px;top:8.4px;width:4.6px;height:2.7px;background:#d2d2d2;"></div><svg class="abs" style="left:108px;top:6px" width="6" height="4"><path d="M1,0.8 L3,2.8 L5,0.8" stroke="#b8b8b8" fill="none" stroke-width="0.9"/></svg><svg class="abs" style="left:121px;top:2px" width="13" height="12"><path d="M1.5,8.5 L8,2 M3.5,10 L10,3.5" stroke="#a0a0a0" stroke-width="1.5"/><circle cx="9.2" cy="8.4" r="2.7" stroke="#d0d0d0" fill="#4a4a4a" stroke-width="1"/><path d="M9.2,5.6 L9.2,8.3" stroke="#d0d0d0" stroke-width="0.9"/></svg><div class="abs" style="left:444px;top:2px;width:0.8px;height:11px;background:#4a4a4a;"></div><svg class="abs" style="left:450.70px;top:2.37px;overflow:visible" width="31.30" height="11.04"><text x="0" y="7.93" font-size="6.9" fill="#e2e2e2" font-weight="bold" font-style="normal" textLength="31.30" lengthAdjust="spacingAndGlyphs">Essentials</text></svg><svg class="abs" style="left:486px;top:5.8px" width="6" height="4"><path d="M1,0.8 L3,2.8 L5,0.8" stroke="#cccccc" fill="none" stroke-width="0.9"/></svg><div class="abs" style="left:497px;top:2px;width:0.8px;height:11px;background:#4a4a4a;"></div><div class="abs" style="left:503px;top:3px;width:94px;height:10px;background:#444444;border-radius:1px"></div><svg class="abs" style="left:504.5px;top:4px" width="10" height="9"><circle cx="5.6" cy="3.4" r="2.3" stroke="#d0d0d0" fill="none" stroke-width="0.9"/><path d="M4,5 L1.5,7.5" stroke="#d0d0d0" stroke-width="1"/><path d="M7,6.3 L9.4,6.3 L8.2,7.8Z" fill="#d0d0d0"/></svg><svg class="abs" style="left:516.00px;top:2.72px;overflow:visible" width="53.30" height="10.40"><text x="0" y="7.47" font-size="6.5" fill="#8a8a8a" font-weight="normal" font-style="normal" textLength="53.30" lengthAdjust="spacingAndGlyphs">Search Adobe Stock</text></svg><div class="abs" style="left:2.5px;top:20px;width:1px;height:11px;background:#464646;"></div><svg class="abs" style="left:7.00px;top:19.76px;overflow:visible" width="31.00" height="10.08"><text x="0" y="7.24" font-size="6.3" fill="#d6d6d6" font-weight="normal" font-style="normal" textLength="31.00" lengthAdjust="spacingAndGlyphs">No Selection</text></svg><div class="abs" style="left:52.5px;top:19px;width:0.8px;height:12px;background:#464646;"></div><div class="abs" style="left:56.3px;top:19.7px;width:10.5px;height:10.3px;background:#000;border:0.9px solid #a8a8a8"></div><div class="abs" style="left:67.3px;top:19.7px;width:8px;height:10.3px;background:#4a4a4a;"></div><svg class="abs" style="left:68.3px;top:23.3px" width="6" height="4"><path d="M1,0.8 L3,2.8 L5,0.8" stroke="#c8c8c8" fill="none" stroke-width="0.9"/></svg><div class="abs" style="left:78.7px;top:19.7px;width:10.5px;height:10.3px;background:#fff;border:0.9px solid #a8a8a8"></div><div class="abs" style="left:89.7px;top:19.7px;width:8px;height:10.3px;background:#4a4a4a;"></div><svg class="abs" style="left:90.7px;top:23.3px" width="6" height="4"><path d="M1,0.8 L3,2.8 L5,0.8" stroke="#c8c8c8" fill="none" stroke-width="0.9"/></svg><svg class="abs" style="left:79.5px;top:20.5px" width="9" height="9"><path d="M0.3,8.7 L8.7,0.3" stroke="#e61e28" stroke-width="1.3"/></svg><svg class="abs" style="left:104.00px;top:19.76px;overflow:visible" width="17.70" height="10.08"><text x="0" y="7.24" font-size="6.3" fill="#d6d6d6" font-weight="normal" font-style="normal" textLength="17.70" lengthAdjust="spacingAndGlyphs" text-decoration="underline">Stroke:</text></svg><svg class="abs" style="left:126px;top:19px" width="7" height="12"><path d="M1.5,4.2 L3.5,2.2 L5.5,4.2 M1.5,7.8 L3.5,9.8 L5.5,7.8" stroke="#c8c8c8" fill="none" stroke-width="0.9"/></svg><div class="abs" style="left:135px;top:19.7px;width:25px;height:10.3px;background:#474747;"></div><div class="abs" style="left:160.3px;top:19.7px;width:8px;height:10.3px;background:#4a4a4a;"></div><svg class="abs" style="left:161.3px;top:23.3px" width="6" height="4"><path d="M1,0.8 L3,2.8 L5,0.8" stroke="#c8c8c8" fill="none" stroke-width="0.9"/></svg><div class="abs" style="left:172px;top:19.7px;width:47px;height:10.3px;background:#777777;"></div><svg class="abs" style="left:221px;top:23.3px" width="6" height="4"><path d="M1,0.8 L3,2.8 L5,0.8" stroke="#6c6c6c" fill="none" stroke-width="0.9"/></svg><div class="abs" style="left:230.6px;top:19.7px;width:44.5px;height:10.3px;background:#efefef;"></div><div class="abs" style="left:235.2px;top:23.5px;width:3px;height:3px;border-radius:50%;background:#111"></div><svg class="abs" style="left:243.30px;top:19.87px;overflow:visible" width="28.30" height="9.92"><text x="0" y="7.13" font-size="6.2" fill="#222" font-weight="normal" font-style="normal" textLength="28.30" lengthAdjust="spacingAndGlyphs">5 pt. Round</text></svg><div class="abs" style="left:275.3px;top:19.7px;width:8.5px;height:10.3px;background:#4a4a4a;"></div><svg class="abs" style="left:276.5px;top:23.3px" width="6" height="4"><path d="M1,0.8 L3,2.8 L5,0.8" stroke="#c8c8c8" fill="none" stroke-width="0.9"/></svg><svg class="abs" style="left:288.50px;top:19.76px;overflow:visible" width="20.50" height="10.08"><text x="0" y="7.24" font-size="6.3" fill="#d6d6d6" font-weight="normal" font-style="normal" textLength="20.50" lengthAdjust="spacingAndGlyphs" text-decoration="underline">Opacity:</text></svg><div class="abs" style="left:311.7px;top:19.7px;width:30px;height:10.3px;background:#474747;"></div><svg class="abs" style="left:314.00px;top:19.87px;overflow:visible" width="12.70" height="9.92"><text x="0" y="7.13" font-size="6.2" fill="#dcdcdc" font-weight="normal" font-style="normal" textLength="12.70" lengthAdjust="spacingAndGlyphs">100%</text></svg><div class="abs" style="left:342.2px;top:19.7px;width:7.5px;height:10.3px;background:#4a4a4a;"></div><svg class="abs" style="left:344px;top:22.5px" width="5" height="6"><path d="M1.2,0.8 L3.2,2.8 L1.2,4.8" stroke="#c8c8c8" fill="none" stroke-width="0.9"/></svg><svg class="abs" style="left:354.00px;top:19.76px;overflow:visible" width="13.80" height="10.08"><text x="0" y="7.24" font-size="6.3" fill="#d6d6d6" font-weight="normal" font-style="normal" textLength="13.80" lengthAdjust="spacingAndGlyphs">Style:</text></svg><div class="abs" style="left:370px;top:19.7px;width:10.6px;height:10.3px;background:#e6e6e6;border:0.9px solid #d8d8d8"></div><div class="abs" style="left:381.1px;top:19.7px;width:8px;height:10.3px;background:#4a4a4a;"></div><svg class="abs" style="left:382.1px;top:23.3px" width="6" height="4"><path d="M1,0.8 L3,2.8 L5,0.8" stroke="#c8c8c8" fill="none" stroke-width="0.9"/></svg><div class="abs" style="left:396px;top:19.5px;width:50px;height:11px;background:#505050;border:0.9px solid #6c6c6c;border-radius:1.5px"></div><svg class="abs" style="left:401.20px;top:20.07px;overflow:visible" width="41.70" height="9.92"><text x="0" y="7.13" font-size="6.2" fill="#e4e4e4" font-weight="normal" font-style="normal" textLength="41.70" lengthAdjust="spacingAndGlyphs">Document Setup</text></svg><div class="abs" style="left:450.7px;top:19.5px;width:38.6px;height:11px;background:#505050;border:0.9px solid #6c6c6c;border-radius:1.5px"></div><svg class="abs" style="left:454.70px;top:20.07px;overflow:visible" width="29.30" height="9.92"><text x="0" y="7.13" font-size="6.2" fill="#e4e4e4" font-weight="normal" font-style="normal" textLength="29.30" lengthAdjust="spacingAndGlyphs">Preferences</text></svg><svg class="abs" style="left:494px;top:19px" width="10" height="11"><path d="M1,2.5 H5 M1,5.5 H3 M7,1 V4 M3,1 V3 M1,8.5 H3" stroke="#bdbdbd" stroke-width="0.8" stroke-dasharray="1 0.8"/><path d="M4.5,3.8 L9.3,6.3 L7.2,6.8 L8.3,9.3 L7.2,9.8 L6.1,7.3 L4.5,8.8Z" fill="#e0e0e0"/></svg><svg class="abs" style="left:506px;top:22.5px" width="6" height="4"><path d="M1,0.8 L3,2.8 L5,0.8" stroke="#c8c8c8" fill="none" stroke-width="0.9"/></svg><svg class="abs" style="left:547px;top:20.5px" width="8" height="8"><path d="M0.5,2.5 V0.5 H2.5 M5.5,0.5 H7.5 V2.5 M7.5,5.5 V7.5 H5.5 M2.5,7.5 H0.5 V5.5" stroke="#707070" fill="none" stroke-width="0.9"/></svg><svg class="abs" style="left:559.5px;top:19.5px" width="10" height="11"><rect x="0.5" y="0.5" width="2.3" height="2.3" fill="#d0d0d0"/><rect x="0.5" y="4" width="2.3" height="2.3" fill="#d0d0d0"/><rect x="0.5" y="7.5" width="2.3" height="2.3" fill="#d0d0d0"/><path d="M4,4.3 H6.8 A1.7,1.7 0 0 1 6.8,7.7 H4" stroke="#d0d0d0" fill="none" stroke-width="0.9"/></svg><svg class="abs" style="left:571px;top:22.5px" width="6" height="4"><path d="M1,0.8 L3,2.8 L5,0.8" stroke="#747474" fill="none" stroke-width="0.9"/></svg><svg class="abs" style="left:584.5px;top:20.5px" width="9" height="9"><path d="M0.5,1 H2 M3.2,1 H8.5 M0.5,4 H2 M3.2,4 H8.5 M0.5,7 H2 M3.2,7 H8.5" stroke="#cfcfcf" stroke-width="1"/></svg><div class="abs" style="left:20.4px;top:33px;width:176px;height:15.5px;background:#535353;"></div><svg class="abs" style="left:25.50px;top:35.45px;overflow:visible" width="4.50" height="11.20"><text x="0" y="8.05" font-size="7" fill="#bdbdbd" font-weight="normal" font-style="normal" textLength="4.50" lengthAdjust="spacingAndGlyphs">×</text></svg><svg class="abs" style="left:33.00px;top:36.05px;overflow:visible" width="155.00" height="10.08"><text x="0" y="7.24" font-size="6.3" fill="#f2f2f2" font-weight="bold" font-style="normal" textLength="155.00" lengthAdjust="spacingAndGlyphs">woodgroup_logo_1-3_edited.pdf* @ 100% (CMYK/Preview)</text></svg><div class="abs" style="left:196.5px;top:33px;width:131.5px;height:15.5px;background:#454545;border-left:0.8px solid #383838"></div><svg class="abs" style="left:199.50px;top:35.45px;overflow:visible" width="4.50" height="11.20"><text x="0" y="8.05" font-size="7" fill="#a8a8a8" font-weight="normal" font-style="normal" textLength="4.50" lengthAdjust="spacingAndGlyphs">×</text></svg><svg class="abs" style="left:206.70px;top:36.05px;overflow:visible" width="116.30" height="10.08"><text x="0" y="7.24" font-size="6.3" fill="#cacaca" font-weight="normal" font-style="normal" textLength="116.30" lengthAdjust="spacingAndGlyphs">woodgroup-new.ai @ 200% (CMYK/Preview)</text></svg><div class="abs" style="left:328px;top:33px;width:106px;height:15.5px;background:#454545;border-left:0.8px solid #383838;border-right:0.8px solid #383838"></div><svg class="abs" style="left:333.50px;top:35.45px;overflow:visible" width="4.50" height="11.20"><text x="0" y="8.05" font-size="7" fill="#a8a8a8" font-weight="normal" font-style="normal" textLength="4.50" lengthAdjust="spacingAndGlyphs">×</text></svg><svg class="abs" style="left:342.70px;top:36.05px;overflow:visible" width="85.30" height="10.08"><text x="0" y="7.24" font-size="6.3" fill="#cacaca" font-weight="normal" font-style="normal" textLength="85.30" lengthAdjust="spacingAndGlyphs">Logo.ai @ 150% (CMYK/Preview)</text></svg><svg class="abs" style="left:20.4px;top:48.5px" width="442.6" height="8.3"><rect width="442.6" height="8.3" fill="#3b3b3b"/><rect x="-7.85" y="0" width="0.8" height="8.3" fill="#7a7a7a"/><rect x="-4.78" y="5.700000000000001" width="0.7" height="2.6" fill="#7a7a7a"/><rect x="-1.71" y="5.700000000000001" width="0.7" height="2.6" fill="#7a7a7a"/><rect x="1.37" y="5.1000000000000005" width="0.7" height="3.2" fill="#7a7a7a"/><rect x="4.44" y="5.700000000000001" width="0.7" height="2.6" fill="#7a7a7a"/><rect x="7.51" y="5.700000000000001" width="0.7" height="2.6" fill="#7a7a7a"/><text x="-6.65" y="5.9" font-size="5.8" fill="#c2c2c2" textLength="9.6" lengthAdjust="spacingAndGlyphs">180</text><rect x="10.58" y="0" width="0.8" height="8.3" fill="#7a7a7a"/><rect x="13.65" y="5.700000000000001" width="0.7" height="2.6" fill="#7a7a7a"/><rect x="16.72" y="5.700000000000001" width="0.7" height="2.6" fill="#7a7a7a"/><rect x="19.80" y="5.1000000000000005" width="0.7" height="3.2" fill="#7a7a7a"/><rect x="22.87" y="5.700000000000001" width="0.7" height="2.6" fill="#7a7a7a"/><rect x="25.94" y="5.700000000000001" width="0.7" height="2.6" fill="#7a7a7a"/><text x="11.78" y="5.9" font-size="5.8" fill="#c2c2c2" textLength="9.6" lengthAdjust="spacingAndGlyphs">144</text><rect x="29.01" y="0" width="0.8" height="8.3" fill="#7a7a7a"/><rect x="32.08" y="5.700000000000001" width="0.7" height="2.6" fill="#7a7a7a"/><rect x="35.15" y="5.700000000000001" width="0.7" height="2.6" fill="#7a7a7a"/><rect x="38.23" y="5.1000000000000005" width="0.7" height="3.2" fill="#7a7a7a"/><rect x="41.30" y="5.700000000000001" width="0.7" height="2.6" fill="#7a7a7a"/><rect x="44.37" y="5.700000000000001" width="0.7" height="2.6" fill="#7a7a7a"/><text x="30.21" y="5.9" font-size="5.8" fill="#c2c2c2" textLength="9.6" lengthAdjust="spacingAndGlyphs">108</text><rect x="47.44" y="0" width="0.8" height="8.3" fill="#7a7a7a"/><rect x="50.51" y="5.700000000000001" width="0.7" height="2.6" fill="#7a7a7a"/><rect x="53.58" y="5.700000000000001" width="0.7" height="2.6" fill="#7a7a7a"/><rect x="56.66" y="5.1000000000000005" width="0.7" height="3.2" fill="#7a7a7a"/><rect x="59.73" y="5.700000000000001" width="0.7" height="2.6" fill="#7a7a7a"/><rect x="62.80" y="5.700000000000001" width="0.7" height="2.6" fill="#7a7a7a"/><text x="48.64" y="5.9" font-size="5.8" fill="#c2c2c2" textLength="6.4" lengthAdjust="spacingAndGlyphs">72</text><rect x="65.87" y="0" width="0.8" height="8.3" fill="#7a7a7a"/><rect x="68.94" y="5.700000000000001" width="0.7" height="2.6" fill="#7a7a7a"/><rect x="72.01" y="5.700000000000001" width="0.7" height="2.6" fill="#7a7a7a"/><rect x="75.09" y="5.1000000000000005" width="0.7" height="3.2" fill="#7a7a7a"/><rect x="78.16" y="5.700000000000001" width="0.7" height="2.6" fill="#7a7a7a"/><rect x="81.23" y="5.700000000000001" width="0.7" height="2.6" fill="#7a7a7a"/><text x="67.07" y="5.9" font-size="5.8" fill="#c2c2c2" textLength="6.4" lengthAdjust="spacingAndGlyphs">36</text><rect x="84.30" y="0" width="0.8" height="8.3" fill="#7a7a7a"/><rect x="87.37" y="5.700000000000001" width="0.7" height="2.6" fill="#7a7a7a"/><rect x="90.44" y="5.700000000000001" width="0.7" height="2.6" fill="#7a7a7a"/><rect x="93.52" y="5.1000000000000005" width="0.7" height="3.2" fill="#7a7a7a"/><rect x="96.59" y="5.700000000000001" width="0.7" height="2.6" fill="#7a7a7a"/><rect x="99.66" y="5.700000000000001" width="0.7" height="2.6" fill="#7a7a7a"/><text x="85.50" y="5.9" font-size="5.8" fill="#c2c2c2" textLength="3.2" lengthAdjust="spacingAndGlyphs">0</text><rect x="102.73" y="0" width="0.8" height="8.3" fill="#7a7a7a"/><rect x="105.80" y="5.700000000000001" width="0.7" height="2.6" fill="#7a7a7a"/><rect x="108.87" y="5.700000000000001" width="0.7" height="2.6" fill="#7a7a7a"/><rect x="111.95" y="5.1000000000000005" width="0.7" height="3.2" fill="#7a7a7a"/><rect x="115.02" y="5.700000000000001" width="0.7" height="2.6" fill="#7a7a7a"/><rect x="118.09" y="5.700000000000001" width="0.7" height="2.6" fill="#7a7a7a"/><text x="103.93" y="5.9" font-size="5.8" fill="#c2c2c2" textLength="6.4" lengthAdjust="spacingAndGlyphs">36</text><rect x="121.16" y="0" width="0.8" height="8.3" fill="#7a7a7a"/><rect x="124.23" y="5.700000000000001" width="0.7" height="2.6" fill="#7a7a7a"/><rect x="127.30" y="5.700000000000001" width="0.7" height="2.6" fill="#7a7a7a"/><rect x="130.38" y="5.1000000000000005" width="0.7" height="3.2" fill="#7a7a7a"/><rect x="133.45" y="5.700000000000001" width="0.7" height="2.6" fill="#7a7a7a"/><rect x="136.52" y="5.700000000000001" width="0.7" height="2.6" fill="#7a7a7a"/><text x="122.36" y="5.9" font-size="5.8" fill="#c2c2c2" textLength="6.4" lengthAdjust="spacingAndGlyphs">72</text><rect x="139.59" y="0" width="0.8" height="8.3" fill="#7a7a7a"/><rect x="142.66" y="5.700000000000001" width="0.7" height="2.6" fill="#7a7a7a"/><rect x="145.73" y="5.700000000000001" width="0.7" height="2.6" fill="#7a7a7a"/><rect x="148.81" y="5.1000000000000005" width="0.7" height="3.2" fill="#7a7a7a"/><rect x="151.88" y="5.700000000000001" width="0.7" height="2.6" fill="#7a7a7a"/><rect x="154.95" y="5.700000000000001" width="0.7" height="2.6" fill="#7a7a7a"/><text x="140.79" y="5.9" font-size="5.8" fill="#c2c2c2" textLength="9.6" lengthAdjust="spacingAndGlyphs">108</text><rect x="158.02" y="0" width="0.8" height="8.3" fill="#7a7a7a"/><rect x="161.09" y="5.700000000000001" width="0.7" height="2.6" fill="#7a7a7a"/><rect x="164.16" y="5.700000000000001" width="0.7" height="2.6" fill="#7a7a7a"/><rect x="167.24" y="5.1000000000000005" width="0.7" height="3.2" fill="#7a7a7a"/><rect x="170.31" y="5.700000000000001" width="0.7" height="2.6" fill="#7a7a7a"/><rect x="173.38" y="5.700000000000001" width="0.7" height="2.6" fill="#7a7a7a"/><text x="159.22" y="5.9" font-size="5.8" fill="#c2c2c2" textLength="9.6" lengthAdjust="spacingAndGlyphs">144</text><rect x="176.45" y="0" width="0.8" height="8.3" fill="#7a7a7a"/><rect x="179.52" y="5.700000000000001" width="0.7" height="2.6" fill="#7a7a7a"/><rect x="182.59" y="5.700000000000001" width="0.7" height="2.6" fill="#7a7a7a"/><rect x="185.67" y="5.1000000000000005" width="0.7" height="3.2" fill="#7a7a7a"/><rect x="188.74" y="5.700000000000001" width="0.7" height="2.6" fill="#7a7a7a"/><rect x="191.81" y="5.700000000000001" width="0.7" height="2.6" fill="#7a7a7a"/><text x="177.65" y="5.9" font-size="5.8" fill="#c2c2c2" textLength="9.6" lengthAdjust="spacingAndGlyphs">180</text><rect x="194.88" y="0" width="0.8" height="8.3" fill="#7a7a7a"/><rect x="197.95" y="5.700000000000001" width="0.7" height="2.6" fill="#7a7a7a"/><rect x="201.02" y="5.700000000000001" width="0.7" height="2.6" fill="#7a7a7a"/><rect x="204.09" y="5.1000000000000005" width="0.7" height="3.2" fill="#7a7a7a"/><rect x="207.17" y="5.700000000000001" width="0.7" height="2.6" fill="#7a7a7a"/><rect x="210.24" y="5.700000000000001" width="0.7" height="2.6" fill="#7a7a7a"/><text x="196.08" y="5.9" font-size="5.8" fill="#c2c2c2" textLength="9.6" lengthAdjust="spacingAndGlyphs">216</text><rect x="213.31" y="0" width="0.8" height="8.3" fill="#7a7a7a"/><rect x="216.38" y="5.700000000000001" width="0.7" height="2.6" fill="#7a7a7a"/><rect x="219.45" y="5.700000000000001" width="0.7" height="2.6" fill="#7a7a7a"/><rect x="222.53" y="5.1000000000000005" width="0.7" height="3.2" fill="#7a7a7a"/><rect x="225.60" y="5.700000000000001" width="0.7" height="2.6" fill="#7a7a7a"/><rect x="228.67" y="5.700000000000001" width="0.7" height="2.6" fill="#7a7a7a"/><text x="214.51" y="5.9" font-size="5.8" fill="#c2c2c2" textLength="9.6" lengthAdjust="spacingAndGlyphs">252</text><rect x="231.74" y="0" width="0.8" height="8.3" fill="#7a7a7a"/><rect x="234.81" y="5.700000000000001" width="0.7" height="2.6" fill="#7a7a7a"/><rect x="237.88" y="5.700000000000001" width="0.7" height="2.6" fill="#7a7a7a"/><rect x="240.96" y="5.1000000000000005" width="0.7" height="3.2" fill="#7a7a7a"/><rect x="244.03" y="5.700000000000001" width="0.7" height="2.6" fill="#7a7a7a"/><rect x="247.10" y="5.700000000000001" width="0.7" height="2.6" fill="#7a7a7a"/><text x="232.94" y="5.9" font-size="5.8" fill="#c2c2c2" textLength="9.6" lengthAdjust="spacingAndGlyphs">288</text><rect x="250.17" y="0" width="0.8" height="8.3" fill="#7a7a7a"/><rect x="253.24" y="5.700000000000001" width="0.7" height="2.6" fill="#7a7a7a"/><rect x="256.31" y="5.700000000000001" width="0.7" height="2.6" fill="#7a7a7a"/><rect x="259.38" y="5.1000000000000005" width="0.7" height="3.2" fill="#7a7a7a"/><rect x="262.46" y="5.700000000000001" width="0.7" height="2.6" fill="#7a7a7a"/><rect x="265.53" y="5.700000000000001" width="0.7" height="2.6" fill="#7a7a7a"/><text x="251.37" y="5.9" font-size="5.8" fill="#c2c2c2" textLength="9.6" lengthAdjust="spacingAndGlyphs">324</text><rect x="268.60" y="0" width="0.8" height="8.3" fill="#7a7a7a"/><rect x="271.67" y="5.700000000000001" width="0.7" height="2.6" fill="#7a7a7a"/><rect x="274.74" y="5.700000000000001" width="0.7" height="2.6" fill="#7a7a7a"/><rect x="277.81" y="5.1000000000000005" width="0.7" height="3.2" fill="#7a7a7a"/><rect x="280.89" y="5.700000000000001" width="0.7" height="2.6" fill="#7a7a7a"/><rect x="283.96" y="5.700000000000001" width="0.7" height="2.6" fill="#7a7a7a"/><text x="269.80" y="5.9" font-size="5.8" fill="#c2c2c2" textLength="9.6" lengthAdjust="spacingAndGlyphs">360</text><rect x="287.03" y="0" width="0.8" height="8.3" fill="#7a7a7a"/><rect x="290.10" y="5.700000000000001" width="0.7" height="2.6" fill="#7a7a7a"/><rect x="293.17" y="5.700000000000001" width="0.7" height="2.6" fill="#7a7a7a"/><rect x="296.24" y="5.1000000000000005" width="0.7" height="3.2" fill="#7a7a7a"/><rect x="299.32" y="5.700000000000001" width="0.7" height="2.6" fill="#7a7a7a"/><rect x="302.39" y="5.700000000000001" width="0.7" height="2.6" fill="#7a7a7a"/><text x="288.23" y="5.9" font-size="5.8" fill="#c2c2c2" textLength="9.6" lengthAdjust="spacingAndGlyphs">396</text><rect x="305.46" y="0" width="0.8" height="8.3" fill="#7a7a7a"/><rect x="308.53" y="5.700000000000001" width="0.7" height="2.6" fill="#7a7a7a"/><rect x="311.60" y="5.700000000000001" width="0.7" height="2.6" fill="#7a7a7a"/><rect x="314.68" y="5.1000000000000005" width="0.7" height="3.2" fill="#7a7a7a"/><rect x="317.75" y="5.700000000000001" width="0.7" height="2.6" fill="#7a7a7a"/><rect x="320.82" y="5.700000000000001" width="0.7" height="2.6" fill="#7a7a7a"/><text x="306.66" y="5.9" font-size="5.8" fill="#c2c2c2" textLength="9.6" lengthAdjust="spacingAndGlyphs">432</text><rect x="323.89" y="0" width="0.8" height="8.3" fill="#7a7a7a"/><rect x="326.96" y="5.700000000000001" width="0.7" height="2.6" fill="#7a7a7a"/><rect x="330.03" y="5.700000000000001" width="0.7" height="2.6" fill="#7a7a7a"/><rect x="333.10" y="5.1000000000000005" width="0.7" height="3.2" fill="#7a7a7a"/><rect x="336.18" y="5.700000000000001" width="0.7" height="2.6" fill="#7a7a7a"/><rect x="339.25" y="5.700000000000001" width="0.7" height="2.6" fill="#7a7a7a"/><text x="325.09" y="5.9" font-size="5.8" fill="#c2c2c2" textLength="9.6" lengthAdjust="spacingAndGlyphs">468</text><rect x="342.32" y="0" width="0.8" height="8.3" fill="#7a7a7a"/><rect x="345.39" y="5.700000000000001" width="0.7" height="2.6" fill="#7a7a7a"/><rect x="348.46" y="5.700000000000001" width="0.7" height="2.6" fill="#7a7a7a"/><rect x="351.53" y="5.1000000000000005" width="0.7" height="3.2" fill="#7a7a7a"/><rect x="354.61" y="5.700000000000001" width="0.7" height="2.6" fill="#7a7a7a"/><rect x="357.68" y="5.700000000000001" width="0.7" height="2.6" fill="#7a7a7a"/><text x="343.52" y="5.9" font-size="5.8" fill="#c2c2c2" textLength="9.6" lengthAdjust="spacingAndGlyphs">504</text><rect x="360.75" y="0" width="0.8" height="8.3" fill="#7a7a7a"/><rect x="363.82" y="5.700000000000001" width="0.7" height="2.6" fill="#7a7a7a"/><rect x="366.89" y="5.700000000000001" width="0.7" height="2.6" fill="#7a7a7a"/><rect x="369.96" y="5.1000000000000005" width="0.7" height="3.2" fill="#7a7a7a"/><rect x="373.04" y="5.700000000000001" width="0.7" height="2.6" fill="#7a7a7a"/><rect x="376.11" y="5.700000000000001" width="0.7" height="2.6" fill="#7a7a7a"/><text x="361.95" y="5.9" font-size="5.8" fill="#c2c2c2" textLength="9.6" lengthAdjust="spacingAndGlyphs">540</text><rect x="379.18" y="0" width="0.8" height="8.3" fill="#7a7a7a"/><rect x="382.25" y="5.700000000000001" width="0.7" height="2.6" fill="#7a7a7a"/><rect x="385.32" y="5.700000000000001" width="0.7" height="2.6" fill="#7a7a7a"/><rect x="388.39" y="5.1000000000000005" width="0.7" height="3.2" fill="#7a7a7a"/><rect x="391.47" y="5.700000000000001" width="0.7" height="2.6" fill="#7a7a7a"/><rect x="394.54" y="5.700000000000001" width="0.7" height="2.6" fill="#7a7a7a"/><text x="380.38" y="5.9" font-size="5.8" fill="#c2c2c2" textLength="9.6" lengthAdjust="spacingAndGlyphs">576</text><rect x="397.61" y="0" width="0.8" height="8.3" fill="#7a7a7a"/><rect x="400.68" y="5.700000000000001" width="0.7" height="2.6" fill="#7a7a7a"/><rect x="403.75" y="5.700000000000001" width="0.7" height="2.6" fill="#7a7a7a"/><rect x="406.82" y="5.1000000000000005" width="0.7" height="3.2" fill="#7a7a7a"/><rect x="409.90" y="5.700000000000001" width="0.7" height="2.6" fill="#7a7a7a"/><rect x="412.97" y="5.700000000000001" width="0.7" height="2.6" fill="#7a7a7a"/><text x="398.81" y="5.9" font-size="5.8" fill="#c2c2c2" textLength="9.6" lengthAdjust="spacingAndGlyphs">612</text><rect x="416.04" y="0" width="0.8" height="8.3" fill="#7a7a7a"/><rect x="419.11" y="5.700000000000001" width="0.7" height="2.6" fill="#7a7a7a"/><rect x="422.18" y="5.700000000000001" width="0.7" height="2.6" fill="#7a7a7a"/><rect x="425.25" y="5.1000000000000005" width="0.7" height="3.2" fill="#7a7a7a"/><rect x="428.33" y="5.700000000000001" width="0.7" height="2.6" fill="#7a7a7a"/><rect x="431.40" y="5.700000000000001" width="0.7" height="2.6" fill="#7a7a7a"/><text x="417.24" y="5.9" font-size="5.8" fill="#c2c2c2" textLength="9.6" lengthAdjust="spacingAndGlyphs">648</text><rect x="434.47" y="0" width="0.8" height="8.3" fill="#7a7a7a"/><rect x="437.54" y="5.700000000000001" width="0.7" height="2.6" fill="#7a7a7a"/><rect x="440.61" y="5.700000000000001" width="0.7" height="2.6" fill="#7a7a7a"/><rect x="443.69" y="5.1000000000000005" width="0.7" height="3.2" fill="#7a7a7a"/><rect x="446.76" y="5.700000000000001" width="0.7" height="2.6" fill="#7a7a7a"/><rect x="449.83" y="5.700000000000001" width="0.7" height="2.6" fill="#7a7a7a"/><text x="435.67" y="5.9" font-size="5.8" fill="#c2c2c2" textLength="9.6" lengthAdjust="spacingAndGlyphs">684</text><rect x="452.90" y="0" width="0.8" height="8.3" fill="#7a7a7a"/><rect x="455.97" y="5.700000000000001" width="0.7" height="2.6" fill="#7a7a7a"/><rect x="459.04" y="5.700000000000001" width="0.7" height="2.6" fill="#7a7a7a"/><rect x="462.12" y="5.1000000000000005" width="0.7" height="3.2" fill="#7a7a7a"/><rect x="465.19" y="5.700000000000001" width="0.7" height="2.6" fill="#7a7a7a"/><rect x="468.26" y="5.700000000000001" width="0.7" height="2.6" fill="#7a7a7a"/><text x="454.10" y="5.9" font-size="5.8" fill="#c2c2c2" textLength="9.6" lengthAdjust="spacingAndGlyphs">720</text><rect x="471.33" y="0" width="0.8" height="8.3" fill="#7a7a7a"/><rect x="474.40" y="5.700000000000001" width="0.7" height="2.6" fill="#7a7a7a"/><rect x="477.47" y="5.700000000000001" width="0.7" height="2.6" fill="#7a7a7a"/><rect x="480.54" y="5.1000000000000005" width="0.7" height="3.2" fill="#7a7a7a"/><rect x="483.62" y="5.700000000000001" width="0.7" height="2.6" fill="#7a7a7a"/><rect x="486.69" y="5.700000000000001" width="0.7" height="2.6" fill="#7a7a7a"/><text x="472.53" y="5.9" font-size="5.8" fill="#c2c2c2" textLength="9.6" lengthAdjust="spacingAndGlyphs">756</text></svg><svg class="abs" style="left:20.4px;top:56.8px" width="8.6" height="465.7"><rect width="8.6" height="465.7" fill="#3b3b3b"/><rect x="0" y="-22.94" width="8.6" height="0.8" fill="#7a7a7a"/><rect x="6.0" y="-19.87" width="2.6" height="0.7" fill="#7a7a7a"/><rect x="6.0" y="-16.80" width="2.6" height="0.7" fill="#7a7a7a"/><rect x="5.3999999999999995" y="-13.72" width="3.2" height="0.7" fill="#7a7a7a"/><rect x="6.0" y="-10.65" width="2.6" height="0.7" fill="#7a7a7a"/><rect x="6.0" y="-7.58" width="2.6" height="0.7" fill="#7a7a7a"/><text transform="translate(1.6,-38.74) rotate(90)" x="0" y="0" font-size="5.2" fill="#a6a6a6" textLength="13.2" lengthAdjust="spacingAndGlyphs">648</text><rect x="0" y="-4.51" width="8.6" height="0.8" fill="#7a7a7a"/><rect x="6.0" y="-1.44" width="2.6" height="0.7" fill="#7a7a7a"/><rect x="6.0" y="1.63" width="2.6" height="0.7" fill="#7a7a7a"/><rect x="5.3999999999999995" y="4.71" width="3.2" height="0.7" fill="#7a7a7a"/><rect x="6.0" y="7.78" width="2.6" height="0.7" fill="#7a7a7a"/><rect x="6.0" y="10.85" width="2.6" height="0.7" fill="#7a7a7a"/><text transform="translate(1.6,-20.31) rotate(90)" x="0" y="0" font-size="5.2" fill="#a6a6a6" textLength="13.2" lengthAdjust="spacingAndGlyphs">612</text><rect x="0" y="13.92" width="8.6" height="0.8" fill="#7a7a7a"/><rect x="6.0" y="16.99" width="2.6" height="0.7" fill="#7a7a7a"/><rect x="6.0" y="20.06" width="2.6" height="0.7" fill="#7a7a7a"/><rect x="5.3999999999999995" y="23.14" width="3.2" height="0.7" fill="#7a7a7a"/><rect x="6.0" y="26.21" width="2.6" height="0.7" fill="#7a7a7a"/><rect x="6.0" y="29.28" width="2.6" height="0.7" fill="#7a7a7a"/><text transform="translate(1.6,-1.88) rotate(90)" x="0" y="0" font-size="5.2" fill="#a6a6a6" textLength="13.2" lengthAdjust="spacingAndGlyphs">576</text><rect x="0" y="32.35" width="8.6" height="0.8" fill="#7a7a7a"/><rect x="6.0" y="35.42" width="2.6" height="0.7" fill="#7a7a7a"/><rect x="6.0" y="38.49" width="2.6" height="0.7" fill="#7a7a7a"/><rect x="5.3999999999999995" y="41.57" width="3.2" height="0.7" fill="#7a7a7a"/><rect x="6.0" y="44.64" width="2.6" height="0.7" fill="#7a7a7a"/><rect x="6.0" y="47.71" width="2.6" height="0.7" fill="#7a7a7a"/><text transform="translate(1.6,16.55) rotate(90)" x="0" y="0" font-size="5.2" fill="#a6a6a6" textLength="13.2" lengthAdjust="spacingAndGlyphs">540</text><rect x="0" y="50.78" width="8.6" height="0.8" fill="#7a7a7a"/><rect x="6.0" y="53.85" width="2.6" height="0.7" fill="#7a7a7a"/><rect x="6.0" y="56.92" width="2.6" height="0.7" fill="#7a7a7a"/><rect x="5.3999999999999995" y="60.00" width="3.2" height="0.7" fill="#7a7a7a"/><rect x="6.0" y="63.07" width="2.6" height="0.7" fill="#7a7a7a"/><rect x="6.0" y="66.14" width="2.6" height="0.7" fill="#7a7a7a"/><text transform="translate(1.6,34.98) rotate(90)" x="0" y="0" font-size="5.2" fill="#a6a6a6" textLength="13.2" lengthAdjust="spacingAndGlyphs">504</text><rect x="0" y="69.21" width="8.6" height="0.8" fill="#7a7a7a"/><rect x="6.0" y="72.28" width="2.6" height="0.7" fill="#7a7a7a"/><rect x="6.0" y="75.35" width="2.6" height="0.7" fill="#7a7a7a"/><rect x="5.3999999999999995" y="78.43" width="3.2" height="0.7" fill="#7a7a7a"/><rect x="6.0" y="81.50" width="2.6" height="0.7" fill="#7a7a7a"/><rect x="6.0" y="84.57" width="2.6" height="0.7" fill="#7a7a7a"/><text transform="translate(1.6,53.41) rotate(90)" x="0" y="0" font-size="5.2" fill="#a6a6a6" textLength="13.2" lengthAdjust="spacingAndGlyphs">468</text><rect x="0" y="87.64" width="8.6" height="0.8" fill="#7a7a7a"/><rect x="6.0" y="90.71" width="2.6" height="0.7" fill="#7a7a7a"/><rect x="6.0" y="93.78" width="2.6" height="0.7" fill="#7a7a7a"/><rect x="5.3999999999999995" y="96.86" width="3.2" height="0.7" fill="#7a7a7a"/><rect x="6.0" y="99.93" width="2.6" height="0.7" fill="#7a7a7a"/><rect x="6.0" y="103.00" width="2.6" height="0.7" fill="#7a7a7a"/><text transform="translate(1.6,71.84) rotate(90)" x="0" y="0" font-size="5.2" fill="#a6a6a6" textLength="13.2" lengthAdjust="spacingAndGlyphs">432</text><rect x="0" y="106.07" width="8.6" height="0.8" fill="#7a7a7a"/><rect x="6.0" y="109.14" width="2.6" height="0.7" fill="#7a7a7a"/><rect x="6.0" y="112.21" width="2.6" height="0.7" fill="#7a7a7a"/><rect x="5.3999999999999995" y="115.29" width="3.2" height="0.7" fill="#7a7a7a"/><rect x="6.0" y="118.36" width="2.6" height="0.7" fill="#7a7a7a"/><rect x="6.0" y="121.43" width="2.6" height="0.7" fill="#7a7a7a"/><text transform="translate(1.6,90.27) rotate(90)" x="0" y="0" font-size="5.2" fill="#a6a6a6" textLength="13.2" lengthAdjust="spacingAndGlyphs">396</text><rect x="0" y="124.50" width="8.6" height="0.8" fill="#7a7a7a"/><rect x="6.0" y="127.57" width="2.6" height="0.7" fill="#7a7a7a"/><rect x="6.0" y="130.64" width="2.6" height="0.7" fill="#7a7a7a"/><rect x="5.3999999999999995" y="133.72" width="3.2" height="0.7" fill="#7a7a7a"/><rect x="6.0" y="136.79" width="2.6" height="0.7" fill="#7a7a7a"/><rect x="6.0" y="139.86" width="2.6" height="0.7" fill="#7a7a7a"/><text transform="translate(1.6,108.70) rotate(90)" x="0" y="0" font-size="5.2" fill="#a6a6a6" textLength="13.2" lengthAdjust="spacingAndGlyphs">360</text><rect x="0" y="142.93" width="8.6" height="0.8" fill="#7a7a7a"/><rect x="6.0" y="146.00" width="2.6" height="0.7" fill="#7a7a7a"/><rect x="6.0" y="149.07" width="2.6" height="0.7" fill="#7a7a7a"/><rect x="5.3999999999999995" y="152.15" width="3.2" height="0.7" fill="#7a7a7a"/><rect x="6.0" y="155.22" width="2.6" height="0.7" fill="#7a7a7a"/><rect x="6.0" y="158.29" width="2.6" height="0.7" fill="#7a7a7a"/><text transform="translate(1.6,127.13) rotate(90)" x="0" y="0" font-size="5.2" fill="#a6a6a6" textLength="13.2" lengthAdjust="spacingAndGlyphs">324</text><rect x="0" y="161.36" width="8.6" height="0.8" fill="#7a7a7a"/><rect x="6.0" y="164.43" width="2.6" height="0.7" fill="#7a7a7a"/><rect x="6.0" y="167.50" width="2.6" height="0.7" fill="#7a7a7a"/><rect x="5.3999999999999995" y="170.58" width="3.2" height="0.7" fill="#7a7a7a"/><rect x="6.0" y="173.65" width="2.6" height="0.7" fill="#7a7a7a"/><rect x="6.0" y="176.72" width="2.6" height="0.7" fill="#7a7a7a"/><text transform="translate(1.6,145.56) rotate(90)" x="0" y="0" font-size="5.2" fill="#a6a6a6" textLength="13.2" lengthAdjust="spacingAndGlyphs">288</text><rect x="0" y="179.79" width="8.6" height="0.8" fill="#7a7a7a"/><rect x="6.0" y="182.86" width="2.6" height="0.7" fill="#7a7a7a"/><rect x="6.0" y="185.93" width="2.6" height="0.7" fill="#7a7a7a"/><rect x="5.3999999999999995" y="189.01" width="3.2" height="0.7" fill="#7a7a7a"/><rect x="6.0" y="192.08" width="2.6" height="0.7" fill="#7a7a7a"/><rect x="6.0" y="195.15" width="2.6" height="0.7" fill="#7a7a7a"/><text transform="translate(1.6,163.99) rotate(90)" x="0" y="0" font-size="5.2" fill="#a6a6a6" textLength="13.2" lengthAdjust="spacingAndGlyphs">252</text><rect x="0" y="198.22" width="8.6" height="0.8" fill="#7a7a7a"/><rect x="6.0" y="201.29" width="2.6" height="0.7" fill="#7a7a7a"/><rect x="6.0" y="204.36" width="2.6" height="0.7" fill="#7a7a7a"/><rect x="5.3999999999999995" y="207.44" width="3.2" height="0.7" fill="#7a7a7a"/><rect x="6.0" y="210.51" width="2.6" height="0.7" fill="#7a7a7a"/><rect x="6.0" y="213.58" width="2.6" height="0.7" fill="#7a7a7a"/><text transform="translate(1.6,182.42) rotate(90)" x="0" y="0" font-size="5.2" fill="#a6a6a6" textLength="13.2" lengthAdjust="spacingAndGlyphs">216</text><rect x="0" y="216.65" width="8.6" height="0.8" fill="#7a7a7a"/><rect x="6.0" y="219.72" width="2.6" height="0.7" fill="#7a7a7a"/><rect x="6.0" y="222.79" width="2.6" height="0.7" fill="#7a7a7a"/><rect x="5.3999999999999995" y="225.87" width="3.2" height="0.7" fill="#7a7a7a"/><rect x="6.0" y="228.94" width="2.6" height="0.7" fill="#7a7a7a"/><rect x="6.0" y="232.01" width="2.6" height="0.7" fill="#7a7a7a"/><text transform="translate(1.6,200.85) rotate(90)" x="0" y="0" font-size="5.2" fill="#a6a6a6" textLength="13.2" lengthAdjust="spacingAndGlyphs">180</text><rect x="0" y="235.08" width="8.6" height="0.8" fill="#7a7a7a"/><rect x="6.0" y="238.15" width="2.6" height="0.7" fill="#7a7a7a"/><rect x="6.0" y="241.22" width="2.6" height="0.7" fill="#7a7a7a"/><rect x="5.3999999999999995" y="244.30" width="3.2" height="0.7" fill="#7a7a7a"/><rect x="6.0" y="247.37" width="2.6" height="0.7" fill="#7a7a7a"/><rect x="6.0" y="250.44" width="2.6" height="0.7" fill="#7a7a7a"/><text transform="translate(1.6,219.28) rotate(90)" x="0" y="0" font-size="5.2" fill="#a6a6a6" textLength="13.2" lengthAdjust="spacingAndGlyphs">144</text><rect x="0" y="253.51" width="8.6" height="0.8" fill="#7a7a7a"/><rect x="6.0" y="256.58" width="2.6" height="0.7" fill="#7a7a7a"/><rect x="6.0" y="259.65" width="2.6" height="0.7" fill="#7a7a7a"/><rect x="5.3999999999999995" y="262.73" width="3.2" height="0.7" fill="#7a7a7a"/><rect x="6.0" y="265.80" width="2.6" height="0.7" fill="#7a7a7a"/><rect x="6.0" y="268.87" width="2.6" height="0.7" fill="#7a7a7a"/><text transform="translate(1.6,237.71) rotate(90)" x="0" y="0" font-size="5.2" fill="#a6a6a6" textLength="13.2" lengthAdjust="spacingAndGlyphs">108</text><rect x="0" y="271.94" width="8.6" height="0.8" fill="#7a7a7a"/><rect x="6.0" y="275.01" width="2.6" height="0.7" fill="#7a7a7a"/><rect x="6.0" y="278.08" width="2.6" height="0.7" fill="#7a7a7a"/><rect x="5.3999999999999995" y="281.15" width="3.2" height="0.7" fill="#7a7a7a"/><rect x="6.0" y="284.23" width="2.6" height="0.7" fill="#7a7a7a"/><rect x="6.0" y="287.30" width="2.6" height="0.7" fill="#7a7a7a"/><text transform="translate(1.6,260.54) rotate(90)" x="0" y="0" font-size="5.2" fill="#a6a6a6" textLength="8.8" lengthAdjust="spacingAndGlyphs">72</text><rect x="0" y="290.37" width="8.6" height="0.8" fill="#7a7a7a"/><rect x="6.0" y="293.44" width="2.6" height="0.7" fill="#7a7a7a"/><rect x="6.0" y="296.51" width="2.6" height="0.7" fill="#7a7a7a"/><rect x="5.3999999999999995" y="299.58" width="3.2" height="0.7" fill="#7a7a7a"/><rect x="6.0" y="302.66" width="2.6" height="0.7" fill="#7a7a7a"/><rect x="6.0" y="305.73" width="2.6" height="0.7" fill="#7a7a7a"/><text transform="translate(1.6,278.97) rotate(90)" x="0" y="0" font-size="5.2" fill="#a6a6a6" textLength="8.8" lengthAdjust="spacingAndGlyphs">36</text><rect x="0" y="308.80" width="8.6" height="0.8" fill="#7a7a7a"/><rect x="6.0" y="311.87" width="2.6" height="0.7" fill="#7a7a7a"/><rect x="6.0" y="314.94" width="2.6" height="0.7" fill="#7a7a7a"/><rect x="5.3999999999999995" y="318.01" width="3.2" height="0.7" fill="#7a7a7a"/><rect x="6.0" y="321.09" width="2.6" height="0.7" fill="#7a7a7a"/><rect x="6.0" y="324.16" width="2.6" height="0.7" fill="#7a7a7a"/><text transform="translate(1.6,301.80) rotate(90)" x="0" y="0" font-size="5.2" fill="#a6a6a6" textLength="4.4" lengthAdjust="spacingAndGlyphs">0</text><rect x="0" y="327.23" width="8.6" height="0.8" fill="#7a7a7a"/><rect x="6.0" y="330.30" width="2.6" height="0.7" fill="#7a7a7a"/><rect x="6.0" y="333.37" width="2.6" height="0.7" fill="#7a7a7a"/><rect x="5.3999999999999995" y="336.44" width="3.2" height="0.7" fill="#7a7a7a"/><rect x="6.0" y="339.52" width="2.6" height="0.7" fill="#7a7a7a"/><rect x="6.0" y="342.59" width="2.6" height="0.7" fill="#7a7a7a"/><text transform="translate(1.6,315.83) rotate(90)" x="0" y="0" font-size="5.2" fill="#a6a6a6" textLength="8.8" lengthAdjust="spacingAndGlyphs">36</text><rect x="0" y="345.66" width="8.6" height="0.8" fill="#7a7a7a"/><rect x="6.0" y="348.73" width="2.6" height="0.7" fill="#7a7a7a"/><rect x="6.0" y="351.80" width="2.6" height="0.7" fill="#7a7a7a"/><rect x="5.3999999999999995" y="354.88" width="3.2" height="0.7" fill="#7a7a7a"/><rect x="6.0" y="357.95" width="2.6" height="0.7" fill="#7a7a7a"/><rect x="6.0" y="361.02" width="2.6" height="0.7" fill="#7a7a7a"/><text transform="translate(1.6,334.26) rotate(90)" x="0" y="0" font-size="5.2" fill="#a6a6a6" textLength="8.8" lengthAdjust="spacingAndGlyphs">72</text><rect x="0" y="364.09" width="8.6" height="0.8" fill="#7a7a7a"/><rect x="6.0" y="367.16" width="2.6" height="0.7" fill="#7a7a7a"/><rect x="6.0" y="370.23" width="2.6" height="0.7" fill="#7a7a7a"/><rect x="5.3999999999999995" y="373.31" width="3.2" height="0.7" fill="#7a7a7a"/><rect x="6.0" y="376.38" width="2.6" height="0.7" fill="#7a7a7a"/><rect x="6.0" y="379.45" width="2.6" height="0.7" fill="#7a7a7a"/><text transform="translate(1.6,348.29) rotate(90)" x="0" y="0" font-size="5.2" fill="#a6a6a6" textLength="13.2" lengthAdjust="spacingAndGlyphs">108</text><rect x="0" y="382.52" width="8.6" height="0.8" fill="#7a7a7a"/><rect x="6.0" y="385.59" width="2.6" height="0.7" fill="#7a7a7a"/><rect x="6.0" y="388.66" width="2.6" height="0.7" fill="#7a7a7a"/><rect x="5.3999999999999995" y="391.73" width="3.2" height="0.7" fill="#7a7a7a"/><rect x="6.0" y="394.81" width="2.6" height="0.7" fill="#7a7a7a"/><rect x="6.0" y="397.88" width="2.6" height="0.7" fill="#7a7a7a"/><text transform="translate(1.6,366.72) rotate(90)" x="0" y="0" font-size="5.2" fill="#a6a6a6" textLength="13.2" lengthAdjust="spacingAndGlyphs">144</text><rect x="0" y="400.95" width="8.6" height="0.8" fill="#7a7a7a"/><rect x="6.0" y="404.02" width="2.6" height="0.7" fill="#7a7a7a"/><rect x="6.0" y="407.09" width="2.6" height="0.7" fill="#7a7a7a"/><rect x="5.3999999999999995" y="410.17" width="3.2" height="0.7" fill="#7a7a7a"/><rect x="6.0" y="413.24" width="2.6" height="0.7" fill="#7a7a7a"/><rect x="6.0" y="416.31" width="2.6" height="0.7" fill="#7a7a7a"/><text transform="translate(1.6,385.15) rotate(90)" x="0" y="0" font-size="5.2" fill="#a6a6a6" textLength="13.2" lengthAdjust="spacingAndGlyphs">180</text><rect x="0" y="419.38" width="8.6" height="0.8" fill="#7a7a7a"/><rect x="6.0" y="422.45" width="2.6" height="0.7" fill="#7a7a7a"/><rect x="6.0" y="425.52" width="2.6" height="0.7" fill="#7a7a7a"/><rect x="5.3999999999999995" y="428.59" width="3.2" height="0.7" fill="#7a7a7a"/><rect x="6.0" y="431.67" width="2.6" height="0.7" fill="#7a7a7a"/><rect x="6.0" y="434.74" width="2.6" height="0.7" fill="#7a7a7a"/><text transform="translate(1.6,403.58) rotate(90)" x="0" y="0" font-size="5.2" fill="#a6a6a6" textLength="13.2" lengthAdjust="spacingAndGlyphs">216</text><rect x="0" y="437.81" width="8.6" height="0.8" fill="#7a7a7a"/><rect x="6.0" y="440.88" width="2.6" height="0.7" fill="#7a7a7a"/><rect x="6.0" y="443.95" width="2.6" height="0.7" fill="#7a7a7a"/><rect x="5.3999999999999995" y="447.02" width="3.2" height="0.7" fill="#7a7a7a"/><rect x="6.0" y="450.10" width="2.6" height="0.7" fill="#7a7a7a"/><rect x="6.0" y="453.17" width="2.6" height="0.7" fill="#7a7a7a"/><text transform="translate(1.6,422.01) rotate(90)" x="0" y="0" font-size="5.2" fill="#a6a6a6" textLength="13.2" lengthAdjust="spacingAndGlyphs">252</text><rect x="0" y="456.24" width="8.6" height="0.8" fill="#7a7a7a"/><rect x="6.0" y="459.31" width="2.6" height="0.7" fill="#7a7a7a"/><rect x="6.0" y="462.38" width="2.6" height="0.7" fill="#7a7a7a"/><rect x="5.3999999999999995" y="465.45" width="3.2" height="0.7" fill="#7a7a7a"/><rect x="6.0" y="468.53" width="2.6" height="0.7" fill="#7a7a7a"/><rect x="6.0" y="471.60" width="2.6" height="0.7" fill="#7a7a7a"/><text transform="translate(1.6,440.44) rotate(90)" x="0" y="0" font-size="5.2" fill="#a6a6a6" textLength="13.2" lengthAdjust="spacingAndGlyphs">288</text><rect x="0" y="474.67" width="8.6" height="0.8" fill="#7a7a7a"/><rect x="6.0" y="477.74" width="2.6" height="0.7" fill="#7a7a7a"/><rect x="6.0" y="480.81" width="2.6" height="0.7" fill="#7a7a7a"/><rect x="5.3999999999999995" y="483.88" width="3.2" height="0.7" fill="#7a7a7a"/><rect x="6.0" y="486.96" width="2.6" height="0.7" fill="#7a7a7a"/><rect x="6.0" y="490.03" width="2.6" height="0.7" fill="#7a7a7a"/><text transform="translate(1.6,458.87) rotate(90)" x="0" y="0" font-size="5.2" fill="#a6a6a6" textLength="13.2" lengthAdjust="spacingAndGlyphs">324</text></svg><div class="abs" style="left:20.4px;top:48.5px;width:8.6px;height:8.3px;background:#3b3b3b;"></div><div class="ab" style="top:65.25px;height:137.6px"><svg width="314" height="137.6"><g transform="translate(0,-0.25)"><use href="#cr1" x="152.3" y="87.5" style="--c0:#f9c83e;--c1:#f29a36;--c2:#e8304c;--c3:#ee5a4a;--c4:#fbd860"/><use href="#trunk" x="152.3" y="87.5"/><use href="#cr2" x="204.3" y="87.5" style="--c0:#f9c83e;--c1:#f29a36;--c2:#e8304c;--c3:#ee5a4a;--c4:#fbd860"/><use href="#trunk" x="204.3" y="87.5"/><use href="#cr3" x="253.3" y="87.5" style="--c0:#f9c83e;--c1:#f29a36;--c2:#e8304c;--c3:#ee5a4a;--c4:#fbd860"/><use href="#trunk" x="253.3" y="87.5"/><rect x="127" y="87.5" width="158.7" height="2.7" fill="#000"/><rect x="127" y="117.1" width="158.7" height="2.7" fill="#000"/><path d="M127.25,96.00 L132.50,96.00 L135.00,105.00 L136.50,96.00 L140.80,96.00 L142.60,105.00 L144.50,96.00 L150.00,96.00 L145.60,111.60 L140.60,111.60 L138.60,104.00 L136.30,111.60 L131.30,111.60 Z" fill="#000"/><ellipse cx="160.35000000000002" cy="103.80000000000001" rx="6.95" ry="6.05" stroke="#000" stroke-width="4.1" fill="none"/><ellipse cx="178.0" cy="103.80000000000001" rx="6.95" ry="6.05" stroke="#000" stroke-width="4.1" fill="none"/><path d="M190.10000000000002,97.69999999999999 L193.8,97.69999999999999 A6.1,6.1 0 0 1 193.8,109.9 L190.10000000000002,109.9 Z" stroke="#000" stroke-width="4" fill="none"/><path d="M223.11,100.84 A7.4,7.4 0 1 0 223.71,104.62 L216.20,104.60" stroke="#ee6e5a" stroke-width="1.3" fill="none"/><path d="M228.60,111.90 L228.60,96.60 L233.30,96.60 A4.05,4.05 0 0 1 233.30,104.70 L228.60,104.70 M232.30,104.70 L237.60,111.90" stroke="#ee6e5a" stroke-width="1.3" fill="none"/><circle cx="248.8" cy="103.85" r="7.35" stroke="#ee6e5a" stroke-width="1.3" fill="none"/><path d="M260.75,96.20 L260.75,106.20 A5.45,5.1 0 0 0 271.65,106.20 L271.65,96.20" stroke="#ee6e5a" stroke-width="1.3" fill="none"/><path d="M276.95,111.90 L276.95,96.60 L281.60,96.60 A4.45,4.45 0 0 1 281.60,105.50 L276.95,105.50" stroke="#ee6e5a" stroke-width="1.3" fill="none"/></g><text x="36.5" y="59.85" font-size="10.4" fill="#282828" textLength="14" lengthAdjust="spacingAndGlyphs">1.1</text><text x="36.5" y="70.35" font-size="8.6" fill="#282828" textLength="40.8" lengthAdjust="spacingAndGlyphs">Rød brun,</text><text x="36.5" y="81.55" font-size="8.6" fill="#282828" textLength="31" lengthAdjust="spacingAndGlyphs">orange</text><text x="36.5" y="92.35" font-size="8.6" fill="#282828" textLength="27.5" lengthAdjust="spacingAndGlyphs">og gul</text></svg></div><div class="ab" style="top:214.5px;height:138px"><svg width="314" height="138"><g transform="translate(0,-1.80)"><use href="#cr1" x="152.3" y="87.5" style="--c0:#2f8f4e;--c1:#d93a34;--c2:#f2c060;--c3:#e46a5a;--c4:#4aa060"/><use href="#trunk" x="152.3" y="87.5"/><use href="#cr2" x="204.3" y="87.5" style="--c0:#2f8f4e;--c1:#d93a34;--c2:#f2c060;--c3:#e46a5a;--c4:#4aa060"/><use href="#trunk" x="204.3" y="87.5"/><use href="#cr3" x="253.3" y="87.5" style="--c0:#2f8f4e;--c1:#d93a34;--c2:#f2c060;--c3:#e46a5a;--c4:#4aa060"/><use href="#trunk" x="253.3" y="87.5"/><rect x="127" y="87.5" width="158.7" height="2.7" fill="#000"/><rect x="127" y="117.1" width="158.7" height="2.7" fill="#000"/><path d="M127.25,96.00 L132.50,96.00 L135.00,105.00 L136.50,96.00 L140.80,96.00 L142.60,105.00 L144.50,96.00 L150.00,96.00 L145.60,111.60 L140.60,111.60 L138.60,104.00 L136.30,111.60 L131.30,111.60 Z" fill="#000"/><ellipse cx="160.35000000000002" cy="103.80000000000001" rx="6.95" ry="6.05" stroke="#000" stroke-width="4.1" fill="none"/><ellipse cx="178.0" cy="103.80000000000001" rx="6.95" ry="6.05" stroke="#000" stroke-width="4.1" fill="none"/><path d="M190.10000000000002,97.69999999999999 L193.8,97.69999999999999 A6.1,6.1 0 0 1 193.8,109.9 L190.10000000000002,109.9 Z" stroke="#000" stroke-width="4" fill="none"/><path d="M223.11,100.84 A7.4,7.4 0 1 0 223.71,104.62 L216.20,104.60" stroke="#5a8c6f" stroke-width="1.3" fill="none"/><path d="M228.60,111.90 L228.60,96.60 L233.30,96.60 A4.05,4.05 0 0 1 233.30,104.70 L228.60,104.70 M232.30,104.70 L237.60,111.90" stroke="#5a8c6f" stroke-width="1.3" fill="none"/><circle cx="248.8" cy="103.85" r="7.35" stroke="#5a8c6f" stroke-width="1.3" fill="none"/><path d="M260.75,96.20 L260.75,106.20 A5.45,5.1 0 0 0 271.65,106.20 L271.65,96.20" stroke="#5a8c6f" stroke-width="1.3" fill="none"/><path d="M276.95,111.90 L276.95,96.60 L281.60,96.60 A4.45,4.45 0 0 1 281.60,105.50 L276.95,105.50" stroke="#5a8c6f" stroke-width="1.3" fill="none"/></g><text x="36.5" y="58.30" font-size="10.4" fill="#282828" textLength="14.5" lengthAdjust="spacingAndGlyphs">1.2</text><text x="36.5" y="68.90" font-size="8.6" fill="#282828" textLength="22.5" lengthAdjust="spacingAndGlyphs">Grøn,</text><text x="36.5" y="79.30" font-size="8.6" fill="#282828" textLength="26.5" lengthAdjust="spacingAndGlyphs">gul og</text><text x="36.5" y="90.10" font-size="8.6" fill="#282828" textLength="30.8" lengthAdjust="spacingAndGlyphs">orange</text></svg></div><div class="ab" style="top:364.4px;height:137.2px"><svg width="314" height="137.2"><g transform="translate(0,-3.00)"><use href="#cr1" x="152.3" y="87.5" style="--c0:#7a3589;--c1:#df4f7c;--c2:#f5a83a;--c3:#e8607a;--c4:#f7c850"/><use href="#trunk" x="152.3" y="87.5"/><use href="#cr2" x="204.3" y="87.5" style="--c0:#7a3589;--c1:#df4f7c;--c2:#f5a83a;--c3:#e8607a;--c4:#f7c850"/><use href="#trunk" x="204.3" y="87.5"/><use href="#cr3" x="253.3" y="87.5" style="--c0:#7a3589;--c1:#df4f7c;--c2:#f5a83a;--c3:#e8607a;--c4:#f7c850"/><use href="#trunk" x="253.3" y="87.5"/><rect x="127" y="87.5" width="158.7" height="2.7" fill="#000"/><rect x="127" y="117.1" width="158.7" height="2.7" fill="#000"/><path d="M127.25,96.00 L132.50,96.00 L135.00,105.00 L136.50,96.00 L140.80,96.00 L142.60,105.00 L144.50,96.00 L150.00,96.00 L145.60,111.60 L140.60,111.60 L138.60,104.00 L136.30,111.60 L131.30,111.60 Z" fill="#000"/><ellipse cx="160.35000000000002" cy="103.80000000000001" rx="6.95" ry="6.05" stroke="#000" stroke-width="4.1" fill="none"/><ellipse cx="178.0" cy="103.80000000000001" rx="6.95" ry="6.05" stroke="#000" stroke-width="4.1" fill="none"/><path d="M190.10000000000002,97.69999999999999 L193.8,97.69999999999999 A6.1,6.1 0 0 1 193.8,109.9 L190.10000000000002,109.9 Z" stroke="#000" stroke-width="4" fill="none"/><path d="M223.11,100.84 A7.4,7.4 0 1 0 223.71,104.62 L216.20,104.60" stroke="#c8486f" stroke-width="1.3" fill="none"/><path d="M228.60,111.90 L228.60,96.60 L233.30,96.60 A4.05,4.05 0 0 1 233.30,104.70 L228.60,104.70 M232.30,104.70 L237.60,111.90" stroke="#c8486f" stroke-width="1.3" fill="none"/><circle cx="248.8" cy="103.85" r="7.35" stroke="#c8486f" stroke-width="1.3" fill="none"/><path d="M260.75,96.20 L260.75,106.20 A5.45,5.1 0 0 0 271.65,106.20 L271.65,96.20" stroke="#c8486f" stroke-width="1.3" fill="none"/><path d="M276.95,111.90 L276.95,96.60 L281.60,96.60 A4.45,4.45 0 0 1 281.60,105.50 L276.95,105.50" stroke="#c8486f" stroke-width="1.3" fill="none"/></g><text x="36.5" y="61.80" font-size="10.4" fill="#282828" textLength="14.5" lengthAdjust="spacingAndGlyphs">1.3</text><text x="36.5" y="72.00" font-size="8.6" fill="#282828" textLength="40.5" lengthAdjust="spacingAndGlyphs">Mørkerød</text><text x="36.5" y="82.60" font-size="8.6" fill="#282828" textLength="27" lengthAdjust="spacingAndGlyphs">og lilla</text><rect x="157.39999999999998" y="103.10" width="3.4" height="3.4" fill="#e4ecfb" stroke="#5a84dc" stroke-width="0.8"/></svg></div><svg class="abs" style="left:97.00px;top:353.01px;overflow:visible" width="34.00" height="9.44"><text x="0" y="6.79" font-size="5.9" fill="#000" font-weight="normal" font-style="normal" textLength="34.00" lengthAdjust="spacingAndGlyphs">Lorem ipsum</text></svg><svg class="abs" style="left:464.8px;top:51px" width="6" height="4"><path d="M1,3 L3,1 L5,3" stroke="#9c9c9c" fill="none" stroke-width="0.8"/></svg><div class="abs" style="left:463.6px;top:272px;width:7.4px;height:236px;background:#5e5e5e;border-radius:3.7px"></div><svg class="abs" style="left:464.8px;top:513px" width="6" height="4"><path d="M1,1 L3,3 L5,1" stroke="#9c9c9c" fill="none" stroke-width="0.8"/></svg><div class="abs" style="left:21.5px;top:522.5px;width:26.5px;height:8.5px;background:#474747;"></div><svg class="abs" style="left:25.00px;top:522.37px;overflow:visible" width="13.00" height="9.92"><text x="0" y="7.13" font-size="6.2" fill="#dedede" font-weight="normal" font-style="normal" textLength="13.00" lengthAdjust="spacingAndGlyphs">100%</text></svg><div class="abs" style="left:48.3px;top:522.5px;width:8.5px;height:8.5px;background:#4b4b4b;"></div><svg class="abs" style="left:49.5px;top:525.5px" width="6" height="4"><path d="M1,0.8 L3,2.8 L5,0.8" stroke="#c8c8c8" fill="none" stroke-width="0.9"/></svg><svg class="abs" style="left:61px;top:523.8px" width="16" height="7"><path d="M1,0.8 V5.8" stroke="#d0d0d0" stroke-width="0.9"/><path d="M5.6,0.8 L2.4,3.3 L5.6,5.8Z M11.5,0.8 L8.3,3.3 L11.5,5.8Z" fill="#d0d0d0"/></svg><div class="abs" style="left:79px;top:522.5px;width:21px;height:8.5px;background:#474747;"></div><svg class="abs" style="left:81.00px;top:522.37px;overflow:visible" width="3.30" height="9.92"><text x="0" y="7.13" font-size="6.2" fill="#dedede" font-weight="normal" font-style="normal" textLength="3.30" lengthAdjust="spacingAndGlyphs">3</text></svg><div class="abs" style="left:100.5px;top:522.5px;width:8.5px;height:8.5px;background:#4b4b4b;"></div><svg class="abs" style="left:101.5px;top:525.5px" width="6" height="4"><path d="M1,0.8 L3,2.8 L5,0.8" stroke="#c8c8c8" fill="none" stroke-width="0.9"/></svg><svg class="abs" style="left:111px;top:523.8px" width="16" height="7"><path d="M1,0.8 L4.2,3.3 L1,5.8Z M7,0.8 L10.2,3.3 L7,5.8Z" fill="#6e6e6e"/><path d="M11.8,0.8 V5.8" stroke="#6e6e6e" stroke-width="0.9"/></svg><svg class="abs" style="left:153.00px;top:522.07px;overflow:visible" width="58.00" height="9.92"><text x="0" y="7.13" font-size="6.2" fill="#d2d2d2" font-weight="normal" font-style="normal" textLength="58.00" lengthAdjust="spacingAndGlyphs">Toggle Direct Selection</text></svg><div class="abs" style="left:233px;top:522.5px;width:0.8px;height:8.5px;background:#474747;"></div><svg class="abs" style="left:236.5px;top:524px" width="5" height="6"><path d="M1,0.5 L4,3 L1,5.5Z" fill="#dadada"/></svg><svg class="abs" style="left:244px;top:524px" width="5" height="6"><path d="M3.5,1 L1.5,3 L3.5,5" stroke="#8a8a8a" fill="none" stroke-width="0.8"/></svg><div class="abs" style="left:339px;top:523.5px;width:13px;height:7px;background:#666666;border-radius:3.5px"></div><svg class="abs" style="left:457px;top:524px" width="5" height="6"><path d="M1.5,1 L3.5,3 L1.5,5" stroke="#8a8a8a" fill="none" stroke-width="0.8"/></svg><svg class="abs" style="left:3px;top:34.5px" width="8" height="5"><path d="M1,1 L2.5,2.5 L1,4 M4,1 L5.5,2.5 L4,4" stroke="#9a9a9a" fill="none" stroke-width="0.7"/></svg><div class="abs" style="left:5px;top:41.5px;width:10px;height:0.8px;background:#6a6a6a"></div><div class="abs" style="left:3.3px;top:48.8px;width:13.7px;height:10.8px;background:#383838;border-radius:1px"></div><svg class="abs" style="left:3.0px;top:48.2px;overflow:visible" width="14" height="12"><path d="M5,1.3 L5,10.3 L7.3,8 L11,8.2 Z" stroke="#c6c6c6" stroke-width="0.9" fill="none" stroke-linejoin="round"/></svg><svg class="abs" style="left:3.0px;top:60.8px;overflow:visible" width="14" height="12"><path d="M4.5,1.2 L4.5,10.6 L7,8.3 L11,8.4 Z" fill="#c6c6c6"/><circle cx="12.8" cy="10.8" r="0.55" fill="#bbb"/></svg><svg class="abs" style="left:3.0px;top:73.0px;overflow:visible" width="14" height="12"><path d="M3,10.5 L9,4.5" stroke="#c6c6c6" stroke-width="1.2"/><path d="M9.5,1 V3 M8.5,2 H10.5 M11.8,3.6 V4.8 M11.2,4.2 H12.4 M6.8,2.2 V3.2 M6.3,2.7 H7.3" stroke="#c6c6c6" stroke-width="0.6"/><circle cx="12.8" cy="10.8" r="0.55" fill="#bbb"/></svg><svg class="abs" style="left:3.0px;top:85.3px;overflow:visible" width="14" height="12"><ellipse cx="6.5" cy="4.5" rx="4.3" ry="3" stroke="#c6c6c6" stroke-width="1" fill="none"/><path d="M6.5,4 L6.5,11 L8.3,9.3 L11.3,9.4 Z" fill="#c6c6c6"/><circle cx="12.8" cy="10.8" r="0.55" fill="#bbb"/></svg><svg class="abs" style="left:3.0px;top:99.8px;overflow:visible" width="14" height="12"><path d="M3,10.5 L4,7 L8.5,2.5 L11,5 L6.5,9.5 Z" fill="#c6c6c6"/><path d="M3,10.5 L5.5,8" stroke="#535353" stroke-width="0.6"/><circle cx="12.8" cy="10.8" r="0.55" fill="#bbb"/></svg><svg class="abs" style="left:3.0px;top:112.5px;overflow:visible" width="14" height="12"><path d="M5,10 L6,7 L9.5,3.5 L11.5,5.5 L8,9 Z" fill="#c6c6c6"/><path d="M5,10 C2,10.5 1.5,8 3.5,7 C5.5,6 3.5,4 2.5,5" stroke="#c6c6c6" fill="none" stroke-width="0.8"/><circle cx="12.8" cy="10.8" r="0.55" fill="#bbb"/></svg><svg class="abs" style="left:3.0px;top:124.19999999999999px;overflow:visible" width="14" height="12"><path d="M3,2 H11 M7,2 V11 M5.5,11 H8.5 M3,2 V3.5 M11,2 V3.5" stroke="#c6c6c6" stroke-width="1.2" fill="none"/><circle cx="12.8" cy="10.8" r="0.55" fill="#bbb"/></svg><svg class="abs" style="left:3.0px;top:136.5px;overflow:visible" width="14" height="12"><path d="M3,10.5 L10.5,2" stroke="#c6c6c6" stroke-width="0.9"/><circle cx="12.8" cy="10.8" r="0.55" fill="#bbb"/></svg><svg class="abs" style="left:3.0px;top:149.0px;overflow:visible" width="14" height="12"><rect x="2.5" y="2.5" width="8.5" height="7.5" stroke="#c6c6c6" stroke-width="0.9" fill="#6a6a6a"/><circle cx="12.8" cy="10.8" r="0.55" fill="#bbb"/></svg><svg class="abs" style="left:3.0px;top:161.5px;overflow:visible" width="14" height="12"><path d="M10.5,1.5 L6,7.5" stroke="#c6c6c6" stroke-width="1.6"/><path d="M6,7 C3,7 4,10.5 2.5,11 C5.5,11.5 7.5,10 6.8,8 Z" fill="#c6c6c6"/><circle cx="12.8" cy="10.8" r="0.55" fill="#bbb"/></svg><svg class="abs" style="left:3.0px;top:174.0px;overflow:visible" width="14" height="12"><circle cx="5" cy="7" r="3.2" stroke="#c6c6c6" stroke-width="0.9" fill="none"/><path d="M4,10.5 L11,3.5" stroke="#c6c6c6" stroke-width="1.5"/><circle cx="12.8" cy="10.8" r="0.55" fill="#bbb"/></svg><svg class="abs" style="left:3.0px;top:186.0px;overflow:visible" width="14" height="12"><path d="M3,7.5 L7.5,2.5 L11.5,6 L7,11 Z" fill="#c6c6c6"/><path d="M5,9.5 L9,5" stroke="#535353" stroke-width="0.5"/><circle cx="12.8" cy="10.8" r="0.55" fill="#bbb"/></svg><svg class="abs" style="left:3.0px;top:200.0px;overflow:visible" width="14" height="12"><path d="M4,4 A4.3,4.3 0 1 0 7,2.7" stroke="#c6c6c6" stroke-width="1" fill="none"/><path d="M2.6,2.2 L5.2,2.4 L4.3,5" stroke="#c6c6c6" stroke-width="0.9" fill="none"/><circle cx="12.8" cy="10.8" r="0.55" fill="#bbb"/></svg><svg class="abs" style="left:3.0px;top:213.5px;overflow:visible" width="14" height="12"><rect x="2.5" y="4.5" width="6.5" height="6.5" stroke="#c6c6c6" stroke-width="0.9" fill="none"/><rect x="5.5" y="1.5" width="6" height="6" stroke="#c6c6c6" stroke-width="0.9" fill="#535353"/><path d="M5,8.5 L10,3.5 M7.5,3.2 H10.2 V5.9" stroke="#c6c6c6" stroke-width="0.8" fill="none"/><circle cx="12.8" cy="10.8" r="0.55" fill="#bbb"/></svg><svg class="abs" style="left:3.0px;top:225.7px;overflow:visible" width="14" height="12"><path d="M2,7.5 C4,3 5,9 7,5 M6.5,9 L8,6.5 M9,11 L10.5,8.5" stroke="#c6c6c6" stroke-width="1.3" fill="none"/><path d="M4,2 L11,11" stroke="#c6c6c6" stroke-width="0.8"/><circle cx="12.8" cy="10.8" r="0.55" fill="#bbb"/></svg><svg class="abs" style="left:3.0px;top:237.8px;overflow:visible" width="14" height="12"><path d="M3,11 L7.5,6.5" stroke="#c6c6c6" stroke-width="1"/><path d="M5.5,4.5 L9,1.5 L11.5,4 L8.5,7.5 Z" fill="#c6c6c6"/><circle cx="12.8" cy="10.8" r="0.55" fill="#bbb"/></svg><svg class="abs" style="left:3.0px;top:250.7px;overflow:visible" width="14" height="12"><circle cx="5" cy="5" r="3.5" stroke="#c6c6c6" stroke-width="0.9" fill="none"/><circle cx="8" cy="5" r="3.5" stroke="#c6c6c6" stroke-width="0.9" fill="none"/><path d="M7,5.5 L7,11.5 L8.6,10 L11.3,10.1 Z" fill="#c6c6c6"/><circle cx="12.8" cy="10.8" r="0.55" fill="#bbb"/></svg><svg class="abs" style="left:3.0px;top:262.5px;overflow:visible" width="14" height="12"><path d="M2.5,1.5 V11 H11.5 Z" stroke="#c6c6c6" stroke-width="0.9" fill="none"/><path d="M2.5,6 L7,11 M2.5,8.5 L5,11 M4,4 L4,11 M6,6.5 V11" stroke="#c6c6c6" stroke-width="0.6"/><circle cx="12.8" cy="10.8" r="0.55" fill="#bbb"/></svg><svg class="abs" style="left:3.0px;top:277.0px;overflow:visible" width="14" height="12"><rect x="2" y="1.5" width="10" height="9.5" stroke="#c6c6c6" stroke-width="0.9" fill="none"/><path d="M2,4.5 C5,3.5 8,5.5 12,4.5 M2,8 C5,7 8,9 12,8 M5.5,1.5 C4.5,4 6.5,8 5.5,11 M9,1.5 C8,4 10,8 9,11" stroke="#c6c6c6" stroke-width="0.8" fill="none"/><circle cx="12.8" cy="10.8" r="0.55" fill="#bbb"/></svg><svg class="abs" style="left:3.0px;top:289.8px;overflow:visible" width="14" height="12"><defs><linearGradient id="tg" x1="0" x2="1"><stop offset="0" stop-color="#444"/><stop offset="1" stop-color="#ddd"/></linearGradient></defs><rect x="2" y="1.5" width="10" height="9.5" stroke="#c6c6c6" stroke-width="0.9" fill="url(#tg)"/><circle cx="12.8" cy="10.8" r="0.55" fill="#bbb"/></svg><svg class="abs" style="left:3.0px;top:302.6px;overflow:visible" width="14" height="12"><path d="M2.5,11 L8,5" stroke="#c6c6c6" stroke-width="1"/><path d="M6.5,3.5 L9.5,0.8 L12.2,3.5 L9.5,6.5 Z M7,6 L9,8" fill="#c6c6c6" stroke="#c6c6c6" stroke-width="0.8"/><circle cx="12.8" cy="10.8" r="0.55" fill="#bbb"/></svg><svg class="abs" style="left:3.0px;top:313.8px;overflow:visible" width="14" height="12"><circle cx="4.5" cy="4.5" r="3.3" stroke="#c6c6c6" stroke-width="0.9" fill="#535353"/><circle cx="7.5" cy="7" r="3.3" stroke="#c6c6c6" stroke-width="0.9" fill="#535353"/><circle cx="9.5" cy="8.5" r="2.3" fill="#c6c6c6"/><circle cx="12.8" cy="10.8" r="0.55" fill="#bbb"/></svg><svg class="abs" style="left:3.0px;top:329.8px;overflow:visible" width="14" height="12"><path d="M4,1 H7 V3.5 H4 Z M3,3.5 L8,3.5 L8.5,11 L3,11 Z" fill="none" stroke="#c6c6c6" stroke-width="0.8"/><rect x="6" y="6.5" width="5.5" height="4.5" fill="#c6c6c6"/><circle cx="12.8" cy="10.8" r="0.55" fill="#bbb"/></svg><svg class="abs" style="left:3.0px;top:341.0px;overflow:visible" width="14" height="12"><path d="M2,11 H12 M3.5,11 V5 M6,11 V2 M8.5,11 V6 M11,11 V3.5" stroke="#c6c6c6" stroke-width="1.2"/><circle cx="12.8" cy="10.8" r="0.55" fill="#bbb"/></svg><svg class="abs" style="left:3.0px;top:356.0px;overflow:visible" width="14" height="12"><path d="M3.5,1 V9 H12 M1,3.5 H9.5 V11.5" stroke="#c6c6c6" stroke-width="0.9" fill="none"/><circle cx="12.8" cy="10.8" r="0.55" fill="#bbb"/></svg><svg class="abs" style="left:3.0px;top:368.6px;overflow:visible" width="14" height="12"><path d="M2.5,11 L9,4.5 L11,6.5 L4.5,11 Z" fill="#c6c6c6"/><path d="M8,2 L11.5,5.5" stroke="#c6c6c6" stroke-width="0.9"/><circle cx="12.8" cy="10.8" r="0.55" fill="#bbb"/></svg><svg class="abs" style="left:3.0px;top:381.5px;overflow:visible" width="14" height="12"><path d="M4,11 L2.5,6 L3.5,5.5 L5,7.5 L5,2 L6.2,2 L6.2,6 L6.5,1.2 L7.8,1.2 L7.8,6 L8.3,2 L9.5,2 L9.5,6.5 L10.3,4 L11.5,4.3 L10.5,9 L9,11 Z" fill="#c6c6c6"/><circle cx="12.8" cy="10.8" r="0.55" fill="#bbb"/></svg><svg class="abs" style="left:3.0px;top:393.5px;overflow:visible" width="14" height="12"><circle cx="5.5" cy="5" r="3.6" stroke="#c6c6c6" stroke-width="1" fill="none"/><path d="M8,7.5 L11.5,11" stroke="#c6c6c6" stroke-width="1.5"/><circle cx="12.8" cy="10.8" r="0.55" fill="#bbb"/></svg><svg class="abs" style="left:0px;top:405px" width="20" height="64"><rect x="3" y="5.2" width="4.2" height="4" fill="#111" stroke="#cfcfcf" stroke-width="0.6"/><rect x="4.6" y="6.6" width="3" height="2.8" fill="#ddd"/><path d="M12.8,5.8 C15.5,5.8 16.8,7 16.8,9.5 M15.5,8.6 L16.8,10 L18,8.6 M13.8,4.6 L12.6,5.8 L13.8,7" stroke="#c8c8c8" stroke-width="0.7" fill="none"/><rect x="7.3" y="18.7" width="9.9" height="9.3" fill="#fff"/><path d="M7.8,27.6 L16.8,19.1" stroke="#e61e28" stroke-width="1.2"/><rect x="9.6" y="21" width="5.3" height="4.7" fill="#000"/><rect x="9.6" y="21" width="5.3" height="4.7" fill="none" stroke="#fff" stroke-width="0.6"/><path d="M9.8,25.6 L14.8,21" stroke="#e61e28" stroke-width="1.2"/><rect x="2.4" y="14.1" width="9.2" height="8.6" fill="#000" stroke="#d8d8d8" stroke-width="0.9"/><rect x="2.9" y="32" width="4" height="4.6" fill="#000"/><rect x="7.9" y="32" width="3.3" height="4.6" fill="#cfcfcf"/><rect x="11.9" y="32" width="4.6" height="4.6" fill="#fff"/><path d="M11.9,36.6 L16.5,32" stroke="#e61e28" stroke-width="0.9"/><circle cx="9" cy="43.5" r="2.4" fill="none" stroke="#c8c8c8" stroke-width="0.8"/><circle cx="10.5" cy="45" r="2.2" fill="#9a9a9a"/><rect x="5.5" y="55" width="6" height="5" fill="none" stroke="#c8c8c8" stroke-width="0.8"/><rect x="8.5" y="53" width="6" height="5" fill="#535353" stroke="#c8c8c8" stroke-width="0.8"/></svg><div class="abs" style="left:473px;top:33px;width:127px;height:7.5px;background:#454545;"></div><svg class="abs" style="left:590px;top:34.5px" width="8" height="5"><path d="M1,1 L2.5,2.5 L1,4 M4,1 L5.5,2.5 L4,4" stroke="#9a9a9a" fill="none" stroke-width="0.7"/></svg><div class="abs" style="left:473px;top:40.5px;width:127px;height:13px;background:#424242;"></div><div class="abs" style="left:473px;top:40.5px;width:22.6px;height:13px;background:#454545;border-right:0.8px solid #3a3a3a"></div><div class="abs" style="left:495.6px;top:40.5px;width:40.1px;height:13px;background:#454545;border-right:0.8px solid #3a3a3a"></div><div class="abs" style="left:535.7px;top:40.5px;width:34px;height:13px;background:#535353;"></div><svg class="abs" style="left:477.60px;top:42.16px;overflow:visible" width="14.00" height="10.08"><text x="0" y="7.24" font-size="6.3" fill="#c8c8c8" font-weight="normal" font-style="normal" textLength="14.00" lengthAdjust="spacingAndGlyphs">Color</text></svg><svg class="abs" style="left:500.30px;top:42.16px;overflow:visible" width="31.50" height="10.08"><text x="0" y="7.24" font-size="6.3" fill="#c8c8c8" font-weight="normal" font-style="normal" textLength="31.50" lengthAdjust="spacingAndGlyphs">Color Guide</text></svg><svg class="abs" style="left:538.5px;top:44px" width="4" height="7"><path d="M2,0.6 L3.4,2.6 H0.6Z M2,6.4 L3.4,4.4 H0.6Z" fill="#bbb"/></svg><svg class="abs" style="left:543.70px;top:42.16px;overflow:visible" width="22.70" height="10.08"><text x="0" y="7.24" font-size="6.3" fill="#f0f0f0" font-weight="bold" font-style="normal" textLength="22.70" lengthAdjust="spacingAndGlyphs">Gradient</text></svg><svg class="abs" style="left:592px;top:45px" width="6" height="5"><path d="M0,0.6 H5.5 M0,2.2 H5.5 M0,3.8 H5.5" stroke="#8c8c8c" stroke-width="1"/></svg><svg class="abs" style="left:476px;top:56.5px" width="20" height="17"><defs><linearGradient id="gth" x1="0" x2="1"><stop offset="0" stop-color="#fff"/><stop offset="1" stop-color="#000"/></linearGradient></defs><rect x="0.5" y="0.5" width="15.5" height="16" fill="url(#gth)" stroke="#3a3a3a" stroke-width="0.7"/><path d="M17.2,7.5 H19.6 L18.4,9Z" fill="#ccc"/></svg><svg class="abs" style="left:504.70px;top:58.96px;overflow:visible" width="13.30" height="10.08"><text x="0" y="7.24" font-size="6.3" fill="#d0d0d0" font-weight="normal" font-style="normal" textLength="13.30" lengthAdjust="spacingAndGlyphs">Type:</text></svg><div class="abs" style="left:521px;top:58.4px;width:75.8px;height:8.8px;background:#484848;border-radius:1px"></div><svg class="abs" style="left:589.5px;top:60.8px" width="6" height="4"><path d="M1,0.8 L3,2.8 L5,0.8" stroke="#c8c8c8" fill="none" stroke-width="0.9"/></svg><svg class="abs" style="left:475px;top:75px" width="18" height="17"><rect x="6.5" y="6.5" width="9.5" height="9.5" fill="#fff"/><path d="M7,15.6 L15.6,7" stroke="#e61e28" stroke-width="1.2"/><rect x="7.5" y="7.5" width="7.5" height="7.5" fill="none" stroke="#535353" stroke-width="1.8"/><rect x="1" y="1" width="9.5" height="9.5" fill="#000" stroke="#d8d8d8" stroke-width="0.9"/></svg><svg class="abs" style="left:501.00px;top:71.25px;overflow:visible" width="16.70" height="10.08"><text x="0" y="7.24" font-size="6.3" fill="#8a8a8a" font-weight="normal" font-style="normal" textLength="16.70" lengthAdjust="spacingAndGlyphs">Stroke:</text></svg><div class="abs" style="left:521.5px;top:71.2px;width:9.5px;height:9.5px;background:#4e4e4e;border:0.7px solid #606060"></div><div class="abs" style="left:532.8px;top:71.2px;width:9.5px;height:9.5px;background:#4e4e4e;border:0.7px solid #606060"></div><div class="abs" style="left:544.1px;top:71.2px;width:9.5px;height:9.5px;background:#4e4e4e;border:0.7px solid #606060"></div><svg class="abs" style="left:521.5px;top:71.2px" width="33" height="10"><path d="M2.5,8 V2.5 H7.5 M4.5,8 V4.5 H7.5 M13.8,8 V2.5 H18.8 M16,6 H18.8 V4.5 M25,8 V2.5 H30 M27,8 V4.5 H30" stroke="#7a7a7a" stroke-width="0.7" fill="none"/></svg><svg class="abs" style="left:507px;top:83px" width="10" height="9"><path d="M1,8 H9 M1,8 L7,2" stroke="#b8b8b8" stroke-width="0.8" fill="none"/><path d="M5,8 A4,4 0 0 0 4,5" stroke="#b8b8b8" stroke-width="0.6" fill="none"/></svg><div class="abs" style="left:520.8px;top:83px;width:39.5px;height:9.5px;background:#4f4f4f;"></div><svg class="abs" style="left:552px;top:86px" width="6" height="4"><path d="M1,0.8 L3,2.8 L5,0.8" stroke="#777" fill="none" stroke-width="0.9"/></svg><svg class="abs" style="left:508px;top:96px" width="10" height="11"><path d="M1,1 H5 M3,1 V10 M1,10 H5" stroke="#b8b8b8" stroke-width="0.8"/><rect x="4.5" y="3.5" width="5" height="4" rx="2" fill="none" stroke="#b8b8b8" stroke-width="0.8"/></svg><div class="abs" style="left:520.8px;top:96px;width:39.5px;height:9.5px;background:#4f4f4f;"></div><svg class="abs" style="left:552px;top:99px" width="6" height="4"><path d="M1,0.8 L3,2.8 L5,0.8" stroke="#777" fill="none" stroke-width="0.9"/></svg><svg class="abs" style="left:479px;top:96.5px" width="10" height="9"><path d="M1,1.5 H4 M1,3.5 H5 L6.5,2 M8.5,5.5 H5 M9,7.5 H6 M2.5,6.5 L1,5.5" stroke="#9a9a9a" stroke-width="0.6" fill="none"/><rect x="1" y="0.8" width="3" height="2.2" fill="none" stroke="#9a9a9a" stroke-width="0.5"/><rect x="6" y="4.8" width="3" height="2.2" fill="none" stroke="#9a9a9a" stroke-width="0.5"/></svg><svg class="abs" style="left:478.7px;top:115px" width="103" height="81"><defs><linearGradient id="gbig" x1="0" x2="1"><stop offset="0" stop-color="#ffffff"/><stop offset="0.1" stop-color="#e4e5e8"/><stop offset="0.5" stop-color="#9a9ba0"/><stop offset="0.85" stop-color="#56575a"/><stop offset="0.95" stop-color="#1a1a1a"/><stop offset="1" stop-color="#000"/></linearGradient></defs><rect width="103" height="81" fill="url(#gbig)"/></svg><svg class="abs" style="left:587.5px;top:118px" width="8" height="9"><path d="M1,2 H7 M3,2 V1 H5 V2 M1.8,2.8 L2.3,8.2 H5.7 L6.2,2.8" stroke="#707070" stroke-width="0.7" fill="none"/></svg><svg class="abs" style="left:497.70px;top:210.35px;overflow:visible" width="20.00" height="10.08"><text x="0" y="7.24" font-size="6.3" fill="#8a8a8a" font-weight="normal" font-style="normal" textLength="20.00" lengthAdjust="spacingAndGlyphs">Opacity:</text></svg><div class="abs" style="left:520.2px;top:210px;width:39.5px;height:9.5px;background:#4f4f4f;"></div><svg class="abs" style="left:552px;top:213px" width="6" height="4"><path d="M1,0.8 L3,2.8 L5,0.8" stroke="#777" fill="none" stroke-width="0.9"/></svg><svg class="abs" style="left:495.60px;top:223.16px;overflow:visible" width="22.00" height="10.08"><text x="0" y="7.24" font-size="6.3" fill="#8a8a8a" font-weight="normal" font-style="normal" textLength="22.00" lengthAdjust="spacingAndGlyphs">Location:</text></svg><div class="abs" style="left:520.2px;top:223px;width:39.5px;height:9.5px;background:#4f4f4f;"></div><svg class="abs" style="left:552px;top:226px" width="6" height="4"><path d="M1,0.8 L3,2.8 L5,0.8" stroke="#777" fill="none" stroke-width="0.9"/></svg><div class="abs" style="left:473px;top:236.3px;width:127px;height:1.5px;background:#404040;"></div><div class="abs" style="left:473px;top:237.8px;width:127px;height:13px;background:#424242;"></div><div class="abs" style="left:473px;top:237.8px;width:63px;height:13px;background:#535353;"></div><svg class="abs" style="left:477.60px;top:239.56px;overflow:visible" width="54.80" height="10.08"><text x="0" y="7.24" font-size="6.3" fill="#ececec" font-weight="bold" font-style="normal" textLength="54.80" lengthAdjust="spacingAndGlyphs">Adobe Color Themes</text></svg><div class="abs" style="left:477.6px;top:256px;width:100.4px;height:9.6px;background:#4a4a4a;border:0.7px solid #636363;border-radius:1.5px"></div><div class="abs" style="left:478.3px;top:256.7px;width:32.4px;height:8.2px;background:#3d3d3d;"></div><div class="abs" style="left:510.7px;top:256.5px;width:0.7px;height:9px;background:#636363;"></div><div class="abs" style="left:544.3px;top:256.5px;width:0.7px;height:9px;background:#636363;"></div><svg class="abs" style="left:487.30px;top:256.30px;overflow:visible" width="13.50" height="9.60"><text x="0" y="6.90" font-size="6" fill="#f2f2f2" font-weight="bold" font-style="normal" textLength="13.50" lengthAdjust="spacingAndGlyphs">Create</text></svg><svg class="abs" style="left:519.80px;top:256.30px;overflow:visible" width="16.20" height="9.60"><text x="0" y="6.90" font-size="6" fill="#c8c8c8" font-weight="normal" font-style="normal" textLength="16.20" lengthAdjust="spacingAndGlyphs">Explore</text></svg><svg class="abs" style="left:549.70px;top:256.30px;overflow:visible" width="24.30" height="9.60"><text x="0" y="6.90" font-size="6" fill="#c8c8c8" font-weight="normal" font-style="normal" textLength="24.30" lengthAdjust="spacingAndGlyphs">My Themes</text></svg><div class="abs" style="left:473px;top:269.8px;width:110px;height:0.7px;background:#4a4a4a;"></div><svg class="abs" style="left:505.80px;top:276.07px;overflow:visible" width="14.00" height="9.92"><text x="0" y="7.13" font-size="6.2" fill="#eeeeee" font-weight="bold" font-style="normal" textLength="14.00" lengthAdjust="spacingAndGlyphs" text-decoration="underline">Wheel</text></svg><svg class="abs" style="left:530.70px;top:276.07px;overflow:visible" width="14.70" height="9.92"><text x="0" y="7.13" font-size="6.2" fill="#7c7c7c" font-weight="normal" font-style="normal" textLength="14.70" lengthAdjust="spacingAndGlyphs">Sliders</text></svg><div class="abs" style="left:473px;top:290.7px;width:22px;height:22.1px;background:#ff5a12;"></div><div class="abs" style="left:495px;top:290.7px;width:21.600000000000023px;height:22.1px;background:#e83a16;"></div><div class="abs" style="left:516.6px;top:290.7px;width:22.399999999999977px;height:22.1px;background:#ff0000;"></div><div class="abs" style="left:539px;top:290.7px;width:21.600000000000023px;height:22.1px;background:#e8127a;"></div><div class="abs" style="left:560.6px;top:290.7px;width:22.399999999999977px;height:22.1px;background:#ff14f2;"></div><div class="abs" style="left:539px;top:290.7px;width:21.6px;height:22.1px;background:#e8127a;border:0.8px solid #f7c6dd"></div><svg class="abs" style="left:523.5px;top:290.5px" width="8" height="6"><path d="M0.5,0.5 H7.5 L4,5Z" fill="#fff"/></svg><svg class="abs" style="left:502px;top:319px" width="80" height="10"><path d="M1,4 H4.5 M3.2,2.7 L4.5,4 L3.2,5.3" stroke="#d0d0d0" stroke-width="0.8" fill="none"/><rect x="5" y="1.8" width="4.5" height="4.5" fill="#d0d0d0"/><path d="M7,6.5 V8.5 H10.5 V4.5 H9.8" stroke="#d0d0d0" stroke-width="0.7" fill="none"/><path d="M19,4 H22.5 M21.2,2.7 L22.5,4 L21.2,5.3" stroke="#d0d0d0" stroke-width="0.8" fill="none"/><rect x="23" y="1.8" width="4.5" height="4.5" fill="#d0d0d0"/><path d="M25,6.5 V8.5 H28.5 V4.5 H27.8" stroke="#d0d0d0" stroke-width="0.7" fill="none"/><path d="M39,1 H46 M39,3 H46 M39,5 H46 M39,7 H46 M40,0.5 V8 M42.5,0.5 V8 M45,0.5 V8" stroke="#c8c8c8" stroke-width="0.5"/><path d="M36,7.5 H40 M38,5.5 V9.5" stroke="#e0e0e0" stroke-width="0.8"/><path d="M73.5,0.8 L77.2,4.5 L73.5,8.2 L69.8,4.5Z" stroke="#c8c8c8" stroke-width="0.8" fill="none"/><path d="M71.5,3.5 H75.5 M71.5,5.5 H75.5" stroke="#c8c8c8" stroke-width="0.6"/></svg><div class="abs" style="left:476.8px;top:340.4px;width:101.6px;height:102px;border-radius:50%;background:conic-gradient(from 0deg, #ffa800 0deg, #ff8000 30deg, #ff4000 62deg, #ff0000 90deg, #ff0070 118deg, #ff00ff 138deg, #9000ff 165deg, #0000ff 188deg, #0070ff 212deg, #00ffff 238deg, #00ff90 265deg, #00ff00 292deg, #a0ff00 318deg, #ffff00 333deg, #ffd000 348deg, #ffa800 360deg)"></div><div class="abs" style="left:476.8px;top:340.4px;width:101.6px;height:102px;border-radius:50%;background:radial-gradient(circle closest-side, #fff 0%, rgba(255,255,255,0.9) 12%, rgba(255,255,255,0.55) 40%, rgba(255,255,255,0.15) 75%, rgba(255,255,255,0) 95%)"></div><svg class="abs" style="left:470px;top:330px" width="130" height="120"><path d="M57.700000000000045,61.5 L99.70000000000005,37.30000000000001" stroke="rgba(255,255,255,0.55)" stroke-width="3.4" stroke-linecap="round"/><path d="M57.700000000000045,61.5 L104.79999999999995,49" stroke="rgba(255,255,255,0.55)" stroke-width="3.4" stroke-linecap="round"/><path d="M57.700000000000045,61.5 L109.39999999999998,61.5" stroke="rgba(255,255,255,0.55)" stroke-width="3.4" stroke-linecap="round"/><path d="M57.700000000000045,61.5 L104.79999999999995,73.80000000000001" stroke="rgba(255,255,255,0.55)" stroke-width="3.4" stroke-linecap="round"/><path d="M57.700000000000045,61.5 L99.70000000000005,85.60000000000002" stroke="rgba(255,255,255,0.55)" stroke-width="3.4" stroke-linecap="round"/><circle cx="99.70000000000005" cy="37.30000000000001" r="3.1" fill="#f05a28" stroke="#fff" stroke-width="0.9"/><circle cx="104.79999999999995" cy="49" r="3.1" fill="#e0401c" stroke="#fff" stroke-width="0.9"/><circle cx="109.39999999999998" cy="61.5" r="3.1" fill="#ff0000" stroke="#fff" stroke-width="0.9"/><circle cx="104.79999999999995" cy="73.80000000000001" r="3.1" fill="#e0107a" stroke="#fff" stroke-width="0.9"/><circle cx="99.70000000000005" cy="85.60000000000002" r="3.1" fill="#ff10f0" stroke="#fff" stroke-width="0.9"/></svg><div class="abs" style="left:473px;top:464.7px;width:110px;height:14.7px;background:#575757;"></div><div class="abs" style="left:476.5px;top:472px;width:103px;height:2px;background:linear-gradient(90deg,#000,#ff1a8c)"></div><div class="abs" style="left:563.6px;top:469.7px;width:6.6px;height:6.6px;border-radius:50%;border:1px solid #fff;background:rgba(0,0,0,0.15)"></div><div class="abs" style="left:477.6px;top:484.6px;width:74.7px;height:10.8px;background:#4a4a4a;border:0.7px solid #6a6a6a;border-radius:1.5px"></div><svg class="abs" style="left:481.30px;top:485.29px;overflow:visible" width="34.70" height="9.76"><text x="0" y="7.01" font-size="6.1" fill="#c8c8c8" font-weight="normal" font-style="italic" textLength="34.70" lengthAdjust="spacingAndGlyphs">My Color Theme</text></svg><div class="abs" style="left:558px;top:484.6px;width:20.8px;height:10.8px;background:#535353;border:0.7px solid #6a6a6a;border-radius:5px"></div><svg class="abs" style="left:563.60px;top:485.40px;overflow:visible" width="10.00" height="9.60"><text x="0" y="6.90" font-size="6" fill="#c8c8c8" font-weight="normal" font-style="normal" textLength="10.00" lengthAdjust="spacingAndGlyphs">Save</text></svg><div class="abs" style="left:473px;top:499.3px;width:127px;height:1.2px;background:#404040;"></div><div class="abs" style="left:473px;top:500.4px;width:127px;height:13px;background:#424242;"></div><div class="abs" style="left:498.3px;top:500.4px;width:47px;height:13px;background:#535353;"></div><svg class="abs" style="left:477.60px;top:502.06px;overflow:visible" width="16.70" height="10.08"><text x="0" y="7.24" font-size="6.3" fill="#c8c8c8" font-weight="normal" font-style="normal" textLength="16.70" lengthAdjust="spacingAndGlyphs">Stroke</text></svg><svg class="abs" style="left:501px;top:503.8px" width="4" height="7"><path d="M2,0.6 L3.4,2.6 H0.6Z M2,6.4 L3.4,4.4 H0.6Z" fill="#bbb"/></svg><svg class="abs" style="left:506.40px;top:502.06px;overflow:visible" width="35.60" height="10.08"><text x="0" y="7.24" font-size="6.3" fill="#f0f0f0" font-weight="bold" font-style="normal" textLength="35.60" lengthAdjust="spacingAndGlyphs">Transparency</text></svg><svg class="abs" style="left:592px;top:505px" width="6" height="5"><path d="M0,0.6 H5.5 M0,2.2 H5.5 M0,3.8 H5.5" stroke="#8c8c8c" stroke-width="1"/></svg><div class="abs" style="left:473px;top:513.4px;width:127px;height:1.5px;background:#404040;"></div><div class="abs" style="left:473px;top:514.9px;width:127px;height:16.1px;background:#424242;"></div><div class="abs" style="left:473px;top:514.9px;width:35.6px;height:16.1px;background:#454545;border-right:0.8px solid #3a3a3a"></div><div class="abs" style="left:508.6px;top:514.9px;width:26.4px;height:16.1px;background:#454545;border-right:0.8px solid #3a3a3a"></div><div class="abs" style="left:535px;top:514.9px;width:30.5px;height:16.1px;background:#535353;"></div><svg class="abs" style="left:477.60px;top:518.05px;overflow:visible" width="26.60" height="10.08"><text x="0" y="7.24" font-size="6.3" fill="#c8c8c8" font-weight="normal" font-style="normal" textLength="26.60" lengthAdjust="spacingAndGlyphs">Properties</text></svg><svg class="abs" style="left:513.30px;top:518.05px;overflow:visible" width="17.00" height="10.08"><text x="0" y="7.24" font-size="6.3" fill="#c8c8c8" font-weight="normal" font-style="normal" textLength="17.00" lengthAdjust="spacingAndGlyphs">Layers</text></svg><svg class="abs" style="left:539.30px;top:518.05px;overflow:visible" width="23.40" height="10.08"><text x="0" y="7.24" font-size="6.3" fill="#f0f0f0" font-weight="bold" font-style="normal" textLength="23.40" lengthAdjust="spacingAndGlyphs">Libraries</text></svg><svg class="abs" style="left:592px;top:521px" width="6" height="5"><path d="M0,0.6 H5.5 M0,2.2 H5.5 M0,3.8 H5.5" stroke="#8c8c8c" stroke-width="1"/></svg></body></html>
